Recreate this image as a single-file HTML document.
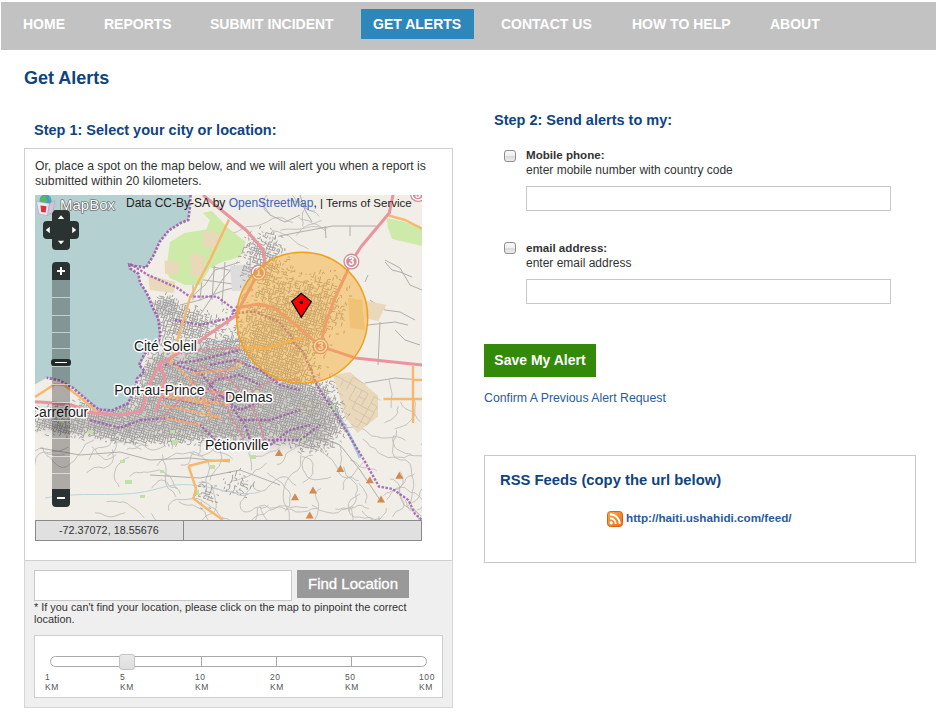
<!DOCTYPE html>
<html><head><meta charset="utf-8">
<style>
*{margin:0;padding:0;box-sizing:border-box}
html,body{width:936px;height:727px;overflow:hidden;background:#fff;font-family:"Liberation Sans",sans-serif;color:#333}
.a{position:absolute;white-space:nowrap}
#nav{position:absolute;left:1px;top:2px;width:935px;height:48px;background:#c2c2c2}
.ni{position:absolute;top:16px;font-size:14px;font-weight:bold;color:#fff;line-height:17px}
#act{position:absolute;left:361px;top:9px;width:113px;height:30px;background:#2d87ba}
h1{position:absolute;left:24px;top:67px;font-size:18px;font-weight:bold;color:#0f447f;line-height:22px;white-space:nowrap}
.h3{position:absolute;font-size:14.5px;font-weight:bold;color:#0f447f;line-height:17px;white-space:nowrap}
#box1{position:absolute;left:24px;top:148px;width:429px;height:413px;border:1px solid #cfcfcf;background:#fff}
#p1{position:absolute;left:35px;top:159px;font-size:12.2px;line-height:15px;color:#333}
#map{position:absolute;left:35px;top:195px;width:387px;height:325px;background:#f1eee8;overflow:hidden}
#coord{position:absolute;left:35px;top:520px;width:387px;height:21px;border:1px solid #8a8a8a;background:#e0e0e0}
#gray{position:absolute;left:24px;top:560px;width:429px;height:148px;background:#efefef;border:1px solid #d6d6d6;border-top:1px solid #cfcfcf}
.inp{position:absolute;background:#fff;border:1px solid #c8c8c8}
#find{position:absolute;left:297px;top:570px;width:112px;height:28px;background:#999;color:#fff;font-size:15px;line-height:28px;text-align:center;-webkit-text-stroke:0.3px #fff}
#note{position:absolute;left:34px;top:601px;font-size:10.9px;line-height:12px;color:#333}
#sbox{position:absolute;left:34px;top:635px;width:409px;height:63px;background:#fff;border:1px solid #cfcfcf}
#track{position:absolute;left:50px;top:656px;width:377px;height:11px;border:1px solid #a8a8a8;border-radius:6px;background:#fff}
.tick{position:absolute;top:657px;width:1px;height:9px;background:#a8a8a8}
#handle{position:absolute;left:119px;top:654px;width:16px;height:16px;border:1px solid #c4c4c4;border-radius:3px;background:linear-gradient(#e8e8e8,#dedede)}
.lab{position:absolute;top:672px;font-size:8.5px;line-height:10px;color:#555;letter-spacing:0.6px}
.cb{position:absolute;width:12px;height:12px;border:1px solid #8e8e8e;border-radius:3px;background:linear-gradient(#fbfbfb 0%,#efefef 45%,#dadada 50%,#ececec 100%)}
.lb{position:absolute;left:526px;font-size:12px;line-height:15px;color:#333;white-space:nowrap}
#save{position:absolute;left:484px;top:344px;width:112px;height:33px;background:#338908;color:#fff;font-size:14px;font-weight:bold;line-height:33px;text-align:center}
#conf{position:absolute;left:484px;top:391px;font-size:12.3px;line-height:15px;color:#2b5aa0;white-space:nowrap}
#rss{position:absolute;left:484px;top:455px;width:432px;height:108px;border:1px solid #c8c8c8}
</style></head><body>
<div id="nav"></div>
<div id="act"></div>
<div class="ni" style="left:23px">HOME</div>
<div class="ni" style="left:104px">REPORTS</div>
<div class="ni" style="left:210px">SUBMIT INCIDENT</div>
<div class="ni" style="left:373px">GET ALERTS</div>
<div class="ni" style="left:501px">CONTACT US</div>
<div class="ni" style="left:632px">HOW TO HELP</div>
<div class="ni" style="left:770px">ABOUT</div>

<h1>Get Alerts</h1>
<div class="h3" style="left:34px;top:122px">Step 1: Select your city or location:</div>
<div class="h3" style="left:494px;top:112px">Step 2: Send alerts to my:</div>

<div id="box1"></div>
<div id="p1">Or, place a spot on the map below, and we will alert you when a report is<br>submitted within 20 kilometers.</div>
<div id="map"><svg width="387" height="325" viewBox="35 195 387 325" style="position:absolute;left:0;top:0">
<rect x="35" y="195" width="387" height="325" fill="#f1eee8"/>
<path d="M210.1,480.4 L211.0,476.1 L213.7,472.7 L216.2,469.1 L219.3,466.0 L220.7,461.9 L221.8,457.7 L220.8,453.5 L220.0,449.2 L221.6,445.1 L223.8,441.4 L226.6,438.0 L228.8,434.3 L230.8,430.4M321.0,488.5 L318.2,489.8 L316.2,492.1 L315.2,495.0 L316.2,497.9 L317.3,500.7 L318.6,503.5 L318.6,506.5 L318.4,509.6 L317.7,512.5 L316.9,515.5 L315.5,518.2 L314.3,520.9 L314.0,524.0 L311.8,526.1 L308.7,526.3M360.2,493.7 L355.7,496.6 L351.1,499.1 L348.4,503.6 L348.5,508.9 L350.1,513.9 L354.3,517.1 L359.6,517.0 L364.7,518.2 L369.9,517.4 L374.7,519.6 L379.8,518.6M180.3,493.8 L179.1,490.8 L177.1,488.3 L174.0,487.4 L170.8,487.1 L168.4,485.0 L166.9,482.2 L164.1,480.5 L161.0,479.9 L158.0,481.1 L156.2,483.7 L153.5,485.5 L151.8,488.2M251.4,470.3 L251.5,464.3 L250.6,458.4 L248.8,452.7 L251.1,447.2 L249.2,441.6 L250.4,435.7 L254.9,431.8 L259.9,428.6 L265.8,429.3M42.6,446.9 L43.8,451.6 L46.8,455.5 L51.0,458.2 L53.8,462.2 L57.5,465.5 L62.0,467.5 L66.9,466.7 L70.5,463.4 L74.5,460.5 L77.2,456.4 L80.5,452.8 L83.1,448.6 L85.4,444.2 L89.8,442.1 L94.2,439.9M257.4,508.0 L257.4,512.9 L256.6,517.7 L254.4,522.0 L254.4,526.9 L253.6,531.7 L252.3,536.5 L250.0,540.7 L248.3,545.3M221.7,437.1 L223.8,439.6 L226.7,441.3 L229.0,443.7 L231.9,445.2 L233.9,447.8 L235.5,450.7M148.6,445.8 L145.2,445.5 L141.9,444.7 L138.7,445.8 L136.3,448.1 L132.9,448.7 L129.6,448.1 L126.5,449.5M194.2,452.4 L191.6,454.8 L190.4,458.1 L189.9,461.6 L187.7,464.3 L184.3,465.1 L180.7,465.0M302.5,482.6 L306.7,480.2 L310.3,477.1 L312.9,473.2 L312.6,468.4 L313.0,463.6 L310.6,459.5 L306.3,457.4 L301.6,456.6M87.9,436.5 L90.0,432.4 L93.4,429.2 L97.5,427.1 L102.1,426.8 L106.2,429.1 L110.6,430.5 L114.5,433.0 L116.5,437.2 L116.1,441.8 L116.3,446.4 L114.6,450.8 L111.0,453.7 L107.2,456.3M276.9,464.4 L279.9,464.0 L282.3,462.2 L283.9,459.6 L285.3,456.9 L285.9,454.0 L288.2,451.9 L290.9,450.5 L293.5,449.0 L296.0,447.3 L298.6,445.8 L301.3,444.3 L304.0,442.9 L306.2,440.9 L307.0,437.9 L305.7,435.1M405.5,440.2 L401.1,437.9 L396.3,436.5 L391.4,437.6 L386.5,437.9 L381.5,438.0 L376.7,436.5 L371.8,436.0 L368.0,432.7 L364.2,429.5 L359.5,427.9 L354.6,426.8 L349.7,427.5 L344.7,427.3 L340.3,425.1 L336.9,421.4M112.5,449.3 L112.9,454.0 L113.4,458.7 L111.7,463.2 L108.1,466.2 L103.7,468.1 L99.1,467.1 L94.3,467.6 L90.3,470.1 L86.5,472.8M141.5,449.3 L137.6,447.8 L134.4,445.2 L132.7,441.4 L131.6,437.4 L129.7,433.8 L129.5,429.6 L128.1,425.7 L127.2,421.7 L127.5,417.5 L126.4,413.5 L124.6,409.8 L123.5,405.8M253.3,487.7 L256.8,490.2 L261.1,491.3 L265.3,490.2 L268.1,486.8 L271.4,484.0 L274.5,480.9 L278.1,478.4 L282.1,476.8 L286.5,477.0 L289.8,479.8 L292.4,483.3 L296.2,485.5M218.9,446.1 L214.1,448.3 L210.5,452.1 L205.7,454.3 L200.8,456.2 L195.7,454.8 L190.6,453.5M420.8,444.3 L424.0,444.0 L426.6,442.0 L429.1,440.0 L432.0,438.3 L435.2,438.5 L438.5,438.1 L441.7,438.1 L444.6,439.6 L446.5,442.2M400.4,471.7 L402.9,477.1 L403.1,483.1 L399.8,488.1 L399.5,494.0 L401.4,499.7 L404.0,505.0 L409.2,508.0 L414.9,509.5 L418.5,514.3 L418.7,520.2 L420.9,525.7 L421.2,531.7 L425.3,536.1 L429.3,540.5 L435.1,541.6 L441.0,541.4M198.1,454.8 L200.3,451.8 L200.2,448.2 L200.4,444.5 L201.4,441.0 L204.2,438.7 L206.9,436.3M421.9,511.1 L423.3,505.7 L424.5,500.3 L428.7,496.7 L430.3,491.4 L429.7,485.9 L429.3,480.4 L427.3,475.3 L427.1,469.8 L427.9,464.3 L428.9,458.9 L432.3,454.5 L436.0,450.5 L438.6,445.6 L440.3,440.3M362.1,511.0 L364.4,514.2 L367.6,516.5 L370.7,518.8 L374.1,520.7 L378.1,520.6 L381.0,518.0 L383.4,514.9 L386.0,512.0 L386.3,508.1M390.0,479.0 L393.4,479.4 L395.9,481.6 L398.5,483.7 L399.6,486.9 L399.2,490.2 L399.3,493.6 L400.6,496.7 L401.9,499.8 L403.9,502.5 L404.0,505.9 L402.3,508.8 L399.2,510.2 L396.1,511.5 L394.2,514.2 L392.5,517.1M46.4,453.4 L49.4,454.3 L52.5,454.3 L55.4,455.2 L58.5,455.1 L61.6,454.9 L64.7,454.7M260.3,506.7 L261.4,510.3 L262.8,513.8 L264.7,517.0 L267.0,519.9 L269.2,522.9 L272.6,524.6 L276.3,524.8 L280.0,525.7 L283.4,527.3 L286.7,529.0 L288.9,532.0 L290.5,535.4 L290.3,539.2 L291.6,542.7 L291.5,546.5M348.7,511.2 L350.8,506.9 L354.4,503.7 L356.3,499.3 L355.6,494.6 L357.5,490.1 L356.9,485.4 L353.9,481.7 L350.3,478.5 L346.4,475.7 L344.9,471.1 L343.6,466.5M307.8,448.1 L312.6,446.5 L317.6,446.3 L322.0,448.8 L323.9,453.5 L328.0,456.5 L332.0,459.6 L334.7,463.8 L337.4,468.1 L338.9,473.0 L342.2,476.7 L347.1,477.9 L352.0,476.4 L354.8,472.2 L358.0,468.3 L361.3,464.4 L364.9,460.9M91.7,446.6 L94.4,448.8 L96.5,451.7 L98.3,454.7 L101.3,456.5 L103.8,459.0 L107.3,459.6 L110.6,458.4 L113.6,456.6 L116.4,454.5M172.2,448.9 L172.7,445.9 L171.9,443.0 L170.9,440.1 L170.9,437.1 L170.5,434.1 L168.9,431.5 L166.3,429.9 L163.7,428.3 L160.7,428.7 L157.9,427.4 L155.9,425.1M307.7,507.5 L301.9,507.4 L296.1,506.7 L290.3,507.3 L284.7,505.8 L278.9,506.0 L274.0,509.2 L268.4,510.5 L264.0,514.3 L258.2,515.0 L253.4,518.3 L249.6,522.7 L245.6,526.9 L242.4,531.8 L239.6,536.9 L239.4,542.7 L241.5,548.2M106.5,501.8 L110.9,501.2 L115.3,501.4 L119.6,502.4 L123.9,501.8 L127.8,503.8 L131.2,506.7 L135.1,508.8 L138.4,511.6 L141.5,514.8 L144.4,518.1M185.8,520.0 L188.8,522.1 L191.5,524.4 L195.1,525.1 L198.5,523.7 L201.2,521.2 L203.6,518.6 L206.1,515.9 L209.4,514.3 L212.9,513.4 L215.1,510.5 L216.2,507.0 L216.1,503.4 L215.3,499.9 L214.7,496.3 L213.6,492.8 L212.6,489.3M362.6,439.0 L367.0,442.1 L370.0,446.6 L375.1,448.4 L378.3,452.8 L383.2,455.3 L388.1,457.5 L393.5,457.3 L399.0,457.1 L404.3,457.7 L409.1,455.1 L414.5,455.7 L419.9,455.8 L425.3,456.0M266.4,462.9 L263.4,466.2 L259.8,468.8 L255.5,470.0 L252.8,473.6 L249.0,475.9 L245.0,477.7 L240.7,478.8 L236.5,480.4 L232.1,480.9 L228.8,483.9M157.0,465.8 L160.5,461.0 L166.0,458.8 L171.3,456.0 L176.5,453.1 L182.4,454.0 L188.2,452.8 L194.1,451.8 L199.5,454.3 L203.9,458.4 L208.4,462.3 L209.6,468.1 L208.1,473.9 L205.8,479.4 L206.6,485.3 L206.4,491.3M211.4,448.3 L214.2,451.2 L218.2,452.3 L222.2,453.0 L226.1,454.2 L229.6,456.1 L232.6,458.9M175.9,496.9 L173.2,491.7 L168.3,488.6 L165.7,483.3 L165.4,477.5 L166.1,471.6 L165.6,465.8 L163.3,460.4 L162.5,454.6M253.6,483.3 L251.6,486.5 L249.5,489.7 L246.8,492.4 L245.4,496.0 L243.2,499.2 L240.5,501.9 L240.1,505.7 L241.0,509.4 L243.9,511.8 L247.8,511.9 L251.4,510.6 L254.4,508.2 L258.0,507.1 L261.7,508.1 L265.5,507.3 L268.7,505.2M414.8,473.6 L411.9,475.7 L408.3,476.3 L405.7,478.8 L404.7,482.3 L402.3,485.1 L399.5,487.4 L396.1,488.5 L393.3,490.9 L390.9,493.5 L389.4,496.8 L386.7,499.3M177.8,488.8 L174.6,486.4 L173.3,482.7 L171.7,479.1 L169.4,475.8 L165.7,474.3 L163.3,471.1 L159.5,469.9 L155.6,470.9 L151.7,471.5 L147.8,472.3 L143.9,472.0 L140.0,472.9 L136.1,472.2 L132.4,473.8 L129.7,476.7M291.2,437.4 L290.6,432.9 L292.2,428.8 L292.2,424.3 L293.1,419.9 L293.0,415.4 L295.2,411.6 L296.5,407.3 L297.4,402.9 L298.9,398.6 L302.4,395.8M300.9,455.1 L300.4,460.5 L300.7,465.9 L297.8,470.5 L293.0,472.9 L289.3,476.9 L286.4,481.4 L284.4,486.5 L283.4,491.8 L283.2,497.2 L283.9,502.6 L286.7,507.2 L289.1,512.0 L289.3,517.4 L289.2,522.8M358.7,480.7 L355.5,480.0 L352.9,478.0 L349.7,477.2 L346.7,478.3 L344.5,480.8 L343.1,483.7 L343.8,486.9 L343.0,490.1M198.6,482.4 L204.0,482.1 L209.1,483.5 L212.7,487.5 L217.9,488.8 L222.8,491.1 L228.1,490.8 L233.3,492.3 L238.0,494.8 L243.3,495.6 L248.5,494.2M331.2,476.9 L327.3,478.4 L323.1,478.9 L319.0,479.5 L314.8,479.8 L310.7,478.9 L307.1,476.8 L305.2,473.0 L302.9,469.6 L302.3,465.4 L302.7,461.3 L305.1,457.8 L308.6,455.6 L312.8,455.3M378.9,516.2 L378.9,519.3 L380.4,521.9 L380.2,525.0 L378.3,527.4 L377.5,530.4 L378.0,533.4 L378.0,536.5 L377.2,539.5 L377.1,542.5 L377.6,545.6 L377.9,548.6 L379.1,551.4 L378.7,554.5 L378.5,557.5 L377.3,560.4 L376.9,563.4M95.2,512.8 L100.4,513.2 L105.0,515.7 L110.1,517.0 L115.3,516.0 L120.2,514.1 L125.3,512.7M267.2,472.5 L269.6,475.2 L273.0,476.7 L275.7,479.2 L278.9,480.9 L282.0,482.9 L284.0,486.0 L286.0,489.0 L289.0,491.2 L290.4,494.6 L289.7,498.2 L289.8,501.9 L289.6,505.6 L287.3,508.4 L285.1,511.3M120.5,434.5 L116.3,437.9 L112.1,441.2 L109.1,445.7 L103.9,447.2 L98.5,447.6 L93.6,449.9 L91.3,454.8 L89.1,459.7M178.8,501.7 L183.0,504.1 L187.7,505.3 L192.5,504.9 L196.8,507.0 L201.1,509.1 L205.0,512.0 L206.1,516.7 L208.6,520.8 L210.9,525.0 L215.0,527.7 L217.8,531.6 L222.4,532.8M352.9,506.2 L351.5,509.1 L352.0,512.3 L352.5,515.5 L353.2,518.7 L351.8,521.7 L350.1,524.4 L347.3,526.0 L345.0,528.4M340.5,467.5 L340.7,464.3 L341.1,461.0 L341.7,457.8 L340.7,454.7 L341.2,451.4 L340.8,448.2 L339.6,445.1 L336.9,443.3 L333.8,442.2 L330.7,441.3 L327.9,439.5 L324.9,438.3 L322.3,436.3 L319.1,436.0 L315.8,436.1 L312.5,436.5M409.2,504.7 L412.9,502.4 L416.5,499.9 L419.2,496.6 L419.8,492.3 L422.0,488.6 L425.7,486.3 L430.0,486.0 L434.3,487.1 L437.3,490.2 L441.4,491.5 L445.2,493.6 L447.1,497.5 L447.6,501.8 L445.4,505.6 L442.1,508.3 L438.5,510.8M68.6,447.0 L64.0,449.2 L59.1,451.1 L53.9,451.3 L48.9,452.8 L43.8,451.9 L39.0,453.9 L35.8,457.9 L35.2,463.1 L33.5,468.0 L30.3,472.1 L29.3,477.2 L29.0,482.4M358.9,483.3 L361.0,485.9 L363.3,488.3 L364.6,491.3 L366.5,494.0 L367.0,497.2 L365.7,500.2 L365.9,503.5M114.5,443.3 L118.7,441.9 L123.2,441.9 L127.6,442.6 L132.0,442.1 L136.2,443.4 L140.7,443.2 L144.3,445.8 L147.8,448.6 L152.0,450.0 L156.4,449.6 L160.6,447.9 L164.5,446.0M250.6,448.4 L253.8,444.1 L254.6,438.8 L257.3,434.1 L262.0,431.7 L266.9,429.5 L271.3,426.4 L275.7,423.2 L278.0,418.4 L281.6,414.5 L286.9,413.7 L292.3,413.0M311.9,505.2 L316.2,507.0 L319.6,510.3 L324.1,511.5 L328.7,512.6 L333.3,513.2 L338.0,512.7 L341.6,509.7 L346.3,509.0 L350.4,506.8M376.7,470.7 L373.5,468.9 L369.8,469.3 L366.4,467.7 L362.7,467.6 L359.2,466.4 L357.0,463.4 L354.0,461.1 L350.4,460.4M396.5,430.3 L396.2,436.0 L393.4,441.0 L393.0,446.7 L392.3,452.3 L394.8,457.4 L399.9,459.9 L405.6,460.0 L410.0,463.6 L411.4,469.1 L411.7,474.8 L413.4,480.2 L413.8,485.9 L412.4,491.4 L411.8,497.1 L410.6,502.6 L407.1,507.1M41.3,448.0 L38.4,449.0 L35.7,450.5 L33.4,452.6 L32.3,455.5 L32.4,458.6 L30.7,461.2 L30.9,464.3 L29.8,467.2 L27.9,469.6 L25.2,471.1 L22.7,473.0 L20.2,474.8 L19.1,477.7M168.7,510.7 L168.6,505.4 L172.0,501.3 L176.8,499.2 L182.1,499.7 L187.3,499.4 L192.5,498.7 L197.8,498.5 L202.4,501.1 L206.9,503.9 L211.2,506.9 L215.9,509.4 L218.4,514.0 L222.0,517.8 L227.2,518.8 L231.8,521.4M383.4,495.9 L386.2,493.1 L390.0,492.1 L393.2,489.8 L397.2,489.2 L400.6,487.3 L404.6,487.5 L407.7,490.0 L410.8,492.4 L414.8,492.8 L417.9,495.3 L420.8,497.9 L423.1,501.2 L423.0,505.2 L421.0,508.6 L417.3,509.9M317.8,508.4 L312.2,508.8 L307.2,511.3 L301.6,511.9 L296.0,512.0 L291.3,509.1 L285.7,509.2 L280.5,507.0 L274.9,507.7 L269.4,508.2 L264.6,505.2 L259.1,506.1M129.4,456.9 L126.2,458.4 L123.0,459.8 L120.8,462.6 L118.0,464.6 L116.1,467.6 L115.1,471.0 L114.3,474.4 L114.4,477.9 L115.4,481.3 L117.9,483.8 L119.2,487.1M335.5,509.1 L339.4,509.4 L343.0,508.0 L346.9,508.4 L350.8,508.1 L354.6,507.6 L357.9,505.5 L361.7,505.3 L364.9,507.6 L368.7,508.4M279.7,447.2 L276.2,450.7 L271.3,451.3 L266.8,453.5 L262.6,456.1 L257.7,456.2 L252.9,457.4M405.3,500.1 L406.7,503.0 L407.2,506.2 L408.9,509.0 L411.7,510.7 L414.8,511.3 L417.8,512.6 L420.0,515.0 L422.6,516.9 L424.7,519.4 L425.2,522.6 L425.3,525.8 L426.6,528.8M151.5,513.4 L153.2,516.6 L155.2,519.8 L158.5,521.3 L160.5,524.4 L163.9,525.8 L165.9,528.9 L169.4,529.9 L172.8,531.4 L176.1,533.1 L179.6,534.3 L182.9,535.9 L186.5,535.9 L189.4,538.1 L193.0,539.0 L196.6,538.2 L200.3,538.6M272.0,230.6 L277.9,231.6 L283.3,234.0 L289.0,235.9 L293.4,239.9 L297.8,243.9 L303.3,246.3 L308.6,249.0M315.1,211.2 L309.8,210.6 L305.0,208.2 L300.7,205.0 L296.5,201.8 L294.2,197.0 L290.4,193.2 L287.8,188.5 L283.8,184.9 L280.2,180.9 L275.7,178.0 L271.1,175.4 L267.3,171.6M325.1,230.6 L322.0,228.4 L319.2,225.8 L315.9,224.1 L312.2,223.3 L309.2,221.0 L305.5,220.1 L301.8,219.5 L298.6,217.5M292.8,222.4 L287.5,221.1 L283.0,218.0 L277.7,217.3 L272.4,218.6 L267.9,221.5 L262.9,223.8 L257.9,225.7 L252.5,226.4 L247.1,226.5 L242.2,228.8 L237.5,231.6 L232.4,233.3M327.4,228.2 L322.1,227.5 L316.9,226.7 L311.6,226.5 L306.4,227.7 L301.3,228.9 L296.0,229.3 L290.7,229.1 L285.4,229.2 L280.2,230.2M302.7,226.4 L303.1,223.1 L302.4,219.8 L302.4,216.4 L302.5,213.0 L304.2,210.1M270.2,213.4 L267.1,212.4 L264.8,210.1 L263.7,207.1 L263.1,203.8 L263.3,200.6 L265.0,197.7 L267.0,195.1M290.7,200.3 L294.8,201.5 L299.0,201.8 L302.7,203.9 L305.2,207.4 L308.6,210.0 L312.6,211.4 L316.5,213.1 L319.1,216.4M321.6,220.5 L317.5,222.0 L313.5,223.9 L309.2,224.6 L305.2,226.5 L301.6,229.0 L299.0,232.5 L296.1,235.8M391.1,408.1 L391.2,403.4 L391.3,398.6 L392.1,393.9 L391.0,389.2 L390.0,384.5 L389.1,379.8M400.5,401.9 L402.2,405.6 L405.1,408.4 L408.8,410.3 L412.6,411.7 L415.3,414.8 L417.1,418.5 L419.8,421.6M398.4,406.1 L397.2,409.3 L397.6,412.7 L395.9,415.7 L393.3,417.9 L390.7,420.2 L387.5,421.2 L384.4,422.7M394.5,435.1 L392.7,437.8 L392.6,440.9 L393.8,443.9 L394.6,446.9 L396.9,449.1 L399.7,450.6 L402.6,452.0 L405.4,453.4 L408.5,453.6 L411.6,454.5M394.6,429.0 L398.5,427.6 L402.4,426.3 L406.3,424.8 L409.2,421.9 L412.1,418.9 L414.4,415.6 L415.0,411.5 L414.9,407.3 L415.4,403.2 L414.1,399.3" stroke="#b9b7b4" stroke-width="0.8" fill="none"/>
<path d="M278.0,236.3 L300.0,232.0 L332.5,226.0 L376.4,226.0M260.0,200.0 L270.0,215.0 L285.0,222.0 L300.0,215.0M300.0,195.0 L305.0,210.0 L312.0,222.0M325.0,226.0 L326.0,238.0M350.0,226.0 L350.0,236.0M190.0,298.0 L205.0,285.0 L215.0,270.0 L240.0,262.0M180.0,305.0 L200.0,300.0 L225.0,290.0 L245.0,285.0M200.0,315.0 L210.0,300.0 L222.0,280.0 L235.0,265.0M385.0,260.0 L400.0,268.0 L410.0,285.0 L422.0,290.0M370.0,300.0 L385.0,310.0 L400.0,312.0 L415.0,320.0M395.0,330.0 L405.0,340.0 L420.0,345.0M193.0,240.0 L193.0,300.0M205.0,248.0 L200.0,300.0M215.0,255.0 L212.0,300.0M225.0,262.0 L222.0,305.0M185.0,262.0 L240.0,272.0M190.0,278.0 L240.0,285.0M185.0,250.0 L215.0,246.0M40.0,448.0 L80.0,455.0 L120.0,452.0 L150.0,460.0 L190.0,458.0 L230.0,462.0M150.0,475.0 L200.0,478.0 L240.0,470.0 L280.0,485.0M300.0,430.0 L340.0,445.0 L360.0,470.0 L380.0,500.0M368.0,325.0 L395.0,322.0 L408.0,325.0M380.0,322.0 L378.0,365.0M385.0,262.0 L392.0,270.0 L400.0,272.0 L412.0,277.0M368.0,275.0 L365.0,282.0M365.0,383.0 L395.0,378.0 L422.0,380.0" stroke="#b0aeab" stroke-width="1" fill="none"/>
<path d="M45,498 C90,490 120,500 160,488 S230,500 260,492" stroke="#b4d0d8" stroke-width="0.9" fill="none"/>
<path d="M205,342 L240,341" stroke="#b4b4d8" stroke-width="1.6" fill="none"/>
<path d="M328,398 C336,412 345,425 352,440 S358,452 360,458" stroke="#a9cad6" stroke-width="3" fill="none"/>
<polygon points="166.0,271.0 170.0,242.0 184.5,233.0 206.0,229.5 210.0,220.0 202.7,213.0 212.0,211.0 228.0,228.0 246.0,242.0 240.0,257.0 222.0,262.0 210.0,268.0 200.0,285.0 185.0,285.0 170.0,278.0" fill="#cdeaa8"/>
<polygon points="386.7,218.0 405.0,222.0 422.0,228.6 422.0,246.0 392.0,239.0 388.0,228.0" fill="#cdeaa8"/>
<path d="M155,301 L175,299 L177,314 L157,316Z M230,266 L250,264 L252,290 L232,291Z" fill="#dcdcdc"/>
<polygon points="164.5,260.5 179.0,262.0 178.0,275.0 165.0,274.0" fill="#ead8ba"/>
<polygon points="190.0,253.0 204.5,256.0 203.0,276.8 191.0,275.0" fill="#ead8ba"/>
<polygon points="202.7,231.4 219.0,233.0 218.0,249.5 204.0,248.0" fill="#ead8ba"/>
<polygon points="148.0,275.0 175.4,282.0 174.0,293.0 150.0,290.0" fill="#ead8ba"/>
<polygon points="332.6,375.0 350.0,372.0 378.0,395.7 378.0,416.4 357.4,433.0 345.0,416.4 338.0,391.0" fill="#ead8ba"/>
<polygon points="300.0,402.0 318.0,400.0 318.0,415.0 302.0,416.0" fill="#ead8ba"/>
<polygon points="365.7,300.7 386.4,304.8 378.0,321.3 366.0,318.0" fill="#ead8ba"/>
<polygon points="348.0,298.0 362.0,300.0 365.0,330.0 350.0,328.0" fill="#ead8ba"/>
<path d="M331.1,373.2L337.6,376.9M337.7,376.6L343.7,379.9M343.8,380.3L349.8,383.2M343.3,380.3L340.4,386.2M337.2,392.4L343.3,395.6M353.2,377.5L359.4,380.9M352.7,377.4L349.9,383.3M349.6,383.1L355.9,387.0M349.6,383.5L346.3,389.5M339.8,402.2L345.7,405.2M359.4,380.9L365.4,384.4M355.5,386.8L362.2,390.4M355.9,386.6L352.7,393.1M352.3,393.1L349.1,398.9M349.2,399.3L355.4,402.7M346.0,405.6L342.6,411.7M342.4,411.1L348.6,415.0M361.9,390.1L368.0,393.5M362.1,390.0L358.8,396.5M358.8,396.2L365.1,399.8M358.6,396.6L355.1,402.2M355.3,402.6L361.4,405.7M355.5,402.4L352.0,408.8M351.9,408.6L357.9,411.8M348.6,414.8L345.4,420.9M368.2,393.5L364.7,399.8M364.6,399.6L361.4,405.5M361.5,406.2L367.8,409.2M358.2,411.9L364.1,415.3M354.7,417.9L360.9,421.7M351.1,424.2L357.5,427.4M374.2,396.6L380.4,400.4M374.1,396.7L370.9,403.0M371.2,403.0L377.0,406.5M371.2,403.0L367.5,409.2M367.5,408.8L373.7,412.6M367.6,409.3L364.1,415.6M364.3,415.5L370.3,418.8M364.2,415.6L360.8,421.5M360.8,421.4L367.4,424.8M360.9,421.8L357.4,427.4M377.1,406.6L373.7,412.5M373.8,412.8L370.6,418.8M370.3,418.5L367.1,424.8" stroke="#c9c0b0" stroke-width="0.8" fill="none"/>
<filter id="bl" x="-20%" y="-20%" width="140%" height="140%"><feGaussianBlur stdDeviation="5"/></filter>
<polygon points="40.0,405.0 90.0,410.0 140.0,405.0 150.0,360.0 175.0,345.0 235.0,345.0 262.0,375.0 320.0,392.0 335.0,425.0 320.0,445.0 260.0,448.0 200.0,435.0 140.0,436.0 40.0,430.0" fill="#cac8c4" opacity="0.75" filter="url(#bl)"/>
<path d="M30.6,409.9L33.0,410.7M33.0,410.7L35.8,410.7M32.3,412.7L32.0,415.3M31.6,417.3L33.6,418.4M31.6,417.3L30.0,419.2M37.1,405.9L39.6,407.1M35.8,410.7L34.3,413.2M34.3,413.2L37.1,414.4M34.3,413.2L33.6,415.7M33.6,415.7L36.7,416.6M33.6,415.7L33.6,418.4M33.6,418.4L35.7,419.0M33.3,420.9L34.8,421.4M33.3,420.9L32.3,423.1M32.3,423.1L32.1,425.2M32.1,425.2L31.0,427.4M31.0,427.4L32.7,428.0M36.7,416.6L39.0,416.8M36.7,416.6L35.7,419.0M35.7,419.0L34.8,421.4M34.8,421.4L37.2,421.8M35.3,423.4L33.8,426.6M32.8,430.4L35.1,431.1M40.6,410.2L42.8,410.6M41.2,411.9L39.8,415.1M39.8,415.1L42.9,415.1M39.0,416.8L40.8,417.5M39.0,416.8L38.6,419.5M38.6,419.5L41.3,419.8M38.6,419.5L37.2,421.8M37.2,421.8L40.4,422.8M37.2,421.8L37.2,424.9M37.2,424.9L39.8,424.7M37.2,424.9L36.0,426.7M36.0,426.7L39.3,427.4M36.1,429.5L35.1,431.1M43.4,408.7L42.8,410.6M42.8,410.6L45.7,410.8M42.8,410.6L42.4,412.7M42.4,412.7L44.8,413.7M42.4,412.7L42.9,415.1M42.9,415.1L44.3,416.6M42.9,415.1L40.8,417.5M40.8,417.5L43.6,419.2M41.3,419.8L42.8,420.8M40.4,422.8L42.1,423.4M40.4,422.8L39.8,424.7M39.8,424.7L42.5,425.3M39.8,424.7L39.3,427.4M39.3,427.4L41.6,428.7M39.3,427.4L37.5,429.7M37.5,429.7L41.1,430.5M37.5,429.7L37.0,432.2M48.6,403.6L47.7,407.2M46.2,409.3L49.0,409.3M46.2,409.3L45.7,410.8M45.7,410.8L48.0,412.4M45.7,410.8L44.8,413.7M44.8,413.7L47.7,413.8M44.3,416.6L46.9,416.3M44.3,416.6L43.6,419.2M43.6,419.2L46.7,418.9M43.6,419.2L42.8,420.8M42.8,420.8L45.0,421.2M42.8,420.8L42.1,423.4M42.1,423.4L44.6,423.3M42.5,425.3L44.8,426.6M42.5,425.3L41.6,428.7M49.6,407.5L52.0,407.5M49.0,409.3L51.2,410.6M49.0,409.3L48.0,412.4M48.0,412.4L50.9,412.0M48.0,412.4L47.7,413.8M47.7,413.8L50.6,415.3M47.7,413.8L46.9,416.3M46.9,416.3L49.2,417.5M46.9,416.3L46.7,418.9M46.7,418.9L49.0,420.0M46.7,418.9L45.0,421.2M45.0,421.2L48.5,422.4M45.0,421.2L44.6,423.3M44.6,423.3L46.9,424.2M44.6,423.3L44.8,426.6M44.8,426.6L46.0,427.1M44.8,426.6L43.1,429.4M43.1,429.4L45.5,429.8M52.0,407.5L54.6,409.3M52.0,407.5L51.2,410.6M51.2,410.6L50.9,412.0M50.9,412.0L53.5,414.2M50.6,415.3L52.5,416.5M50.6,415.3L49.2,417.5M49.2,417.5L51.9,417.9M49.2,417.5L49.0,420.0M49.0,420.0L51.6,420.1M49.0,420.0L48.5,422.4M48.5,422.4L50.2,423.4M46.9,424.2L49.5,425.3M46.9,424.2L46.0,427.1M46.0,427.1L49.5,427.7M44.8,434.3L47.1,435.6M55.5,406.1L57.4,406.7M55.5,406.1L54.6,409.3M54.6,409.3L53.7,411.6M53.7,411.6L53.5,414.2M53.5,414.2L55.5,413.5M53.5,414.2L52.5,416.5M52.5,416.5L54.5,416.7M52.5,416.5L51.9,417.9M51.9,417.9L54.9,418.7M51.9,417.9L51.6,420.1M51.6,420.1L53.1,421.4M51.6,420.1L50.2,423.4M50.2,423.4L53.3,424.0M50.2,423.4L49.5,425.3M49.5,425.3L51.9,426.1M49.5,425.3L49.5,427.7M49.5,427.7L51.8,427.9M49.5,427.7L48.9,429.7M47.1,435.6L48.9,435.5M57.8,404.3L57.4,406.7M57.2,409.2L58.6,410.3M57.2,409.2L56.2,411.0M56.2,411.0L58.8,412.0M56.2,411.0L55.5,413.5M55.5,413.5L58.1,414.7M55.5,413.5L54.5,416.7M54.5,416.7L54.9,418.7M54.9,418.7L56.9,419.9M54.9,418.7L53.1,421.4M53.1,421.4L56.5,421.6M53.3,424.0L51.9,426.1M51.9,426.1L54.8,427.2M51.8,427.9L53.4,429.7M51.8,427.9L50.9,430.3M60.1,407.8L63.1,408.1M60.1,407.8L58.6,410.3M58.6,410.3L62.1,411.1M58.8,412.0L61.5,413.9M58.8,412.0L58.1,414.7M58.1,414.7L60.7,415.7M58.1,414.7L56.7,417.0M56.7,417.0L60.1,417.5M56.7,417.0L56.9,419.9M56.9,419.9L58.7,420.8M56.9,419.9L56.5,421.6M56.5,421.6L58.2,423.3M55.5,424.2L57.2,425.4M55.5,424.2L54.8,427.2M54.8,427.2L57.4,428.1M54.8,427.2L53.4,429.7M53.4,429.7L53.8,431.5M53.8,431.5L55.3,431.8M53.0,433.5L54.5,435.3M63.1,408.1L62.1,411.1M62.1,411.1L64.3,411.4M62.1,411.1L61.5,413.9M61.5,413.9L63.9,414.0M61.5,413.9L60.7,415.7M60.7,415.7L63.0,416.5M60.7,415.7L60.1,417.5M60.1,417.5L61.9,418.6M60.1,417.5L58.7,420.8M58.7,420.8L61.1,420.8M58.7,420.8L58.2,423.3M58.2,423.3L60.9,424.0M58.2,423.3L57.2,425.4M57.2,425.4L59.6,425.5M57.2,425.4L57.4,428.1M57.4,428.1L56.1,430.3M56.1,430.3L55.3,431.8M65.3,405.8L65.0,408.7M65.0,408.7L67.3,409.2M65.0,408.7L64.3,411.4M64.3,411.4L66.4,411.4M64.3,411.4L63.9,414.0M63.9,414.0L65.9,414.4M63.9,414.0L63.0,416.5M63.0,416.5L65.9,416.6M61.9,418.6L64.5,419.8M61.9,418.6L61.1,420.8M61.1,420.8L63.6,422.3M61.1,420.8L60.9,424.0M60.9,424.0L59.6,425.5M59.6,425.5L62.1,426.6M59.6,425.5L59.3,428.5M59.3,428.5L61.2,428.0M59.3,428.5L58.2,430.2M58.2,430.2L60.7,431.0M58.2,430.2L58.2,433.0M68.8,402.7L68.1,405.0M68.1,405.0L68.0,406.5M68.0,406.5L70.4,407.3M67.3,409.2L66.4,411.4M66.4,411.4L68.7,412.2M66.4,411.4L65.9,414.4M65.9,414.4L67.7,414.7M65.9,414.4L65.9,416.6M65.9,416.6L67.7,417.2M65.9,416.6L64.5,419.8M64.5,419.8L63.6,422.3M63.6,422.3L66.0,421.9M63.6,422.3L63.1,423.6M63.1,423.6L62.1,426.6M62.1,426.6L65.2,427.8M62.1,426.6L61.2,428.0M61.2,428.0L63.9,430.1M61.2,428.0L60.7,431.0M60.7,431.0L62.7,432.4M60.7,431.0L60.6,434.1M60.6,434.1L59.1,436.1M72.2,400.1L75.4,401.6M71.5,403.2L70.5,404.6M70.5,404.6L70.4,407.3M70.4,407.3L72.4,409.1M70.4,407.3L69.8,410.6M69.8,410.6L72.3,411.2M69.8,410.6L68.7,412.2M68.7,412.2L71.5,413.7M68.7,412.2L67.7,414.7M67.7,414.7L70.2,415.0M67.7,414.7L67.7,417.2M67.7,417.2L70.2,417.9M67.7,417.2L66.6,419.6M66.6,419.6L69.7,420.1M66.6,419.6L66.0,421.9M66.0,421.9L65.5,424.8M65.5,424.8L68.0,425.7M65.5,424.8L65.2,427.8M65.2,427.8L66.7,427.5M65.2,427.8L63.9,430.1M63.9,430.1L67.0,430.8M63.9,430.1L62.7,432.4M62.7,432.4L66.0,432.2M72.9,406.7L72.4,409.1M72.4,409.1L74.4,409.5M72.4,409.1L72.3,411.2M72.3,411.2L74.8,411.4M72.3,411.2L71.5,413.7M71.5,413.7L73.2,414.6M71.5,413.7L70.2,415.0M70.2,417.9L71.8,418.8M70.2,417.9L69.7,420.1M69.7,420.1L68.4,422.7M68.4,422.7L70.9,424.1M68.0,425.7L66.7,427.5M66.7,427.5L69.2,428.0M66.7,427.5L67.0,430.8M67.0,430.8L68.8,431.3M67.0,430.8L66.0,432.2M66.0,432.2L68.6,433.9M66.0,432.2L64.8,434.6M78.3,399.5L80.6,400.3M75.4,407.2L77.9,407.8M75.4,407.2L74.4,409.5M74.4,409.5L78.0,410.7M74.4,409.5L74.8,411.4M74.8,411.4L77.2,412.7M74.8,411.4L73.2,414.6M73.2,414.6L75.7,415.2M72.6,416.0L71.8,418.8M71.8,418.8L74.8,420.3M71.8,418.8L71.9,421.9M71.9,421.9L73.4,422.4M71.9,421.9L70.9,424.1M70.9,424.1L73.4,425.0M70.9,424.1L69.7,425.7M69.7,425.7L73.0,427.6M69.7,425.7L69.2,428.0M69.2,428.0L72.0,428.7M68.8,431.3L71.6,431.5M68.8,431.3L68.6,433.9M68.6,433.9L70.0,433.9M66.9,435.7L67.0,438.6M79.5,402.2L82.6,403.1M78.8,405.3L81.5,405.4M77.9,407.8L80.7,407.6M77.9,407.8L78.0,410.7M78.0,410.7L79.4,410.9M78.0,410.7L77.2,412.7M77.2,412.7L78.5,413.0M77.2,412.7L75.7,415.2M75.7,415.2L79.1,415.1M75.7,415.2L75.6,417.6M75.6,417.6L78.3,418.5M75.6,417.6L74.8,420.3M74.8,420.3L77.6,420.5M74.8,420.3L73.4,422.4M73.4,422.4L73.4,425.0M73.4,425.0L76.2,424.6M73.4,425.0L73.0,427.6M73.0,427.6L74.7,427.2M73.0,427.6L72.0,428.7M72.0,428.7L75.0,429.7M72.0,428.7L71.6,431.5M71.6,431.5L73.9,431.8M71.6,431.5L70.0,433.9M70.6,436.3L72.5,437.4M83.8,398.8L82.4,400.6M82.6,403.1L84.6,403.9M82.6,403.1L81.5,405.4M81.5,405.4L83.4,407.2M81.5,405.4L80.7,407.6M80.7,407.6L79.4,410.9M79.4,410.9L78.5,413.0M78.5,413.0L81.2,414.0M78.5,413.0L79.1,415.1M79.1,415.1L80.9,416.5M79.1,415.1L78.3,418.5M78.3,418.5L80.4,418.4M78.3,418.5L77.6,420.5M77.6,420.5L78.8,420.9M77.6,420.5L76.6,422.2M76.6,422.2L78.4,422.9M76.2,424.6L77.5,425.7M76.2,424.6L74.7,427.2M74.7,427.2L77.5,428.7M74.7,427.2L75.0,429.7M75.0,429.7L76.6,430.4M75.0,429.7L73.9,431.8M73.9,431.8L75.5,432.9M73.9,431.8L72.5,434.6M85.7,401.8L84.6,403.9M84.6,403.9L83.4,407.2M83.4,407.2L86.1,407.9M83.5,408.5L85.8,409.6M83.5,408.5L81.7,411.4M81.7,411.4L84.7,411.5M81.7,411.4L81.2,414.0M81.2,414.0L84.3,414.3M81.2,414.0L80.9,416.5M80.9,416.5L83.2,416.7M80.9,416.5L80.4,418.4M80.4,418.4L82.4,419.8M80.4,418.4L78.8,420.9M78.8,420.9L82.4,422.0M78.8,420.9L78.4,422.9M78.4,422.9L81.4,424.5M78.4,422.9L77.5,425.7M77.5,425.7L80.7,427.2M77.5,425.7L77.5,428.7M77.5,428.7L79.6,429.1M77.5,428.7L76.6,430.4M76.6,430.4L75.5,432.9M75.5,432.9L78.1,433.3M75.2,435.4L74.7,438.2M88.1,399.8L87.1,402.8M86.4,404.7L89.2,405.9M86.4,404.7L86.1,407.9M86.1,407.9L88.1,407.2M86.1,407.9L85.8,409.6M85.8,409.6L88.4,410.4M85.8,409.6L84.7,411.5M84.7,411.5L87.4,413.4M84.3,414.3L83.2,416.7M83.2,416.7L86.3,417.8M83.2,416.7L82.4,419.8M82.4,419.8L85.0,420.2M82.4,419.8L82.4,422.0M82.4,422.0L84.5,422.5M82.4,422.0L81.4,424.5M81.4,424.5L84.3,424.4M81.4,424.5L80.7,427.2M80.7,427.2L82.7,427.7M80.7,427.2L79.6,429.1M79.6,429.1L81.7,429.9M79.6,429.1L78.6,431.8M78.6,431.8L82.4,431.5M78.1,433.3L80.6,434.0M78.1,433.3L78.4,435.8M90.1,403.0L89.2,405.9M89.2,405.9L92.2,405.7M89.2,405.9L88.1,407.2M88.1,407.2L90.7,408.2M88.1,407.2L88.4,410.4M88.4,410.4L90.2,410.5M88.4,410.4L87.4,413.4M87.4,413.4L89.4,413.6M87.4,413.4L86.5,415.3M86.5,415.3L89.1,416.0M86.5,415.3L86.3,417.8M86.3,417.8L87.9,418.4M86.3,417.8L85.0,420.2M85.0,420.2L84.5,422.5M84.5,422.5L87.1,423.3M84.5,422.5L84.3,424.4M84.3,424.4L82.7,427.7M82.7,427.7L85.6,427.3M82.7,427.7L81.7,429.9M81.7,429.9L84.6,430.0M81.7,429.9L82.4,431.5M82.4,431.5L80.6,434.0M80.6,434.0L83.5,435.7M80.7,436.6L83.2,437.6M80.7,436.6L79.1,438.7M92.2,404.0L92.2,405.7M92.2,405.7L94.5,406.7M92.2,405.7L90.7,408.2M90.7,408.2L90.2,410.5M90.2,410.5L93.1,412.1M90.2,410.5L89.4,413.6M89.4,413.6L91.6,413.9M89.4,413.6L89.1,416.0M89.1,416.0L91.8,416.3M89.1,416.0L87.9,418.4M87.9,418.4L90.4,418.4M87.9,418.4L87.1,420.9M87.1,420.9L89.2,421.2M87.1,423.3L88.6,423.3M86.6,425.0L88.8,425.8M86.6,425.0L85.6,427.3M85.6,427.3L87.9,427.9M84.6,430.0L84.6,432.7M84.6,432.7L85.9,433.0M84.6,432.7L83.5,435.7M83.5,435.7L83.2,437.6M81.6,439.3L84.5,440.4M94.5,406.7L95.9,406.9M92.9,409.4L96.0,410.4M92.9,409.4L93.1,412.1M93.1,412.1L94.6,412.3M93.1,412.1L91.6,413.9M91.6,413.9L91.8,416.3M91.8,416.3L93.9,416.7M91.8,416.3L90.4,418.4M90.4,418.4L93.3,420.2M90.4,418.4L89.2,421.2M89.2,421.2L92.6,421.5M89.2,421.2L88.6,423.3M88.6,423.3L91.4,424.8M88.6,423.3L88.8,425.8M88.8,425.8L90.2,427.3M88.8,425.8L87.9,427.9M87.9,427.9L90.3,429.8M87.9,427.9L87.3,430.5M87.3,430.5L89.0,430.9M87.3,430.5L85.9,433.0M96.0,410.4L98.6,410.9M96.0,410.4L94.6,412.3M94.6,412.3L94.1,415.2M94.1,415.2L93.9,416.7M93.9,416.7L95.6,417.4M93.9,416.7L93.3,420.2M93.3,420.2L95.8,420.9M93.3,420.2L92.6,421.5M92.6,421.5L94.2,422.9M92.6,421.5L91.4,424.8M91.4,424.8L94.5,425.4M91.4,424.8L90.2,427.3M90.2,427.3L94.1,427.1M90.2,427.3L90.3,429.8M90.3,429.8L92.5,430.5M90.3,429.8L89.0,430.9M89.0,430.9L91.9,432.8M89.0,430.9L89.3,434.5M89.3,434.5L91.5,435.5M89.3,434.5L88.6,435.9M88.6,435.9L90.6,436.6M98.6,410.9L100.1,412.0M98.6,410.9L97.1,412.8M97.1,412.8L99.2,414.1M97.1,412.8L96.4,416.0M96.4,416.0L98.6,416.1M96.4,416.0L95.6,417.4M95.6,417.4L98.6,418.3M95.6,417.4L95.8,420.9M95.8,420.9L97.8,421.3M95.8,420.9L94.2,422.9M94.2,422.9L97.5,423.4M94.2,422.9L94.5,425.4M94.5,425.4L95.9,426.0M94.5,425.4L94.1,427.1M94.1,427.1L95.3,428.0M94.1,427.1L92.5,430.5M92.5,430.5L94.6,429.9M92.5,430.5L91.9,432.8M91.9,432.8L94.3,432.9M91.5,435.5L94.2,435.0M101.7,409.5L103.9,410.1M101.7,409.5L100.1,412.0M100.1,412.0L102.4,412.4M99.2,414.1L102.0,413.9M99.2,414.1L98.6,416.1M98.6,416.1L102.0,416.9M98.6,416.1L98.6,418.3M98.6,418.3L100.4,419.6M98.6,418.3L97.8,421.3M97.8,421.3L100.3,421.7M97.8,421.3L97.5,423.4M97.5,423.4L99.6,424.0M97.5,423.4L95.9,426.0M95.9,426.0L99.2,426.8M95.9,426.0L95.3,428.0M95.3,428.0L98.2,428.4M95.3,428.0L94.6,429.9M94.6,429.9L97.4,431.7M94.6,429.9L94.3,432.9M94.3,432.9L96.9,433.8M94.3,432.9L94.2,435.0M94.2,435.0L95.7,436.0M103.9,410.1L102.4,412.4M102.4,412.4L105.6,413.4M102.4,412.4L102.0,413.9M102.0,413.9L104.2,414.9M102.0,413.9L102.0,416.9M102.0,416.9L104.3,418.1M102.0,416.9L100.4,419.6M100.4,419.6L102.7,420.5M100.4,419.6L100.3,421.7M100.3,421.7L102.0,421.9M100.3,421.7L99.6,424.0M99.6,424.0L102.3,425.2M99.6,424.0L99.2,426.8M99.2,426.8L100.8,427.6M99.2,426.8L98.2,428.4M98.2,428.4L100.2,429.9M98.2,428.4L97.4,431.7M97.4,431.7L100.0,431.8M97.4,431.7L96.9,433.8M95.7,436.0L98.2,436.5M95.7,436.0L94.9,438.5M106.4,411.0L107.8,410.6M106.4,411.0L105.6,413.4M105.6,413.4L107.7,413.6M105.6,413.4L104.2,414.9M104.2,414.9L107.2,415.6M104.2,414.9L104.3,418.1M104.3,418.1L105.7,418.5M104.3,418.1L102.7,420.5M102.7,420.5L105.0,420.7M102.7,420.5L102.0,421.9M102.0,421.9L104.9,422.9M102.0,421.9L102.3,425.2M102.3,425.2L103.8,424.8M102.3,425.2L100.8,427.6M100.8,427.6L104.4,427.6M100.8,427.6L100.2,429.9M100.2,429.9L102.4,430.2M100.2,429.9L100.0,431.8M100.0,431.8L101.9,432.4M100.0,431.8L99.6,435.1M99.6,435.1L100.7,435.4M99.6,435.1L98.2,436.5M98.2,436.5L100.5,437.6M98.2,436.5L97.4,438.9M107.8,410.6L111.3,411.3M107.8,410.6L107.7,413.6M107.7,413.6L110.7,413.6M107.7,413.6L107.2,415.6M107.2,415.6L109.9,416.5M107.2,415.6L105.7,418.5M105.7,418.5L109.1,419.3M105.7,418.5L105.0,420.7M105.0,420.7L108.6,421.6M105.0,420.7L104.9,422.9M104.9,422.9L107.3,424.2M104.9,422.9L103.8,424.8M103.8,424.8L106.2,425.9M103.8,424.8L104.4,427.6M104.4,427.6L105.8,428.7M104.4,427.6L102.4,430.2M102.4,430.2L104.8,430.1M101.9,432.4L104.7,433.4M101.9,432.4L100.7,435.4M100.7,435.4L103.9,435.8M100.5,437.6L103.0,438.1M100.5,437.6L100.7,440.3M111.3,411.3L113.5,412.2M111.3,411.3L110.7,413.6M110.7,413.6L109.9,416.5M109.9,416.5L111.8,417.0M109.9,416.5L109.1,419.3M109.1,419.3L111.4,420.0M109.1,419.3L108.6,421.6M108.6,421.6L110.2,421.8M108.6,421.6L107.3,424.2M107.3,424.2L109.3,424.9M107.3,424.2L106.2,425.9M106.2,425.9L109.4,427.1M106.2,425.9L105.8,428.7M105.8,428.7L109.0,428.9M105.8,428.7L104.8,430.1M104.8,430.1L107.7,431.6M104.8,430.1L104.7,433.4M104.7,433.4L107.6,433.8M104.7,433.4L103.9,435.8M103.9,435.8L106.0,436.5M103.9,435.8L103.0,438.1M114.5,410.2L115.8,410.3M114.5,410.2L113.5,412.2M113.5,412.2L115.3,413.6M113.5,412.2L112.4,415.2M112.4,415.2L114.5,414.7M112.4,415.2L111.8,417.0M111.8,417.0L113.8,418.3M111.8,417.0L111.4,420.0M111.4,420.0L113.2,419.6M110.2,421.8L112.6,422.4M110.2,421.8L109.3,424.9M109.3,424.9L111.6,425.0M109.3,424.9L109.4,427.1M109.4,427.1L111.6,427.4M109.4,427.1L109.0,428.9M109.0,428.9L111.2,430.2M109.0,428.9L107.7,431.6M107.7,431.6L110.2,432.0M107.7,431.6L107.6,433.8M107.6,433.8L108.8,434.5M107.6,433.8L106.0,436.5M106.0,436.5L108.1,437.4M106.0,436.5L105.7,438.4M105.1,441.5L107.0,441.8M116.8,407.9L119.7,408.5M116.8,407.9L115.8,410.3M115.8,410.3L118.1,411.6M115.8,410.3L115.3,413.6M115.3,413.6L117.7,413.6M115.3,413.6L114.5,414.7M114.5,414.7L117.5,416.2M114.5,414.7L113.8,418.3M113.8,418.3L116.7,418.2M113.8,418.3L113.2,419.6M113.2,419.6L112.6,422.4M112.6,422.4L114.8,423.0M112.6,422.4L111.6,425.0M111.6,425.0L114.7,425.7M111.6,425.0L111.6,427.4M111.6,427.4L113.2,428.5M111.6,427.4L111.2,430.2M111.2,430.2L113.6,430.9M111.2,430.2L110.2,432.0M110.2,432.0L112.8,433.8M110.2,432.0L108.8,434.5M108.8,434.5L111.6,435.1M108.8,434.5L108.1,437.4M108.1,437.4L111.5,438.3M119.9,406.0L119.7,408.5M119.7,408.5L122.6,409.6M119.7,408.5L118.1,411.6M118.1,411.6L121.7,412.6M118.1,411.6L117.7,413.6M117.7,413.6L120.2,414.4M117.7,413.6L117.5,416.2M117.5,416.2L119.6,417.5M117.5,416.2L116.7,418.2M116.7,418.2L119.4,419.2M116.7,418.2L115.7,421.6M115.7,421.6L118.5,421.6M115.7,421.6L114.8,423.0M114.8,423.0L117.1,424.1M114.8,423.0L114.7,425.7M114.7,425.7L116.8,426.8M114.7,425.7L113.2,428.5M113.2,428.5L116.4,428.4M113.2,428.5L113.6,430.9M113.6,430.9L115.3,431.2M113.6,430.9L112.8,433.8M112.8,433.8L114.9,433.4M112.8,433.8L111.6,435.1M111.6,435.1L114.8,435.8M111.6,435.1L111.5,438.3M111.5,438.3L113.9,438.4M111.5,438.3L110.7,440.8M110.7,440.8L112.5,440.2M153.1,301.7L152.1,303.8M152.1,303.8L155.3,304.2M123.5,404.6L126.2,405.1M123.5,404.6L122.7,406.8M122.7,406.8L125.2,407.8M122.7,406.8L122.6,409.6M122.6,409.6L123.8,409.7M122.6,409.6L121.7,412.6M121.7,412.6L120.2,414.4M120.2,414.4L122.9,414.8M120.2,414.4L119.6,417.5M119.6,417.5L122.0,416.9M119.6,417.5L119.4,419.2M118.5,421.6L121.0,421.8M118.5,421.6L117.1,424.1M117.1,424.1L119.7,424.2M116.8,426.8L119.3,426.5M116.8,426.8L116.4,428.4M116.4,428.4L118.4,430.1M116.4,428.4L115.3,431.2M115.3,431.2L117.3,432.2M115.3,431.2L114.9,433.4M114.9,433.4L116.7,433.9M114.9,433.4L114.8,435.8M114.8,435.8L113.9,438.4M113.9,438.4L115.3,439.0M113.9,438.4L112.5,440.2M112.5,440.2L115.8,441.2M156.7,296.9L159.5,298.8M155.5,300.1L155.3,302.9M155.3,302.9L155.3,304.2M155.3,304.2L157.3,304.7M155.3,304.2L153.8,307.0M153.8,307.0L153.8,309.0M153.8,309.0L156.0,310.4M126.4,403.5L126.2,405.1M126.2,405.1L127.5,406.1M126.2,405.1L125.2,407.8M125.2,407.8L127.8,408.5M125.2,407.8L123.8,409.7M123.8,409.7L126.6,410.4M123.8,409.7L123.9,413.4M123.9,413.4L126.0,413.2M123.9,413.4L122.9,414.8M122.9,414.8L126.0,415.8M122.9,414.8L122.0,416.9M122.0,416.9L123.9,418.3M122.0,416.9L121.8,419.4M121.8,419.4L123.5,421.3M121.8,419.4L121.0,421.8M121.0,421.8L123.8,423.4M121.0,421.8L119.7,424.2M119.7,424.2L123.0,425.6M119.7,424.2L119.3,426.5M119.3,426.5L121.5,427.2M119.3,426.5L118.4,430.1M118.4,430.1L121.0,430.8M118.4,430.1L117.3,432.2M117.3,432.2L120.6,432.8M117.3,432.2L116.7,433.9M116.7,437.5L118.4,437.3M116.7,437.5L115.3,439.0M115.3,439.0L118.4,439.9M115.8,441.2L114.4,443.6M159.3,296.1L161.5,296.5M159.5,298.8L162.3,298.4M158.0,300.6L160.9,300.8M158.0,300.6L157.5,303.0M157.5,303.0L160.5,303.8M157.3,304.7L159.5,305.6M157.3,304.7L156.7,308.5M156.7,308.5L158.1,308.2M156.7,308.5L156.0,310.4M156.0,310.4L157.9,310.7M156.0,310.4L155.1,312.5M155.1,312.5L157.9,313.5M142.0,358.0L144.3,358.6M141.1,360.3L141.0,363.0M139.4,365.6L142.1,366.5M131.1,397.3L132.6,397.8M131.1,397.3L130.3,398.8M130.3,398.8L132.0,400.3M130.3,398.8L129.2,401.4M129.2,401.4L128.4,404.1M128.4,404.1L131.5,404.0M128.4,404.1L127.5,406.1M127.5,406.1L127.8,408.5M127.8,408.5L129.5,409.1M127.8,408.5L126.6,410.4M126.6,410.4L128.6,412.0M126.6,410.4L126.0,413.2M126.0,413.2L128.2,414.0M126.0,413.2L126.0,415.8M126.0,415.8L128.0,416.5M123.9,418.3L127.5,419.4M123.9,418.3L123.5,421.3M123.5,421.3L126.5,421.4M123.5,421.3L123.8,423.4M123.8,423.4L125.6,424.5M123.8,423.4L123.0,425.6M123.0,425.6L124.7,426.9M123.0,425.6L121.5,427.2M121.5,427.2L124.3,428.3M121.5,427.2L121.0,430.8M121.0,430.8L120.6,432.8M120.6,432.8L122.8,433.7M120.6,432.8L119.2,434.5M119.2,434.5L122.4,436.0M118.4,437.3L118.4,439.9M118.4,439.9L120.3,441.0M161.5,296.5L164.2,297.0M161.5,296.5L162.3,298.4M160.9,300.8L160.5,303.8M160.5,303.8L159.5,305.6M159.5,305.6L162.1,306.9M159.5,305.6L158.1,308.2M158.1,308.2L160.8,308.4M158.1,308.2L157.9,310.7M157.9,310.7L157.9,313.5M157.9,313.5L156.0,316.1M156.0,316.1L158.4,316.5M145.0,354.1L145.1,356.2M139.3,375.1L141.4,375.8M139.3,375.1L139.3,377.8M138.0,380.8L141.0,380.7M137.3,382.3L137.2,385.6M137.2,385.6L138.9,385.5M136.7,387.4L138.1,388.0M135.3,390.6L137.5,391.4M135.3,390.6L135.2,392.1M135.2,392.1L137.3,392.7M135.2,392.1L134.3,394.6M134.3,394.6L135.6,395.9M132.6,397.8L136.0,398.6M132.6,397.8L132.0,400.3M132.0,400.3L134.5,401.0M132.0,400.3L131.2,402.5M131.2,402.5L134.0,402.6M131.5,404.0L133.5,404.7M131.5,404.0L131.1,406.5M131.1,406.5L132.6,407.6M131.1,406.5L129.5,409.1M129.5,409.1L131.7,410.3M129.5,409.1L128.6,412.0M128.6,412.0L132.0,412.9M128.6,412.0L128.2,414.0M128.2,414.0L130.8,415.1M128.2,414.0L128.0,416.5M128.0,416.5L129.4,417.2M128.0,416.5L127.5,419.4M126.5,421.4L128.9,421.9M125.6,424.5L127.2,424.5M125.6,424.5L124.7,426.9M124.7,426.9L128.0,426.4M124.7,426.9L124.3,428.3M124.3,428.3L126.3,429.8M124.3,428.3L123.9,430.8M123.9,430.8L126.2,432.0M123.9,430.8L122.8,433.7M122.8,433.7L125.2,434.3M122.8,433.7L122.4,436.0M122.4,436.0L124.4,436.5M122.4,436.0L120.9,438.6M120.9,438.6L123.7,438.4M120.9,438.6L120.3,441.0M120.3,441.0L123.4,440.8M166.5,292.1L165.3,295.0M164.2,297.0L163.4,299.4M163.4,299.4L165.6,300.2M163.4,299.4L163.1,302.5M163.1,302.5L166.3,302.6M163.1,302.5L163.1,304.3M163.1,304.3L165.0,305.3M163.1,304.3L162.1,306.9M162.1,306.9L164.9,307.2M162.1,306.9L160.8,308.4M160.8,308.4L164.0,309.5M160.8,308.4L160.0,311.5M160.0,311.5L162.4,312.6M159.4,313.3L162.8,314.5M159.4,313.3L158.4,316.5M158.4,316.5L157.8,319.0M149.2,350.0L151.5,350.8M148.3,351.9L148.2,355.1M147.5,357.7L150.0,358.4M147.0,359.7L145.5,361.7M145.4,364.3L147.6,365.0M144.6,366.3L146.8,367.5M144.6,366.3L143.3,368.9M143.1,372.0L142.3,374.6M142.3,374.6L145.2,374.7M142.3,374.6L141.4,375.8M141.4,375.8L144.8,376.6M141.4,375.8L141.4,379.2M141.4,379.2L141.0,380.7M141.0,380.7L140.2,383.2M140.2,383.2L142.2,384.7M140.2,383.2L138.9,385.5M138.9,385.5L142.0,386.7M138.9,385.5L138.1,388.0M138.1,388.0L141.2,389.9M138.1,388.0L137.5,391.4M137.5,391.4L140.4,391.3M137.5,391.4L137.3,392.7M137.3,392.7L139.0,394.4M135.6,395.9L138.1,396.0M135.6,395.9L136.0,398.6M136.0,398.6L137.8,398.5M136.0,398.6L134.5,401.0M134.5,401.0L137.1,401.2M134.5,401.0L134.0,402.6M134.0,402.6L133.5,404.7M133.5,404.7L135.7,406.5M131.7,410.3L132.0,412.9M132.0,412.9L133.9,413.4M132.0,412.9L130.8,415.1M130.8,415.1L132.6,415.9M130.8,415.1L129.4,417.2M129.4,417.2L132.8,418.5M129.4,417.2L129.2,420.3M129.2,420.3L132.1,420.3M129.2,420.3L128.9,421.9M128.9,421.9L130.4,422.9M128.9,421.9L127.2,424.5M127.2,424.5L130.3,425.8M127.2,424.5L128.0,426.4M128.0,426.4L129.6,427.8M128.0,426.4L126.3,429.8M126.3,429.8L128.8,430.3M126.3,429.8L126.2,432.0M126.2,432.0L128.4,432.4M126.2,432.0L125.2,434.3M125.2,434.3L127.3,435.1M125.2,434.3L124.4,436.5M124.4,436.5L126.7,437.3M124.4,436.5L123.7,438.4M123.7,438.4L125.5,440.0M123.7,438.4L123.4,440.8M167.9,295.9L167.1,297.9M167.1,297.9L169.7,298.7M167.1,297.9L165.6,300.2M165.6,300.2L169.1,301.0M165.6,300.2L166.3,302.6M166.3,302.6L167.4,303.3M166.3,302.6L165.0,305.3M165.0,305.3L167.3,306.2M165.0,305.3L164.9,307.2M164.9,307.2L165.9,308.2M164.9,307.2L164.0,309.5M164.0,309.5L166.4,311.0M164.0,309.5L162.4,312.6M162.4,312.6L162.8,314.5M162.8,314.5L165.2,315.4M162.8,314.5L160.7,317.5M160.7,317.5L164.2,317.2M159.6,321.8L162.8,322.9M159.6,321.8L160.1,324.3M160.1,324.3L161.5,324.7M159.1,327.1L160.6,326.7M151.9,348.0L155.4,348.8M151.5,350.8L154.6,351.2M151.5,350.8L150.7,352.8M150.7,352.8L153.6,354.4M150.0,358.4L152.1,358.6M148.7,359.9L147.8,362.7M147.8,362.7L150.6,363.6M147.8,362.7L147.6,365.0M147.6,365.0L150.0,365.3M147.6,365.0L146.8,367.5M146.8,367.5L148.9,367.5M146.4,369.3L148.6,370.7M146.4,369.3L145.3,372.5M145.3,372.5L148.2,373.6M145.3,372.5L145.2,374.7M145.2,374.7L147.0,375.1M145.2,374.7L144.8,376.6M144.8,376.6L146.1,377.0M143.3,379.2L145.6,380.3M143.3,379.2L142.2,381.8M142.2,381.8L142.2,384.7M142.2,384.7L144.8,385.7M142.2,384.7L142.0,386.7M142.0,386.7L144.3,386.8M142.0,386.7L141.2,389.9M141.2,389.9L143.0,390.4M140.4,391.3L143.2,391.9M140.4,391.3L139.0,394.4M139.0,394.4L138.1,396.0M138.1,396.0L140.5,396.9M138.1,396.0L137.8,398.5M137.8,398.5L140.9,399.8M137.8,398.5L137.1,401.2M137.1,401.2L139.6,402.3M137.1,401.2L137.0,403.5M137.0,403.5L139.1,404.4M135.7,406.5L138.6,407.2M135.7,406.5L135.6,407.8M135.6,407.8L137.4,408.7M135.6,407.8L133.9,410.7M133.9,410.7L136.7,410.9M133.9,410.7L133.9,413.4M133.9,413.4L136.1,413.5M133.9,413.4L132.6,415.9M132.6,415.9L135.5,416.5M132.8,418.5L132.1,420.3M132.1,420.3L134.4,421.5M132.1,420.3L130.4,422.9M130.4,422.9L133.8,423.7M130.4,422.9L130.3,425.8M130.3,425.8L132.5,425.1M130.3,425.8L129.6,427.8M129.6,427.8L132.1,427.9M129.6,427.8L128.8,430.3M128.8,430.3L130.8,430.3M128.8,430.3L128.4,432.4M128.4,432.4L130.3,432.6M128.4,432.4L127.3,435.1M127.3,435.1L129.8,435.5M127.3,435.1L126.7,437.3M126.7,437.3L129.0,437.2M126.7,437.3L125.5,440.0M125.5,440.0L125.6,442.0M125.6,442.0L128.3,442.5M125.6,442.0L124.3,444.6M170.2,295.5L169.7,298.7M169.7,298.7L171.7,299.9M169.1,301.0L170.8,301.3M169.1,301.0L167.4,303.3M167.4,303.3L170.0,303.8M167.4,303.3L167.3,306.2M167.3,306.2L170.3,305.9M167.3,306.2L165.9,308.2M165.9,308.2L166.4,311.0M166.4,311.0L168.8,311.0M166.4,311.0L164.6,313.3M164.6,313.3L167.7,314.3M165.2,315.4L167.2,315.7M165.2,315.4L164.2,317.2M164.2,317.2L166.8,318.4M164.2,317.2L163.1,320.8M163.1,320.8L162.8,322.9M162.8,322.9L164.3,323.0M161.5,324.7L163.6,325.8M161.5,324.7L160.6,326.7M159.4,331.8L161.6,332.8M155.3,345.9L158.2,347.3M155.3,345.9L155.4,348.8M154.6,351.2L156.6,352.5M153.6,354.4L155.3,354.6M153.6,354.4L152.5,355.8M152.5,355.8L152.1,358.6M152.1,358.6L154.2,359.9M150.6,363.6L150.0,365.3M150.0,365.3L152.3,367.1M150.0,365.3L148.9,367.5M148.9,367.5L151.7,369.3M148.9,367.5L148.6,370.7M148.6,370.7L150.4,371.2M148.6,370.7L148.2,373.6M148.2,373.6L150.3,374.0M148.2,373.6L147.0,375.1M147.0,375.1L149.7,376.2M147.0,375.1L146.1,377.0M146.1,377.0L149.6,378.9M146.1,377.0L145.6,380.3M145.6,380.3L148.4,380.2M145.0,383.1L147.4,382.9M145.0,383.1L144.8,385.7M144.8,385.7L146.8,385.5M144.8,385.7L144.3,386.8M144.3,386.8L145.8,387.9M144.3,386.8L143.0,390.4M143.0,390.4L143.2,391.9M143.2,391.9L145.0,393.4M143.2,391.9L141.8,394.8M141.8,394.8L140.5,396.9M140.5,396.9L143.9,398.4M140.5,396.9L140.9,399.8M140.9,399.8L143.1,400.0M140.9,399.8L139.6,402.3M139.6,402.3L142.1,402.2M139.6,402.3L139.1,404.4M139.1,404.4L141.6,404.9M139.1,404.4L138.6,407.2M138.6,407.2L141.4,407.1M138.6,407.2L137.4,408.7M137.4,408.7L139.9,409.6M137.4,408.7L136.7,410.9M136.7,410.9L139.8,412.7M136.7,410.9L136.1,413.5M136.1,413.5L138.6,415.1M136.1,413.5L135.5,416.5M135.5,416.5L137.7,416.9M135.5,416.5L134.2,418.6M134.2,418.6L137.6,419.2M134.2,418.6L134.4,421.5M134.4,421.5L136.6,422.2M134.4,421.5L133.8,423.7M133.8,423.7L136.2,424.4M132.5,425.1L135.1,426.6M132.1,427.9L134.4,429.3M132.1,427.9L130.8,430.3M130.8,430.3L133.5,431.8M130.8,430.3L130.3,432.6M130.3,432.6L133.2,433.7M130.3,432.6L129.8,435.5M129.8,435.5L132.2,436.2M129.8,435.5L129.0,437.2M129.0,437.2L131.7,439.1M128.5,439.5L131.1,441.0M128.3,442.5L130.4,443.2M172.9,294.9L172.0,297.2M171.7,299.9L173.7,299.5M171.7,299.9L170.8,301.3M170.8,301.3L173.5,302.9M170.8,301.3L170.0,303.8M170.0,303.8L172.5,304.8M170.0,303.8L170.3,305.9M170.3,305.9L171.8,306.7M168.8,308.1L171.6,310.3M168.8,308.1L168.8,311.0M168.8,311.0L170.4,312.0M168.8,311.0L167.7,314.3M167.7,314.3L169.9,313.9M167.7,314.3L167.2,315.7M167.2,315.7L166.8,318.4M166.8,318.4L164.9,320.7M164.9,320.7L167.9,320.9M164.9,320.7L164.3,323.0M164.3,323.0L163.6,325.8M163.6,325.8L166.1,326.5M163.6,325.8L163.0,328.0M163.0,328.0L165.7,328.6M163.0,328.0L162.4,330.6M162.4,330.6L165.4,330.9M162.4,330.6L161.6,332.8M160.9,335.5L164.1,336.4M160.1,337.8L159.6,340.3M159.6,340.3L159.6,343.1M158.5,344.7L160.9,345.1M158.2,347.3L157.8,349.8M157.8,349.8L159.3,350.3M156.6,352.5L158.6,352.4M156.6,352.5L155.3,354.6M154.7,357.4L157.9,358.1M154.7,357.4L154.2,359.9M154.2,359.9L157.0,360.3M154.2,359.9L154.2,361.1M154.2,361.1L156.3,362.9M154.2,361.1L152.6,363.7M152.6,363.7L155.0,365.1M152.6,363.7L152.3,367.1M152.3,367.1L155.2,367.6M152.3,367.1L151.7,369.3M151.7,369.3L154.7,369.0M151.7,369.3L150.4,371.2M150.4,371.2L153.8,371.5M150.4,371.2L150.3,374.0M150.3,374.0L152.6,374.7M150.3,374.0L149.7,376.2M149.7,376.2L152.6,376.6M149.7,376.2L149.6,378.9M149.6,378.9L152.0,379.4M148.4,380.2L150.7,382.1M148.4,380.2L147.4,382.9M147.4,382.9L149.7,384.2M147.4,382.9L146.8,385.5M146.8,385.5L149.1,385.8M145.8,387.9L148.7,388.6M145.8,387.9L145.5,390.8M145.5,390.8L148.2,390.9M145.5,390.8L145.0,393.4M145.0,393.4L143.6,395.0M143.6,395.0L147.4,395.6M143.6,395.0L143.9,398.4M143.9,398.4L146.4,398.2M143.9,398.4L143.1,400.0M143.1,400.0L144.7,400.1M143.1,400.0L142.1,402.2M142.1,402.2L141.6,404.9M141.6,404.9L143.9,406.1M141.6,404.9L141.4,407.1M141.4,407.1L142.6,407.3M141.4,407.1L139.9,409.6M139.9,409.6L142.7,409.9M139.9,409.6L139.8,412.7M139.8,412.7L138.6,415.1M138.6,415.1L141.0,414.5M138.6,415.1L137.7,416.9M137.7,416.9L140.9,417.8M137.6,419.2L139.1,419.5M136.6,422.2L139.4,423.2M136.6,422.2L136.2,424.4M136.2,424.4L138.1,425.3M136.2,424.4L135.1,426.6M135.1,426.6L137.9,427.0M135.1,426.6L134.4,429.3M134.4,429.3L137.5,429.5M134.4,429.3L133.5,431.8M133.5,431.8L135.9,432.5M133.2,433.7L135.4,434.1M133.2,433.7L132.2,436.2M132.2,436.2L134.5,437.0M132.2,436.2L131.7,439.1M131.7,439.1L134.5,438.9M131.7,439.1L131.1,441.0M131.1,441.0L133.4,441.9M131.1,441.0L130.4,443.2M175.2,298.1L173.7,299.5M173.7,299.5L173.5,302.9M173.5,302.9L176.2,303.4M173.5,302.9L172.5,304.8M172.5,304.8L174.6,305.8M172.5,304.8L171.8,306.7M171.8,306.7L174.1,308.4M171.8,306.7L171.6,310.3M171.6,310.3L174.1,310.3M171.6,310.3L170.4,312.0M170.4,312.0L172.6,312.7M170.4,312.0L169.9,313.9M169.9,313.9L172.5,314.9M169.9,313.9L169.9,317.5M169.9,317.5L172.2,318.1M169.9,317.5L168.5,319.7M168.5,319.7L170.3,319.9M168.5,319.7L167.9,320.9M167.9,320.9L170.5,321.8M167.9,320.9L167.0,324.2M167.0,324.2L170.3,324.7M167.0,324.2L166.1,326.5M166.1,326.5L168.6,326.9M166.1,326.5L165.7,328.6M165.7,328.6L165.4,330.9M165.4,330.9L167.9,332.0M165.4,330.9L164.9,334.2M164.9,334.2L164.1,336.4M164.1,336.4L163.0,337.8M163.0,337.8L162.7,341.5M161.9,342.7L164.4,343.7M161.9,342.7L160.9,345.1M160.9,345.1L163.3,346.5M158.6,352.4L158.1,354.8M158.1,354.8L161.1,355.9M158.1,354.8L157.9,358.1M157.9,358.1L160.6,358.7M157.9,358.1L157.0,360.3M157.0,360.3L159.4,361.3M157.0,360.3L156.3,362.9M156.3,362.9L158.6,362.6M156.3,362.9L155.0,365.1M155.0,365.1L155.2,367.6M155.2,367.6L157.7,367.8M155.2,367.6L154.7,369.0M154.7,369.0L157.3,370.0M154.7,369.0L153.8,371.5M153.8,371.5L155.7,372.0M153.8,371.5L152.6,374.7M152.6,374.7L154.6,374.9M152.6,374.7L152.6,376.6M152.6,376.6L154.5,377.8M152.6,376.6L152.0,379.4M152.0,379.4L154.1,379.3M152.0,379.4L150.7,382.1M150.7,382.1L152.5,382.1M150.7,382.1L149.7,384.2M149.7,384.2L152.8,384.2M149.1,385.8L152.4,387.1M149.1,385.8L148.7,388.6M148.7,388.6L150.4,389.9M148.7,388.6L148.2,390.9M148.2,390.9L150.5,391.8M148.2,390.9L147.5,394.2M147.5,394.2L149.7,394.0M147.5,394.2L147.4,395.6M147.4,395.6L148.8,397.2M147.4,395.6L146.4,398.2M146.4,398.2L148.6,399.5M146.4,398.2L144.7,400.1M144.7,400.1L148.3,401.3M144.7,400.1L144.1,403.0M144.1,403.0L147.1,404.5M144.1,403.0L143.9,406.1M143.9,406.1L146.0,406.8M143.9,406.1L142.6,407.3M142.6,407.3L144.9,408.5M142.6,407.3L142.7,409.9M142.7,409.9L145.5,410.9M142.7,409.9L141.2,412.5M141.2,412.5L144.6,413.1M141.2,412.5L141.0,414.5M141.0,414.5L143.6,416.6M140.9,417.8L143.1,418.8M140.9,417.8L139.1,419.5M139.1,419.5L141.8,420.9M139.1,419.5L139.4,423.2M139.4,423.2L140.9,423.3M139.4,423.2L138.1,425.3M138.1,425.3L140.6,425.5M138.1,425.3L137.9,427.0M137.9,427.0L139.3,428.1M137.9,427.0L137.5,429.5M137.5,429.5L139.2,430.4M137.5,429.5L135.9,432.5M135.9,432.5L138.2,432.7M135.9,432.5L135.4,434.1M135.4,434.1L138.6,434.9M135.4,434.1L134.5,437.0M134.5,437.0L136.5,438.0M134.5,437.0L134.5,438.9M134.5,438.9L136.3,439.5M134.5,438.9L133.4,441.9M133.4,441.9L133.1,444.7M176.4,298.6L177.0,300.6M176.2,303.4L174.6,305.8M174.6,305.8L177.5,305.5M174.6,305.8L174.1,308.4M174.1,308.4L176.8,308.3M174.1,308.4L174.1,310.3M174.1,310.3L175.8,311.5M172.6,312.7L175.1,312.7M172.6,312.7L172.5,314.9M172.5,314.9L174.6,315.4M172.5,314.9L172.2,318.1M172.2,318.1L173.4,318.2M172.2,318.1L170.3,319.9M170.3,319.9L173.5,320.4M170.3,319.9L170.5,321.8M170.5,321.8L172.4,323.0M170.3,324.7L172.2,325.2M168.6,326.9L171.2,327.1M168.8,329.4L170.1,330.6M168.8,329.4L167.9,332.0M167.9,332.0L166.7,334.6M166.7,334.6L168.9,335.2M165.8,337.1L168.4,337.1M165.8,337.1L165.1,339.3M165.1,339.3L168.6,339.6M165.5,341.3L164.4,343.7M164.4,343.7L166.6,344.8M163.3,346.5L165.3,347.2M163.3,346.5L162.4,348.2M162.4,348.2L162.7,350.7M162.7,350.7L164.0,351.3M161.9,353.0L163.6,353.7M161.9,353.0L161.1,355.9M161.1,355.9L162.8,356.1M161.1,355.9L160.6,358.7M160.6,358.7L162.6,358.6M160.6,358.7L159.4,361.3M159.4,361.3L161.7,360.7M159.4,361.3L158.6,362.6M158.6,362.6L161.5,364.5M158.6,362.6L157.4,364.9M157.4,364.9L160.5,365.6M157.7,367.8L159.7,368.2M157.7,367.8L157.3,370.0M157.3,370.0L159.0,371.1M157.3,370.0L155.7,372.0M155.7,372.0L158.2,373.5M155.7,372.0L154.6,374.9M154.6,374.9L158.0,375.9M154.6,374.9L154.5,377.8M154.5,377.8L156.2,378.6M154.5,377.8L154.1,379.3M154.1,379.3L155.9,380.5M152.5,382.1L155.3,383.2M152.5,382.1L152.8,384.2M152.8,384.2L154.7,384.6M152.8,384.2L152.4,387.1M152.4,387.1L154.1,387.5M152.4,387.1L150.4,389.9M150.4,389.9L153.2,390.0M150.4,389.9L150.5,391.8M150.5,391.8L152.8,392.0M150.5,391.8L149.7,394.0M149.7,394.0L152.2,395.5M149.7,394.0L148.8,397.2M148.8,397.2L150.8,397.7M148.8,397.2L148.6,399.5M148.6,399.5L149.9,400.3M148.6,399.5L148.3,401.3M148.3,401.3L150.1,401.9M148.3,401.3L147.1,404.5M147.1,404.5L149.2,404.5M147.1,404.5L146.0,406.8M146.0,406.8L148.3,406.5M146.0,406.8L144.9,408.5M144.9,408.5L148.0,409.8M144.9,408.5L145.5,410.9M143.6,416.6L145.2,416.8M143.1,418.8L145.4,419.8M143.1,418.8L141.8,420.9M141.8,420.9L144.6,421.7M141.8,420.9L140.9,423.3M140.9,423.3L143.7,423.9M140.9,423.3L140.6,425.5M140.6,425.5L139.3,428.1M139.3,428.1L143.0,428.6M139.3,428.1L139.2,430.4M139.2,430.4L141.4,430.6M138.2,432.7L141.5,432.9M138.6,434.9L139.5,436.0M138.6,434.9L136.5,438.0M136.5,438.0L139.7,437.6M136.3,439.5L139.0,440.7M136.0,441.8L137.6,443.1M136.0,441.8L135.3,444.8M178.7,300.6L177.8,303.3M177.8,303.3L177.5,305.5M177.5,305.5L179.7,306.4M177.5,305.5L176.8,308.3M176.8,308.3L175.8,311.5M175.8,311.5L178.1,311.2M175.8,311.5L175.1,312.7M175.1,312.7L178.5,314.0M175.1,312.7L174.6,315.4M174.6,315.4L173.4,318.2M173.4,318.2L176.6,319.2M173.4,318.2L173.5,320.4M173.5,320.4L175.4,321.0M173.5,320.4L172.4,323.0M172.4,323.0L175.4,324.1M172.4,323.0L172.2,325.2M172.2,325.2L175.0,325.5M172.2,325.2L171.2,327.1M171.2,327.1L170.1,330.6M170.1,330.6L173.8,330.3M170.1,330.6L169.6,332.6M169.6,332.6L173.0,333.6M169.6,332.6L168.9,335.2M168.4,337.1L171.6,337.7M168.6,339.6L167.2,342.3M164.7,349.9L167.9,350.8M164.0,351.3L163.6,353.7M163.6,353.7L162.8,356.1M162.8,356.1L165.8,357.7M162.8,356.1L162.6,358.6M162.6,358.6L164.7,359.8M162.6,358.6L161.7,360.7M161.7,360.7L163.8,361.7M161.7,360.7L161.5,364.5M161.5,364.5L160.5,365.6M160.5,365.6L162.8,367.3M160.5,365.6L159.7,368.2M159.7,368.2L159.0,371.1M159.0,371.1L161.3,371.9M158.2,373.5L160.7,373.8M158.2,373.5L158.0,375.9M158.0,375.9L159.7,376.8M156.2,378.6L159.9,379.0M156.2,378.6L155.9,380.5M155.9,380.5L159.2,381.6M155.9,380.5L155.3,383.2M155.3,383.2L158.6,383.3M155.3,383.2L154.7,384.6M154.7,384.6L156.6,386.0M154.7,384.6L154.1,387.5M154.1,387.5L157.1,388.7M153.2,390.0L155.8,390.3M153.2,390.0L152.8,392.0M152.8,392.0L155.2,393.0M152.8,392.0L152.2,395.5M152.2,395.5L154.6,395.4M152.2,395.5L150.8,397.7M150.8,397.7L153.6,397.5M150.8,397.7L149.9,400.3M149.9,400.3L153.4,400.5M149.9,400.3L150.1,401.9M150.1,401.9L152.5,402.2M150.1,401.9L149.2,404.5M149.2,404.5L151.4,405.0M148.3,406.5L148.0,409.8M148.0,409.8L150.6,409.9M148.0,409.8L146.8,412.2M146.8,412.2L149.7,412.4M146.8,412.2L146.6,413.7M146.6,413.7L148.7,415.2M146.6,413.7L145.2,416.8M145.2,416.8L147.9,416.8M145.2,416.8L145.4,419.8M145.4,419.8L147.9,419.1M145.4,419.8L144.6,421.7M144.6,421.7L147.4,422.6M144.6,421.7L143.7,423.9M143.7,423.9L146.2,424.9M143.7,423.9L143.6,426.0M143.6,426.0L146.0,427.1M143.6,426.0L143.0,428.6M143.0,428.6L144.9,428.7M143.0,428.6L141.4,430.6M141.4,430.6L143.7,430.9M141.4,430.6L141.5,432.9M141.5,432.9L143.6,434.0M141.5,432.9L139.5,436.0M139.5,436.0L142.8,436.7M139.5,436.0L139.7,437.6M139.7,437.6L142.3,438.9M139.0,440.7L140.8,440.7M179.7,306.4L179.0,308.8M179.0,308.8L182.2,310.0M178.1,311.2L180.6,312.2M178.1,311.2L178.5,314.0M178.5,314.0L180.1,314.4M178.5,314.0L177.1,315.8M177.1,315.8L179.2,316.9M177.1,315.8L176.6,319.2M176.6,319.2L179.1,319.4M176.6,319.2L175.4,321.0M175.4,321.0L177.8,322.3M175.4,321.0L175.4,324.1M175.4,324.1L177.3,323.9M175.4,324.1L175.0,325.5M175.0,325.5L176.7,326.2M175.0,325.5L173.7,328.5M173.7,328.5L175.6,328.9M173.7,328.5L173.8,330.3M173.8,330.3L175.0,331.9M173.8,330.3L173.0,333.6M173.0,333.6L174.4,333.3M173.0,333.6L171.8,335.8M171.8,335.8L173.8,336.7M171.6,337.7L170.6,341.0M170.6,341.0L170.1,342.4M170.1,342.4L172.7,343.7M167.9,350.8L167.4,352.7M167.4,352.7L169.7,353.3M167.4,352.7L166.9,354.6M166.9,354.6L168.2,354.7M165.8,357.7L167.6,358.2M165.8,357.7L164.7,359.8M164.7,359.8L167.7,360.3M164.7,359.8L163.8,361.7M163.8,361.7L166.6,362.8M163.8,361.7L163.5,364.3M163.5,364.3L165.4,365.1M163.5,364.3L162.8,367.3M162.8,367.3L165.1,367.4M162.8,367.3L162.1,369.8M162.1,369.8L164.7,370.0M162.1,369.8L161.3,371.9M161.3,371.9L163.9,373.0M161.3,371.9L160.7,373.8M160.7,373.8L159.7,376.8M159.7,376.8L162.3,376.7M159.7,376.8L159.9,379.0M159.9,379.0L162.2,379.5M159.9,379.0L159.2,381.6M159.2,381.6L158.6,383.3M158.6,383.3L160.5,384.3M158.6,383.3L156.6,386.0M156.6,386.0L159.7,387.0M157.1,388.7L158.7,389.4M157.1,388.7L155.8,390.3M155.8,390.3L158.6,391.3M155.8,390.3L155.2,393.0M155.2,393.0L157.3,394.1M155.2,393.0L154.6,395.4M154.6,395.4L157.0,396.6M154.6,395.4L153.6,397.5M153.6,397.5L155.9,398.6M153.6,397.5L153.4,400.5M153.4,400.5L155.3,400.5M153.4,400.5L152.5,402.2M152.5,402.2L154.1,403.7M152.5,402.2L151.4,405.0M151.4,405.0L151.4,408.2M151.4,408.2L153.3,408.5M151.4,408.2L150.6,409.9M150.6,409.9L152.4,411.2M150.6,409.9L149.7,412.4M149.7,412.4L152.6,413.7M149.7,412.4L148.7,415.2M148.7,415.2L151.8,416.1M148.7,415.2L147.9,416.8M147.9,416.8L151.2,417.7M147.9,416.8L147.9,419.1M147.9,419.1L147.4,422.6M147.4,422.6L148.7,422.7M147.4,422.6L146.2,424.9M146.2,424.9L146.0,427.1M146.0,427.1L147.3,427.0M144.9,428.7L147.1,430.1M144.9,428.7L143.7,430.9M143.7,430.9L146.7,432.6M143.7,430.9L143.6,434.0M143.6,434.0L145.7,434.8M143.6,434.0L142.8,436.7M142.8,436.7L145.2,437.2M142.8,436.7L142.3,438.9M142.3,438.9L144.2,439.8M142.3,438.9L140.8,440.7M140.8,440.7L143.6,442.4M183.0,304.6L182.2,307.1M182.2,307.1L182.2,310.0M182.2,310.0L184.1,310.8M182.2,310.0L180.6,312.2M180.6,312.2L182.7,313.3M180.6,312.2L180.1,314.4M180.1,314.4L182.2,315.7M180.1,314.4L179.2,316.9M179.2,316.9L182.1,317.5M179.2,316.9L179.1,319.4M179.1,319.4L182.0,320.1M179.1,319.4L177.8,322.3M177.8,322.3L180.5,321.8M177.8,322.3L177.3,323.9M177.3,323.9L180.6,324.8M177.3,323.9L176.7,326.2M176.7,326.2L179.2,327.8M176.7,326.2L175.6,328.9M175.6,328.9L178.9,329.6M175.6,328.9L175.0,331.9M175.0,331.9L177.7,332.1M175.0,331.9L174.4,333.3M174.4,333.3L176.5,334.6M173.8,336.7L173.5,339.0M173.5,339.0L175.1,339.9M173.5,339.0L172.7,341.6M172.7,341.6L172.7,343.7M172.7,343.7L171.1,346.2M171.1,346.2L174.3,346.4M171.1,346.2L170.3,347.5M170.3,347.5L172.7,348.6M170.3,347.5L169.4,351.2M169.4,351.2L172.0,350.9M169.7,353.3L168.2,354.7M167.6,358.2L170.3,359.0M167.6,358.2L167.7,360.3M167.7,360.3L169.3,361.3M167.7,360.3L166.6,362.8M166.6,362.8L168.7,363.9M166.6,362.8L165.4,365.1M165.4,365.1L165.1,367.4M165.1,367.4L168.0,367.9M165.1,367.4L164.7,370.0M164.7,370.0L167.5,370.6M163.9,373.0L166.6,373.1M163.9,373.0L162.4,375.0M162.4,375.0L165.2,375.2M162.3,376.7L162.2,379.5M162.2,379.5L163.8,380.2M162.2,379.5L160.9,381.2M160.9,381.2L163.7,382.8M160.9,381.2L160.5,384.3M160.5,384.3L162.8,385.8M160.5,384.3L159.7,387.0M159.7,387.0L161.6,387.5M159.7,387.0L158.7,389.4M158.7,389.4L161.6,390.3M158.7,389.4L158.6,391.3M158.6,391.3L160.2,391.4M158.6,391.3L157.3,394.1M157.3,394.1L160.0,395.0M157.3,394.1L157.0,396.6M157.0,396.6L159.8,396.5M157.0,396.6L155.9,398.6M155.9,398.6L158.9,400.1M155.9,398.6L155.3,400.5M155.3,400.5L158.4,401.6M155.3,400.5L154.1,403.7M154.1,403.7L157.0,404.7M154.1,403.7L153.4,406.2M153.4,406.2L156.1,406.0M153.4,406.2L153.3,408.5M153.3,408.5L156.1,408.8M153.3,408.5L152.4,411.2M152.4,411.2L155.5,411.3M152.4,411.2L152.6,413.7M152.6,413.7L154.8,414.1M152.6,413.7L151.8,416.1M151.8,416.1L154.3,416.7M151.8,416.1L151.2,417.7M151.2,417.7L153.5,419.3M151.2,417.7L149.8,420.4M149.8,420.4L151.9,421.5M149.8,420.4L148.7,422.7M148.7,422.7L152.1,423.5M148.7,422.7L148.6,424.6M148.6,424.6L151.0,426.1M148.6,424.6L147.3,427.0M147.3,427.0L150.7,428.8M147.1,430.1L149.1,430.2M146.7,432.6L148.8,433.2M146.7,432.6L145.7,434.8M145.7,434.8L148.2,435.5M145.7,434.8L145.2,437.2M145.2,437.2L146.9,438.0M145.2,437.2L144.2,439.8M144.2,439.8L143.6,442.4M143.6,442.4L146.0,442.4M185.1,305.3L187.3,306.5M185.1,305.3L184.8,307.7M184.8,307.7L186.8,308.6M184.8,307.7L184.1,310.8M184.1,310.8L182.7,313.3M182.7,313.3L185.5,313.8M182.7,313.3L182.2,315.7M182.2,315.7L182.1,317.5M182.1,317.5L184.7,319.2M182.0,320.1L183.9,320.5M182.0,320.1L180.5,321.8M180.5,321.8L183.0,323.9M180.5,321.8L180.6,324.8M180.6,324.8L181.9,325.4M180.6,324.8L179.2,327.8M179.2,327.8L181.6,327.4M179.2,327.8L178.9,329.6M178.9,329.6L180.2,330.7M178.9,329.6L177.7,332.1M177.7,332.1L180.9,333.3M177.7,332.1L176.5,334.6M176.5,334.6L179.5,334.6M176.8,337.5L178.8,337.7M175.1,339.9L178.8,340.5M175.0,342.1L177.1,342.5M170.5,355.7L172.6,357.2M170.3,359.0L169.3,361.3M169.3,361.3L168.7,363.9M168.7,363.9L170.6,364.5M168.7,363.9L168.0,366.2M168.0,366.2L170.3,366.8M168.0,366.2L168.0,367.9M168.0,367.9L170.0,368.7M168.0,367.9L167.5,370.6M167.5,370.6L166.6,373.1M166.6,373.1L169.0,373.4M166.6,373.1L165.2,375.2M165.2,375.2L168.3,376.1M165.2,375.2L165.2,377.6M165.2,377.6L166.6,378.5M163.8,380.2L166.1,380.6M163.8,380.2L163.7,382.8M163.7,382.8L162.8,385.8M162.8,385.8L165.0,386.2M162.8,385.8L161.6,387.5M161.6,387.5L165.1,388.0M161.6,387.5L161.6,390.3M161.6,390.3L163.3,389.8M161.6,390.3L160.2,391.4M160.2,391.4L162.7,392.2M160.2,391.4L160.0,395.0M160.0,395.0L162.9,395.9M160.0,395.0L159.8,396.5M159.8,396.5L161.5,397.2M159.8,396.5L158.9,400.1M158.9,400.1L160.2,400.2M158.9,400.1L158.4,401.6M158.4,401.6L160.0,402.2M158.4,401.6L157.0,404.7M157.0,404.7L158.9,405.3M157.0,404.7L156.1,406.0M156.1,406.0L159.5,407.7M156.1,406.0L156.1,408.8M156.1,408.8L158.1,410.4M156.1,408.8L155.5,411.3M155.5,411.3L157.4,411.7M155.5,411.3L154.8,414.1M154.8,414.1L154.3,416.7M154.3,416.7L156.8,417.0M154.3,416.7L153.5,419.3M153.5,419.3L154.9,419.3M153.5,419.3L151.9,421.5M151.9,421.5L155.2,421.8M151.9,421.5L152.1,423.5M152.1,423.5L151.0,426.1M151.0,426.1L152.9,426.5M150.7,428.8L152.3,428.2M150.7,428.8L149.1,430.2M149.1,430.2L152.6,431.1M149.1,430.2L148.8,433.2M148.8,433.2L148.2,435.5M148.2,435.5L150.1,436.2M148.2,435.5L146.9,438.0M146.9,438.0L150.5,438.2M146.9,438.0L147.4,439.9M147.4,439.9L149.0,441.2M147.4,439.9L146.0,442.4M146.0,442.4L145.6,445.7M187.3,306.5L186.8,308.6M186.8,308.6L189.7,309.4M187.2,311.2L189.3,312.5M187.2,311.2L185.5,313.8M185.5,313.8L188.0,314.8M185.5,313.8L185.6,316.0M185.6,316.0L187.9,316.8M185.6,316.0L184.7,319.2M184.7,319.2L186.3,319.6M184.7,319.2L183.9,320.5M183.9,320.5L186.4,321.1M183.9,320.5L183.0,323.9M183.0,323.9L185.3,324.4M183.0,323.9L181.9,325.4M181.9,325.4L184.6,325.7M181.9,325.4L181.6,327.4M181.6,327.4L184.1,328.1M181.6,327.4L180.2,330.7M180.2,330.7L183.6,331.1M180.2,330.7L180.9,333.3M180.9,333.3L182.7,333.3M180.9,333.3L179.5,334.6M179.5,334.6L182.3,336.5M178.8,337.7L181.2,337.9M178.8,340.5L181.0,340.6M178.8,340.5L177.1,342.5M177.1,342.5L179.2,343.3M177.1,342.5L176.9,345.3M176.9,345.3L179.4,345.4M176.5,347.8L179.0,348.6M176.5,347.8L175.0,349.1M174.1,352.3L177.5,352.3M172.6,357.2L173.1,359.4M173.1,359.4L174.7,359.8M172.5,361.5L174.7,362.5M172.5,361.5L170.6,364.5M170.6,364.5L173.6,364.9M170.6,364.5L170.3,366.8M170.3,366.8L172.3,367.4M170.3,366.8L170.0,368.7M170.0,368.7L172.8,369.7M170.0,368.7L169.6,371.8M169.6,371.8L169.0,373.4M169.0,373.4L168.3,376.1M168.3,376.1L170.2,376.5M168.3,376.1L166.6,378.5M166.6,378.5L170.2,379.0M166.6,378.5L166.1,380.6M166.1,380.6L166.1,382.8M166.1,382.8L167.9,383.4M166.1,382.8L165.0,386.2M165.0,386.2L167.4,385.8M165.0,386.2L165.1,388.0M165.1,388.0L166.9,389.2M165.1,388.0L163.3,389.8M163.3,389.8L162.7,392.2M162.7,392.2L165.2,393.7M162.9,395.9L164.6,395.9M162.9,395.9L161.5,397.2M161.5,397.2L163.7,398.9M161.5,397.2L160.2,400.2M160.2,400.2L164.1,400.5M160.2,400.2L160.0,402.2M160.0,402.2L162.5,403.7M160.0,402.2L158.9,405.3M158.9,405.3L162.0,405.7M158.9,405.3L159.5,407.7M159.5,407.7L161.3,408.2M159.5,407.7L158.1,410.4M158.1,410.4L161.0,410.9M158.1,410.4L157.4,411.7M157.4,411.7L160.5,412.4M157.4,411.7L157.2,415.3M157.2,415.3L159.6,415.6M157.2,415.3L156.8,417.0M156.8,417.0L158.8,417.7M156.8,417.0L154.9,419.3M154.9,419.3L157.2,420.6M154.9,419.3L155.2,421.8M155.2,421.8L153.8,424.6M153.8,424.6L155.8,425.0M153.8,424.6L152.9,426.5M152.9,426.5L156.2,427.5M152.9,426.5L152.3,428.2M152.3,428.2L154.7,430.2M152.6,431.1L154.4,431.7M152.6,431.1L150.7,433.9M150.7,433.9L154.0,435.2M150.7,433.9L150.1,436.2M150.1,436.2L153.8,436.6M150.1,436.2L150.5,438.2M150.5,438.2L152.7,438.7M150.5,438.2L149.0,441.2M149.0,441.2L151.6,442.1M189.7,309.4L189.3,312.5M189.3,312.5L191.9,312.4M189.3,312.5L188.0,314.8M188.0,314.8L187.9,316.8M187.9,316.8L190.2,317.6M187.9,316.8L186.3,319.6M186.4,321.1L188.2,322.4M186.4,321.1L185.3,324.4M185.3,324.4L184.6,325.7M184.6,325.7L187.7,327.6M184.6,325.7L184.1,328.1M184.1,328.1L186.0,329.7M184.1,328.1L183.6,331.1M183.6,331.1L185.2,332.2M183.6,331.1L182.7,333.3M182.7,333.3L185.2,333.9M182.3,336.5L181.2,337.9M181.2,337.9L181.0,340.6M181.0,340.6L182.8,341.3M181.0,340.6L179.2,343.3M179.0,348.6L180.8,348.3M175.8,357.7L178.8,357.8M174.7,359.8L177.2,361.1M174.7,359.8L174.7,362.5M173.6,364.9L176.8,365.1M173.6,364.9L172.3,367.4M172.3,367.4L175.7,368.1M172.3,367.4L172.8,369.7M172.8,369.7L175.1,370.6M172.8,369.7L172.1,371.8M172.1,371.8L174.3,372.7M172.1,371.8L170.7,374.4M170.7,374.4L173.2,374.8M170.7,374.4L170.2,376.5M170.2,376.5L172.2,377.3M170.2,376.5L170.2,379.0M170.2,379.0L168.6,381.7M167.9,383.4L170.0,384.7M167.9,383.4L167.4,385.8M167.4,385.8L169.4,386.4M167.4,385.8L166.9,389.2M166.9,389.2L169.4,389.7M166.9,389.2L165.9,390.8M165.9,390.8L168.8,391.8M165.9,390.8L165.2,393.7M165.2,393.7L167.7,393.7M165.2,393.7L164.6,395.9M164.6,395.9L167.2,396.8M164.6,395.9L163.7,398.9M163.7,398.9L165.8,399.1M163.7,398.9L164.1,400.5M164.1,400.5L165.9,401.7M164.1,400.5L162.5,403.7M162.5,403.7L162.0,405.7M162.0,405.7L164.8,406.9M162.0,405.7L161.3,408.2M161.3,408.2L161.0,410.9M161.0,410.9L163.2,411.1M161.0,410.9L160.5,412.4M160.5,412.4L162.5,413.8M160.5,412.4L159.6,415.6M159.6,415.6L161.7,415.4M159.6,415.6L158.8,417.7M158.8,417.7L161.4,418.7M158.8,417.7L157.2,420.6M157.2,420.6L157.5,421.9M157.5,421.9L159.3,422.5M157.5,421.9L155.8,425.0M155.8,425.0L159.4,425.5M155.8,425.0L156.2,427.5M156.2,427.5L158.5,428.3M156.2,427.5L154.7,430.2M154.7,430.2L158.3,429.9M154.7,430.2L154.4,431.7M154.4,431.7L154.0,435.2M154.0,435.2L156.4,435.6M154.0,435.2L153.8,436.6M153.8,436.6L155.0,437.1M153.8,436.6L152.7,438.7M152.7,438.7L154.6,439.3M152.7,438.7L151.6,442.1M151.6,442.1L151.2,443.7M191.9,312.4L193.7,312.8M190.3,314.8L193.3,315.7M190.3,314.8L190.2,317.6M190.2,317.6L192.8,318.6M190.2,317.6L189.1,319.7M189.1,319.7L191.9,321.2M188.2,322.4L190.9,322.3M188.2,322.4L187.7,324.7M187.7,324.7L189.9,325.2M187.7,324.7L187.7,327.6M187.7,327.6L186.0,329.7M186.0,329.7L189.2,329.6M186.0,329.7L185.2,332.2M185.2,332.2L187.8,333.1M185.2,332.2L185.2,333.9M185.2,333.9L187.1,335.1M185.2,333.9L184.2,336.9M184.2,336.9L186.8,337.8M183.5,339.5L182.8,341.3M182.2,343.4L185.5,344.2M177.2,361.1L180.0,361.4M176.8,365.1L178.0,365.5M175.7,368.1L177.7,367.9M175.7,368.1L175.1,370.6M175.1,370.6L177.6,371.5M175.1,370.6L174.3,372.7M174.3,372.7L177.0,373.2M173.2,374.8L175.4,375.5M173.2,374.8L172.2,377.3M172.2,377.3L175.4,377.7M172.2,377.3L172.1,379.7M172.1,379.7L174.6,381.4M170.7,382.5L173.7,382.6M170.7,382.5L170.0,384.7M170.0,384.7L173.8,385.0M170.0,384.7L169.4,386.4M169.4,386.4L169.4,389.7M169.4,389.7L171.1,390.1M169.4,389.7L168.8,391.8M168.8,391.8L171.2,393.1M168.8,391.8L167.7,393.7M167.7,393.7L170.3,395.3M167.7,393.7L167.2,396.8M167.2,396.8L169.9,397.4M167.2,396.8L165.8,399.1M165.8,399.1L168.5,399.8M165.8,399.1L165.9,401.7M165.9,401.7L168.4,403.0M165.9,401.7L165.2,404.3M165.2,404.3L167.6,405.0M164.8,406.9L167.2,407.2M164.8,406.9L164.1,409.5M164.1,409.5L165.8,409.0M164.1,409.5L163.2,411.1M163.2,411.1L165.6,411.9M163.2,411.1L162.5,413.8M162.5,413.8L164.5,414.3M162.5,413.8L161.7,415.4M161.7,415.4L164.4,416.6M161.7,415.4L161.4,418.7M161.4,418.7L163.8,418.7M161.4,418.7L159.8,420.9M159.8,420.9L163.0,421.9M159.8,420.9L159.3,422.5M159.4,425.5L161.7,425.7M159.4,425.5L158.5,428.3M158.5,428.3L160.5,428.2M158.3,429.9L159.1,431.3M158.3,429.9L157.3,433.2M157.3,433.2L159.4,433.8M157.3,433.2L156.4,435.6M156.4,435.6L159.1,436.0M156.4,435.6L155.0,437.1M155.0,437.1L157.3,437.7M155.0,437.1L154.6,439.3M154.6,439.3L157.4,441.1M154.6,439.3L153.8,442.9M153.8,442.9L156.0,442.8M195.3,305.5L198.0,306.8M195.3,305.5L195.5,308.8M195.5,308.8L194.1,311.3M194.1,311.3L193.7,312.8M193.7,312.8L196.5,313.7M193.7,312.8L193.3,315.7M193.3,315.7L195.8,316.6M193.3,315.7L192.8,318.6M192.8,318.6L194.3,319.3M192.8,318.6L191.9,321.2M191.9,321.2L194.5,320.7M191.9,321.2L190.9,322.3M190.9,322.3L192.9,322.8M190.9,322.3L189.9,325.2M189.9,325.2L192.2,326.5M189.9,325.2L189.6,328.5M189.6,328.5L192.2,328.6M189.6,328.5L189.2,329.6M189.2,329.6L191.5,331.4M189.2,329.6L187.8,333.1M187.8,333.1L187.1,335.1M187.1,335.1L190.3,335.1M186.8,337.8L188.8,337.5M186.8,337.8L185.4,340.3M185.4,340.3L188.1,340.4M185.4,340.3L185.2,342.8M185.2,342.8L187.7,343.4M184.3,347.5L186.7,347.2M182.1,351.2L184.9,352.7M182.1,351.2L181.5,354.4M180.5,358.7L180.0,361.4M180.0,361.4L182.2,361.7M180.0,361.4L179.3,363.6M178.0,365.5L180.6,366.7M178.0,365.5L177.7,367.9M177.7,367.9L180.0,369.4M177.7,367.9L177.6,371.5M177.6,371.5L179.6,371.8M177.6,371.5L177.0,373.2M177.0,373.2L179.0,374.0M177.0,373.2L175.4,375.5M175.4,375.5L177.5,376.2M175.4,375.5L175.4,377.7M175.4,377.7L177.4,378.8M175.4,377.7L174.6,381.4M174.6,381.4L177.2,380.8M174.6,381.4L173.7,382.6M173.7,382.6L175.5,383.3M173.7,382.6L173.8,385.0M173.8,385.0L175.4,385.8M173.8,385.0L171.8,387.9M171.8,387.9L175.0,388.8M171.1,390.1L174.8,390.6M171.1,390.1L171.2,393.1M171.2,393.1L173.2,393.5M171.2,393.1L170.3,395.3M170.3,395.3L172.9,396.0M170.3,395.3L169.9,397.4M169.9,397.4L172.1,398.7M169.9,397.4L168.5,399.8M168.5,399.8L172.0,400.5M168.5,399.8L168.4,403.0M168.4,403.0L167.6,405.0M167.6,405.0L169.3,405.8M167.6,405.0L167.2,407.2M167.2,407.2L169.6,407.7M165.8,409.0L168.7,410.2M165.8,409.0L165.6,411.9M165.6,411.9L168.4,412.6M165.6,411.9L164.5,414.3M164.5,414.3L167.7,414.6M164.5,414.3L164.4,416.6M164.4,416.6L166.2,417.6M164.4,416.6L163.8,418.7M163.8,418.7L166.1,419.9M163.8,418.7L163.0,421.9M163.0,421.9L165.1,421.5M163.0,421.9L161.5,424.3M161.5,424.3L164.0,423.9M161.5,424.3L161.7,425.7M161.7,425.7L163.5,427.0M161.7,425.7L160.5,428.2M160.5,428.2L162.8,429.7M160.5,428.2L159.1,431.3M159.4,433.8L161.7,434.6M159.4,433.8L159.1,436.0M159.1,436.0L161.1,436.1M159.1,436.0L157.3,437.7M157.3,437.7L159.7,438.5M157.3,437.7L157.4,441.1M157.4,441.1L159.0,440.8M197.5,309.6L196.6,311.7M196.6,311.7L199.3,311.6M196.5,313.7L198.3,314.4M196.5,313.7L195.8,316.6M195.8,316.6L194.3,319.3M194.3,319.3L197.6,320.0M194.3,319.3L194.5,320.7M194.5,320.7L196.1,322.2M194.5,320.7L192.9,322.8M192.9,322.8L192.2,326.5M192.2,326.5L194.7,326.3M192.2,326.5L192.2,328.6M192.2,328.6L194.0,329.6M192.2,328.6L191.5,331.4M191.5,331.4L193.4,331.4M191.5,331.4L190.5,333.5M190.5,333.5L193.2,333.7M190.5,333.5L190.3,335.1M190.3,335.1L192.4,336.2M190.3,335.1L188.8,337.5M188.8,337.5L191.9,338.9M188.1,340.4L191.7,340.8M188.1,340.4L187.7,343.4M187.4,345.3L189.2,345.3M187.4,345.3L186.7,347.2M186.7,347.2L185.7,350.4M184.9,352.7L187.3,353.8M184.4,354.7L186.4,355.0M183.8,357.5L183.2,360.0M183.2,360.0L182.2,361.7M182.2,361.7L184.4,363.2M182.2,361.7L181.7,364.1M181.7,364.1L180.6,366.7M180.6,366.7L183.9,367.1M180.6,366.7L180.0,369.4M180.0,369.4L182.8,369.5M179.6,371.8L181.5,372.0M179.0,374.0L181.5,375.5M179.0,374.0L177.5,376.2M177.5,376.2L180.4,377.6M177.5,376.2L177.4,378.8M177.4,378.8L179.1,379.7M177.4,378.8L177.2,380.8M177.2,380.8L179.7,382.1M177.2,380.8L175.5,383.3M175.5,383.3L178.4,384.1M175.5,383.3L175.4,385.8M175.4,385.8L177.4,386.9M175.4,385.8L175.0,388.8M175.0,388.8L177.9,388.9M175.0,388.8L174.8,390.6M174.8,390.6L176.5,391.4M174.8,390.6L173.2,393.5M173.2,393.5L175.4,394.3M173.2,393.5L172.9,396.0M172.9,396.0L174.7,396.7M172.9,396.0L172.1,398.7M172.1,398.7L174.7,399.3M172.1,398.7L172.0,400.5M172.0,400.5L174.1,400.8M172.0,400.5L170.1,402.4M170.1,402.4L173.6,403.1M170.1,402.4L169.3,405.8M169.3,405.8L171.9,405.5M169.3,405.8L169.6,407.7M169.6,407.7L171.7,408.8M169.6,407.7L168.7,410.2M168.7,410.2L168.4,412.6M168.4,412.6L169.8,413.0M168.4,412.6L167.7,414.6M167.7,414.6L169.8,415.7M167.7,414.6L166.2,417.6M166.2,417.6L168.2,418.5M166.1,419.9L165.1,421.5M165.1,421.5L168.1,423.1M165.1,421.5L164.0,423.9M164.0,423.9L167.4,425.3M164.0,423.9L163.5,427.0M163.5,427.0L165.6,427.0M163.5,427.0L162.8,429.7M162.8,429.7L162.8,432.3M162.8,432.3L164.4,432.4M162.8,432.3L161.7,434.6M161.7,434.6L163.9,435.3M161.7,434.6L161.1,436.1M161.1,436.1L163.4,437.3M161.1,436.1L159.7,438.5M159.7,438.5L163.0,440.1M159.7,438.5L159.0,440.8M159.0,440.8L162.1,441.8M159.2,443.4L161.1,443.8M200.2,309.6L202.2,310.8M199.3,311.6L198.3,314.4M198.3,314.4L200.9,315.9M198.3,314.4L197.4,317.4M197.4,317.4L197.6,320.0M197.6,320.0L196.1,322.2M196.1,322.2L198.3,323.0M196.1,322.2L195.3,323.8M195.3,323.8L194.7,326.3M194.7,326.3L198.0,327.1M194.0,329.6L197.1,329.4M194.0,329.6L193.4,331.4M193.4,331.4L195.7,331.8M193.4,331.4L193.2,333.7M193.2,333.7L195.5,334.4M193.2,333.7L192.4,336.2M192.4,336.2L194.7,337.7M192.4,336.2L191.9,338.9M191.7,340.8L193.4,342.1M189.2,345.3L192.0,346.2M188.7,348.6L190.5,349.3M188.3,350.8L187.3,353.8M187.3,353.8L190.4,353.5M187.3,353.8L186.4,355.0M186.4,355.0L185.5,358.0M185.5,358.0L188.8,358.9M185.8,360.6L187.6,361.0M185.8,360.6L184.4,363.2M184.4,363.2L187.5,363.2M184.5,365.0L186.4,365.4M184.5,365.0L183.9,367.1M183.9,367.1L185.4,368.5M183.9,367.1L182.8,369.5M182.8,369.5L185.5,371.1M181.5,372.0L184.1,372.6M181.5,372.0L181.5,375.5M181.5,375.5L183.2,375.3M181.5,375.5L180.4,377.6M180.4,377.6L183.2,378.3M180.4,377.6L179.1,379.7M179.1,379.7L182.9,379.9M179.1,379.7L179.7,382.1M179.7,382.1L181.6,383.1M178.4,384.1L181.2,385.2M178.4,384.1L177.4,386.9M177.4,386.9L180.2,388.1M177.4,386.9L177.9,388.9M177.9,388.9L179.6,390.4M177.9,388.9L176.5,391.4M176.5,391.4L178.7,392.8M176.5,391.4L175.4,394.3M175.4,394.3L178.0,394.6M175.4,394.3L174.7,396.7M174.7,396.7L177.9,397.8M174.7,396.7L174.7,399.3M174.7,399.3L177.2,399.3M174.7,399.3L174.1,400.8M174.1,400.8L176.5,402.4M173.6,403.1L175.5,404.9M173.6,403.1L171.9,405.5M171.9,405.5L174.9,407.1M171.9,405.5L171.7,408.8M171.7,408.8L173.3,409.3M171.7,408.8L171.3,411.4M171.3,411.4L173.2,411.0M171.3,411.4L169.8,413.0M169.8,413.0L173.0,414.2M169.8,413.0L169.8,415.7M169.8,415.7L171.8,416.1M169.8,415.7L168.2,418.5M168.2,418.5L170.6,418.4M168.2,418.5L167.6,420.6M167.6,420.6L170.9,421.6M168.1,423.1L170.3,423.6M168.1,423.1L167.4,425.3M167.4,425.3L169.4,425.8M167.4,425.3L165.6,427.0M165.6,427.0L168.8,428.4M165.6,427.0L164.7,430.2M164.7,430.2L167.8,431.4M164.7,430.2L164.4,432.4M164.4,432.4L167.2,433.4M164.4,432.4L163.9,435.3M163.9,435.3L166.5,435.5M163.9,435.3L163.4,437.3M163.4,437.3L165.6,437.9M163.4,437.3L163.0,440.1M163.0,440.1L162.1,441.8M162.1,441.8L164.4,442.6M162.1,441.8L161.1,443.8M200.9,315.9L202.9,315.5M200.1,318.3L202.4,318.6M200.1,318.3L200.0,320.7M200.0,320.7L201.7,320.3M200.0,320.7L198.3,323.0M198.3,323.0L201.8,323.9M198.3,323.0L198.7,325.3M198.7,325.3L200.9,325.4M198.7,325.3L198.0,327.1M198.0,327.1L200.6,327.6M198.0,327.1L197.1,329.4M197.1,329.4L199.5,331.0M197.1,329.4L195.7,331.8M195.7,331.8L197.8,333.3M195.5,334.4L198.5,335.4M195.5,334.4L194.7,337.7M194.7,337.7L197.3,338.0M193.9,339.6L196.0,339.3M193.9,339.6L193.4,342.1M193.4,342.1L196.1,342.0M193.4,342.1L192.5,343.9M192.5,343.9L195.0,344.5M192.0,346.2L190.5,349.3M190.5,349.3L194.2,349.6M190.5,349.3L190.4,351.8M190.4,351.8L190.4,353.5M190.4,353.5L191.9,354.1M188.8,355.6L192.0,357.3M188.8,355.6L188.8,358.9M188.8,358.9L190.8,358.8M188.8,358.9L187.6,361.0M187.5,363.2L189.3,363.9M187.5,363.2L186.4,365.4M186.4,365.4L189.6,366.1M185.4,368.5L187.9,368.6M185.5,371.1L186.8,371.9M185.5,371.1L184.1,372.6M184.1,372.6L187.0,373.2M184.1,372.6L183.2,375.3M183.2,375.3L185.5,376.2M183.2,375.3L183.2,378.3M183.2,378.3L185.9,378.8M183.2,378.3L182.9,379.9M182.9,379.9L184.8,380.9M182.9,379.9L181.6,383.1M181.6,383.1L183.4,383.4M181.6,383.1L181.2,385.2M181.2,385.2L183.3,386.2M181.2,385.2L180.2,388.1M180.2,388.1L182.6,388.4M180.2,388.1L179.6,390.4M179.6,390.4L182.3,390.5M179.6,390.4L178.7,392.8M178.7,392.8L178.0,394.6M178.0,394.6L180.1,395.9M178.0,394.6L177.9,397.8M177.9,397.8L180.2,397.9M177.9,397.8L177.2,399.3M177.2,399.3L179.4,399.9M177.2,399.3L176.5,402.4M176.5,402.4L178.7,402.7M176.5,402.4L175.5,404.9M175.5,404.9L178.3,405.7M175.5,404.9L174.9,407.1M174.9,407.1L177.6,406.8M174.9,407.1L173.3,409.3M173.3,409.3L176.0,409.1M173.3,409.3L173.2,411.0M173.2,411.0L176.4,412.2M173.2,411.0L173.0,414.2M173.0,414.2L171.8,416.1M171.8,416.1L174.3,417.1M171.8,416.1L170.6,418.4M170.6,418.4L170.9,421.6M170.9,421.6L173.2,421.4M170.3,423.6L172.3,423.9M169.4,425.8L168.8,428.4M168.8,428.4L171.3,429.7M168.8,428.4L167.8,431.4M167.8,431.4L169.6,430.8M167.2,433.4L169.3,434.4M167.2,433.4L166.5,435.5M166.5,435.5L168.5,436.4M166.5,435.5L165.6,437.9M165.6,437.9L168.0,438.1M165.6,437.9L165.2,439.9M165.2,439.9L164.4,442.6M164.4,442.6L164.0,444.8M164.0,444.8L165.7,446.4M204.1,314.3L207.0,314.6M202.9,315.5L202.4,318.6M201.7,320.3L204.7,322.3M201.7,320.3L201.8,323.9M201.8,323.9L203.8,323.4M201.8,323.9L200.9,325.4M200.9,325.4L203.0,326.7M200.9,325.4L200.6,327.6M200.6,327.6L201.9,328.1M200.6,327.6L199.5,331.0M199.5,331.0L201.4,331.3M199.5,331.0L197.8,333.3M197.8,333.3L200.9,332.9M197.8,333.3L198.5,335.4M198.5,335.4L200.0,336.2M198.5,335.4L197.3,338.0M196.0,339.3L198.9,340.2M196.0,339.3L196.1,342.0M196.1,342.0L195.0,344.5M195.0,344.5L196.9,345.9M195.0,344.5L194.7,347.3M193.2,352.1L196.0,353.1M193.2,352.1L191.9,354.1M192.0,357.3L193.6,357.1M192.0,357.3L190.8,358.8M190.1,361.1L193.1,362.0M190.1,361.1L189.3,363.9M189.3,363.9L191.5,365.1M189.6,366.1L191.8,367.3M189.6,366.1L187.9,368.6M187.9,368.6L190.6,369.3M187.9,368.6L186.8,371.9M186.8,371.9L190.3,372.5M187.0,373.2L189.1,373.9M185.5,376.2L188.8,376.9M185.5,376.2L185.9,378.8M185.9,378.8L187.4,379.8M185.9,378.8L184.8,380.9M184.8,380.9L187.4,381.6M184.8,380.9L183.4,383.4M183.4,383.4L186.2,384.0M183.4,383.4L183.3,386.2M183.3,386.2L185.7,386.0M183.3,386.2L182.6,388.4M182.6,388.4L185.3,388.9M182.6,388.4L182.3,390.5M182.3,390.5L184.8,391.6M182.3,390.5L180.5,393.4M180.5,393.4L183.7,394.1M180.5,393.4L180.1,395.9M180.1,395.9L182.4,395.8M180.1,395.9L180.2,397.9M180.2,397.9L182.9,398.7M180.2,397.9L179.4,399.9M179.4,399.9L181.9,400.8M179.4,399.9L178.7,402.7M178.7,402.7L180.6,403.7M178.3,405.7L179.4,406.0M178.3,405.7L177.6,406.8M177.6,406.8L179.7,408.5M177.6,406.8L176.0,409.1M176.0,409.1L178.2,410.5M176.0,409.1L176.4,412.2M176.4,412.2L178.7,412.7M176.4,412.2L174.4,414.5M174.4,414.5L177.5,415.1M174.4,414.5L174.3,417.1M174.3,417.1L177.2,417.8M174.3,417.1L174.0,419.8M174.0,419.8L175.5,419.7M174.0,419.8L173.2,421.4M173.2,421.4L174.9,421.7M173.2,421.4L172.3,423.9M172.3,423.9L175.0,424.3M172.3,423.9L171.5,426.2M171.5,426.2L174.4,427.4M171.5,426.2L171.3,429.7M171.3,429.7L172.8,429.2M171.3,429.7L169.6,430.8M169.6,430.8L173.0,432.5M169.6,430.8L169.3,434.4M169.3,434.4L171.8,434.4M169.3,434.4L168.5,436.4M168.5,436.4L171.3,437.7M168.5,436.4L168.0,438.1M168.0,438.1L167.7,441.6M167.7,441.6L170.4,441.2M167.7,441.6L166.8,444.0M207.4,310.0L207.6,312.2M207.0,314.6L205.2,317.0M205.2,317.0L208.7,317.5M205.5,318.6L207.5,320.4M205.5,318.6L204.7,322.3M204.7,322.3L206.6,322.0M204.7,322.3L203.8,323.4M203.8,323.4L206.5,325.0M203.8,323.4L203.0,326.7M203.0,326.7L205.7,326.8M201.9,328.1L204.1,329.9M201.9,328.1L201.4,331.3M201.4,331.3L204.2,331.4M201.4,331.3L200.9,332.9M200.9,332.9L200.0,336.2M200.0,336.2L202.1,336.8M200.0,336.2L199.4,338.1M198.9,340.2L198.0,342.9M198.0,342.9L200.0,343.7M196.9,345.9L197.1,347.9M197.1,347.9L196.4,350.4M196.4,350.4L199.1,350.8M196.4,350.4L196.0,353.1M196.0,353.1L197.4,353.9M196.0,353.1L194.2,355.3M193.6,357.1L197.0,358.1M193.6,357.1L192.9,360.4M193.1,362.0L194.2,363.5M193.1,362.0L191.5,365.1M191.5,365.1L193.6,365.9M191.5,365.1L191.8,367.3M191.8,367.3L194.1,368.2M191.8,367.3L190.6,369.3M190.6,369.3L192.6,369.8M190.6,369.3L190.3,372.5M190.3,372.5L192.4,372.5M189.1,373.9L190.9,375.1M189.1,373.9L188.8,376.9M188.8,376.9L190.4,378.0M188.8,376.9L187.4,379.8M187.4,379.8L190.4,380.4M187.4,381.6L186.2,384.0M186.2,384.0L188.2,384.8M186.2,384.0L185.7,386.0M185.7,386.0L188.0,386.7M185.3,388.9L187.3,390.0M185.3,388.9L184.8,391.6M184.8,391.6L186.5,391.3M184.8,391.6L183.7,394.1M183.7,394.1L186.6,394.3M183.7,394.1L182.4,395.8M182.4,395.8L184.9,396.8M182.4,395.8L182.9,398.7M182.9,398.7L184.6,398.8M182.9,398.7L181.9,400.8M181.9,400.8L183.9,401.9M181.9,400.8L180.6,403.7M180.6,403.7L182.7,404.0M180.6,403.7L179.4,406.0M179.4,406.0L182.5,405.7M179.4,406.0L179.7,408.5M179.7,408.5L182.3,408.4M179.7,408.5L178.2,410.5M178.2,410.5L181.7,411.2M178.2,410.5L178.7,412.7M178.7,412.7L180.2,413.5M178.7,412.7L177.5,415.1M177.5,415.1L179.7,416.5M177.5,415.1L177.2,417.8M175.5,419.7L178.6,420.3M175.5,419.7L174.9,421.7M174.9,421.7L177.0,423.3M174.9,421.7L175.0,424.3M175.0,424.3L176.9,425.5M175.0,424.3L174.4,427.4M174.4,427.4L176.9,428.4M174.4,427.4L172.8,429.2M172.8,429.2L175.8,430.1M172.8,429.2L173.0,432.5M173.0,432.5L175.2,432.2M173.0,432.5L171.8,434.4M171.8,434.4L174.4,435.4M171.8,434.4L171.3,437.7M171.3,437.7L173.7,437.3M171.3,437.7L170.5,439.4M170.5,439.4L170.4,441.2M170.4,441.2L172.5,442.0M168.7,444.0L169.0,446.6M208.8,312.7L209.2,315.3M207.5,320.4L206.6,322.0M206.6,322.0L208.7,323.6M206.6,322.0L206.5,325.0M206.5,325.0L208.1,324.6M205.7,326.8L207.3,327.8M205.7,326.8L204.1,329.9M202.9,333.7L205.7,335.4M202.9,333.7L202.1,336.8M201.5,338.3L204.9,339.4M201.5,338.3L201.2,341.7M201.2,341.7L204.1,342.6M201.2,341.7L200.0,343.7M200.0,343.7L200.5,346.7M200.5,346.7L200.0,348.2M200.0,348.2L201.2,349.3M200.0,348.2L199.1,350.8M199.1,350.8L201.5,351.7M199.1,350.8L197.4,353.9M197.4,353.9L200.3,354.9M197.4,353.9L197.0,355.4M197.0,355.4L200.1,356.2M197.0,355.4L197.0,358.1M197.0,358.1L199.2,359.4M197.0,358.1L195.2,360.7M195.2,360.7L198.3,361.8M195.2,360.7L194.2,363.5M194.2,363.5L197.4,363.5M194.2,363.5L193.6,365.9M193.6,365.9L197.2,366.0M193.6,365.9L194.1,368.2M194.1,368.2L196.5,369.1M194.1,368.2L192.6,369.8M192.6,369.8L195.6,371.3M192.6,369.8L192.4,372.5M192.4,372.5L194.5,373.5M192.4,372.5L190.9,375.1M190.9,375.1L193.2,376.2M190.9,375.1L190.4,378.0M190.4,378.0L192.8,378.6M190.4,378.0L190.4,380.4M190.4,380.4L192.3,380.4M190.4,380.4L189.7,381.7M189.7,381.7L191.5,382.9M189.7,381.7L188.2,384.8M188.2,384.8L190.7,385.8M188.2,384.8L188.0,386.7M188.0,386.7L190.7,388.1M188.0,386.7L187.3,390.0M187.3,390.0L189.4,390.6M187.3,390.0L186.5,391.3M186.5,391.3L189.5,392.7M186.5,391.3L186.6,394.3M186.6,394.3L188.7,394.8M186.6,394.3L184.9,396.8M184.9,396.8L187.7,396.9M184.6,398.8L187.5,399.8M184.6,398.8L183.9,401.9M183.9,401.9L185.8,401.7M183.9,401.9L182.7,404.0M182.7,404.0L185.8,404.2M182.7,404.0L182.5,405.7M182.5,405.7L184.2,407.5M182.5,405.7L182.3,408.4M182.3,408.4L184.1,409.1M182.3,408.4L181.7,411.2M181.7,411.2L183.2,412.1M181.7,411.2L180.2,413.5M180.2,413.5L183.1,414.6M180.2,413.5L179.7,416.5M179.7,416.5L182.7,416.1M179.3,418.0L181.2,419.5M179.3,418.0L178.6,420.3M178.6,420.3L180.2,422.0M178.6,420.3L177.0,423.3M177.0,423.3L179.8,423.3M177.0,423.3L176.9,425.5M176.9,425.5L179.6,426.4M176.9,425.5L176.9,428.4M176.9,428.4L179.4,428.4M176.9,428.4L175.8,430.1M175.8,430.1L175.2,432.2M175.2,432.2L177.7,433.4M175.2,432.2L174.4,435.4M174.4,435.4L176.6,435.6M174.4,435.4L173.7,437.3M173.7,437.3L176.5,438.3M172.9,440.5L172.5,442.0M172.5,442.0L175.2,442.7M172.5,442.0L171.7,444.8M211.6,315.3L210.8,317.7M210.8,317.7L210.0,321.2M210.0,321.2L208.7,323.6M208.7,323.6L208.1,324.6M208.1,324.6L207.3,327.8M207.3,327.8L209.6,328.6M207.3,327.8L206.9,330.1M206.9,330.1L209.9,331.5M206.9,330.1L205.7,332.7M205.7,332.7L208.8,332.5M205.7,332.7L205.7,335.4M205.7,335.4L208.8,335.3M205.1,337.9L208.0,338.6M205.1,337.9L204.9,339.4M204.9,339.4L206.6,340.5M204.1,342.6L206.0,342.5M204.1,342.6L203.1,344.7M203.1,344.7L202.0,346.3M202.0,346.3L201.2,349.3M201.2,349.3L203.9,350.8M201.5,351.7L203.0,351.9M200.3,354.9L202.6,355.3M200.1,356.2L201.5,356.7M200.1,356.2L199.2,359.4M199.2,359.4L200.7,359.3M199.2,359.4L198.3,361.8M198.3,361.8L200.1,361.5M198.3,361.8L197.4,363.5M197.4,363.5L197.2,366.0M197.2,366.0L198.7,366.7M197.2,366.0L196.5,369.1M196.5,369.1L198.3,369.1M196.5,369.1L195.6,371.3M195.6,371.3L198.4,372.0M195.6,371.3L194.5,373.5M194.5,373.5L197.0,374.2M194.5,373.5L193.2,376.2M193.2,376.2L196.4,376.4M193.2,376.2L192.8,378.6M192.8,378.6L195.7,378.2M192.8,378.6L192.3,380.4M192.3,380.4L195.2,381.4M192.3,380.4L191.5,382.9M191.5,382.9L194.8,384.0M191.5,382.9L190.7,385.8M190.7,385.8L193.3,386.5M190.7,385.8L190.7,388.1M190.7,388.1L193.1,388.9M190.7,388.1L189.4,390.6M189.4,390.6L192.7,391.5M189.4,390.6L189.5,392.7M189.5,392.7L191.7,393.0M189.5,392.7L188.7,394.8M188.7,394.8L191.4,395.6M187.7,396.9L190.9,397.8M187.7,396.9L187.5,399.8M187.5,399.8L190.1,400.5M187.5,399.8L185.8,401.7M185.8,401.7L189.3,403.4M185.8,401.7L185.8,404.2M185.8,404.2L187.8,404.7M185.8,404.2L184.2,407.5M184.2,407.5L186.9,407.3M184.2,407.5L184.1,409.1M184.1,409.1L186.4,410.0M184.1,409.1L183.2,412.1M183.2,412.1L183.1,414.6M183.1,414.6L185.7,415.1M183.1,414.6L182.7,416.1M182.7,416.1L185.1,417.2M182.7,416.1L181.2,419.5M181.2,419.5L184.0,419.9M181.2,419.5L180.2,422.0M180.2,422.0L183.0,422.6M180.2,422.0L179.8,423.3M179.8,423.3L179.6,426.4M179.6,426.4L181.7,426.7M179.4,428.4L180.8,428.8M179.4,428.4L178.8,431.1M178.8,431.1L180.5,432.1M178.8,431.1L177.7,433.4M177.7,433.4L179.1,434.5M177.7,433.4L176.6,435.6M176.6,435.6L179.0,435.9M176.6,435.6L176.5,438.3M176.5,438.3L178.2,439.6M176.5,438.3L175.4,440.2M175.4,440.2L177.1,441.3M175.4,440.2L175.2,442.7M175.2,442.7L176.8,443.2M175.2,442.7L173.9,444.9M213.0,319.1L211.6,321.2M211.6,321.2L212.1,323.9M212.1,323.9L213.4,324.7M210.2,326.3L212.8,326.2M209.9,331.5L208.8,332.5M208.0,338.6L210.5,338.4M208.0,338.6L206.6,340.5M206.6,340.5L208.5,341.6M206.0,342.5L208.7,344.0M206.0,342.5L205.8,345.3M205.8,345.3L207.3,345.7M204.4,347.3L206.8,347.7M204.4,347.3L203.9,350.8M203.9,350.8L206.7,351.3M203.0,351.9L205.8,352.8M203.0,351.9L202.6,355.3M202.6,355.3L205.3,356.2M201.5,356.7L204.9,357.5M201.5,356.7L200.7,359.3M200.7,359.3L204.2,360.5M200.7,359.3L200.1,361.5M200.1,361.5L203.3,362.8M200.1,361.5L199.8,364.2M199.8,364.2L201.6,365.3M199.8,364.2L198.7,366.7M198.7,366.7L201.6,367.0M198.7,366.7L198.3,369.1M198.3,369.1L200.8,370.6M198.4,372.0L197.0,374.2M197.0,374.2L196.4,376.4M196.4,376.4L199.3,377.8M196.4,376.4L195.7,378.2M195.7,378.2L197.7,379.3M195.2,381.4L197.4,381.9M195.2,381.4L194.8,384.0M194.8,384.0L196.6,384.5M194.8,384.0L193.3,386.5M193.3,386.5L196.2,386.9M193.3,386.5L193.1,388.9M193.1,388.9L195.0,388.5M192.7,391.5L194.0,391.7M192.7,391.5L191.7,393.0M191.7,393.0L193.4,393.5M191.7,393.0L191.4,395.6M191.4,395.6L194.0,396.1M191.4,395.6L190.9,397.8M190.9,397.8L190.1,400.5M190.1,400.5L192.1,402.0M190.1,400.5L189.3,403.4M189.3,403.4L191.7,404.0M189.3,403.4L187.8,404.7M187.8,404.7L190.6,406.5M187.8,404.7L186.9,407.3M186.9,407.3L190.0,408.8M186.4,410.0L189.7,410.7M186.4,410.0L185.8,412.3M185.8,412.3L187.9,412.7M185.8,412.3L185.7,415.1M185.7,415.1L187.9,415.9M185.7,415.1L185.1,417.2M185.1,417.2L186.9,418.5M185.1,417.2L184.0,419.9M184.0,419.9L185.9,420.6M184.0,419.9L183.0,422.6M183.0,422.6L186.2,423.0M183.0,422.6L182.4,425.2M182.4,425.2L185.1,425.7M182.4,425.2L181.7,426.7M181.7,426.7L184.5,428.2M181.7,426.7L180.8,428.8M180.8,428.8L183.0,430.2M180.8,428.8L180.5,432.1M180.5,432.1L179.1,434.5M179.1,434.5L182.0,435.2M179.1,434.5L179.0,435.9M179.0,435.9L181.8,437.2M179.0,435.9L178.2,439.6M178.2,439.6L180.9,439.4M178.2,439.6L177.1,441.3M177.1,441.3L180.0,442.4M176.8,443.2L175.6,446.6M216.7,314.3L216.4,317.9M215.3,319.0L217.8,320.3M214.4,322.2L216.7,322.4M214.4,322.2L213.4,324.7M213.4,324.7L216.3,324.7M212.6,329.8L211.2,331.7M211.2,331.7L213.7,332.4M210.5,338.4L211.6,339.6M210.5,338.4L208.5,341.6M208.5,341.6L208.7,344.0M208.7,344.0L210.9,344.8M208.7,344.0L207.3,345.7M207.3,345.7L209.6,346.3M207.3,345.7L206.8,347.7M206.8,347.7L209.6,349.2M206.8,347.7L206.7,351.3M206.7,351.3L208.7,351.1M206.7,351.3L205.8,352.8M205.8,352.8L208.6,353.9M205.8,352.8L205.3,356.2M205.3,356.2L207.5,356.6M205.3,356.2L204.9,357.5M204.9,357.5L206.2,358.9M204.9,357.5L204.2,360.5M204.2,360.5L206.5,361.7M204.2,360.5L203.3,362.8M203.3,362.8L204.9,363.8M203.3,362.8L201.6,365.3M201.6,365.3L205.0,365.4M201.6,365.3L201.6,367.0M201.6,367.0L204.0,367.8M201.6,367.0L200.8,370.6M200.8,370.6L204.1,370.3M200.8,370.6L199.7,372.7M199.7,372.7L202.1,372.6M199.7,372.7L198.7,375.2M198.7,375.2L202.0,375.7M198.7,375.2L199.3,377.8M199.3,377.8L200.7,378.4M199.3,377.8L197.7,379.3M197.7,379.3L200.3,380.5M197.7,379.3L197.4,381.9M197.4,381.9L200.4,383.1M197.4,381.9L196.6,384.5M196.6,384.5L199.6,384.9M196.6,384.5L196.2,386.9M196.2,386.9L198.6,387.1M196.2,386.9L195.0,388.5M195.0,388.5L197.6,390.0M195.0,388.5L194.0,391.7M194.0,391.7L197.6,392.2M194.0,391.7L193.4,393.5M193.4,393.5L197.1,394.4M193.4,393.5L194.0,396.1M194.0,396.1L195.2,396.6M194.0,396.1L192.4,398.2M192.4,398.2L195.4,399.1M192.4,398.2L192.1,402.0M192.1,402.0L193.8,402.2M192.1,402.0L191.7,404.0M191.7,404.0L193.3,404.5M191.7,404.0L190.6,406.5M190.6,406.5L192.1,407.1M190.6,406.5L190.0,408.8M190.0,408.8L192.0,409.7M190.0,408.8L189.7,410.7M189.7,410.7L191.1,410.8M189.7,410.7L187.9,412.7M187.9,412.7L190.8,413.8M187.9,415.9L189.9,416.2M187.9,415.9L186.9,418.5M186.9,418.5L189.1,418.8M186.9,418.5L185.9,420.6M185.9,420.6L186.2,423.0M186.2,423.0L188.1,423.9M186.2,423.0L185.1,425.7M185.1,425.7L187.7,425.5M185.1,425.7L184.5,428.2M184.5,428.2L186.8,427.9M184.5,428.2L183.0,430.2M183.0,430.2L185.7,430.4M183.0,430.2L183.3,432.9M183.3,432.9L182.0,435.2M182.0,435.2L183.9,435.9M182.0,435.2L181.8,437.2M181.8,437.2L184.5,438.3M181.8,437.2L180.9,439.4M180.9,439.4L183.0,440.5M180.9,439.4L180.0,442.4M180.0,442.4L182.0,443.2M218.9,317.6L217.8,320.3M217.8,320.3L216.7,322.4M216.3,324.7L218.7,326.1M216.3,324.7L215.8,327.3M215.8,327.3L217.5,327.7M213.7,332.4L216.3,332.2M211.6,339.6L214.7,339.6M211.6,339.6L211.3,341.1M210.9,344.8L213.6,344.5M209.6,346.3L209.6,349.2M209.6,349.2L211.1,350.2M209.6,349.2L208.7,351.1M208.7,351.1L211.7,352.5M208.7,351.1L208.6,353.9M208.6,353.9L210.3,354.9M208.6,353.9L207.5,356.6M207.5,356.6L209.9,356.6M207.5,356.6L206.2,358.9M206.2,358.9L209.7,359.5M206.2,358.9L206.5,361.7M206.5,361.7L204.9,363.8M204.9,363.8L207.1,364.3M204.9,363.8L205.0,365.4M205.0,365.4L206.7,366.7M205.0,365.4L204.0,367.8M204.0,367.8L206.9,369.3M204.0,367.8L204.1,370.3M204.1,370.3L205.7,371.1M204.1,370.3L202.1,372.6M202.1,372.6L204.9,373.4M202.1,372.6L202.0,375.7M202.0,375.7L203.7,376.4M202.0,375.7L200.7,378.4M200.7,378.4L203.4,378.4M200.7,378.4L200.3,380.5M200.3,380.5L202.3,381.4M200.3,380.5L200.4,383.1M200.4,383.1L202.7,382.8M200.4,383.1L199.6,384.9M199.6,384.9L201.9,386.1M199.6,384.9L198.6,387.1M198.6,387.1L200.8,388.0M198.6,387.1L197.6,390.0M197.6,390.0L200.8,390.9M197.6,390.0L197.6,392.2M197.6,392.2L199.2,393.3M197.6,392.2L197.1,394.4M197.1,394.4L198.1,395.9M197.1,394.4L195.2,396.6M195.2,396.6L197.7,397.1M195.2,396.6L195.4,399.1M195.4,399.1L197.5,400.6M195.4,399.1L193.8,402.2M193.8,402.2L196.2,402.6M193.8,402.2L193.3,404.5M193.3,404.5L195.4,404.8M193.3,404.5L192.1,407.1M192.1,407.1L195.2,407.4M192.1,407.1L192.0,409.7M192.0,409.7L194.5,409.3M192.0,409.7L191.1,410.8M191.1,410.8L194.1,411.9M191.1,410.8L190.8,413.8M190.8,413.8L192.8,414.5M189.9,416.2L193.0,417.8M189.9,416.2L189.1,418.8M189.1,418.8L188.6,421.4M188.6,421.4L191.2,422.5M188.6,421.4L188.1,423.9M188.1,423.9L190.2,423.6M188.1,423.9L187.7,425.5M187.7,425.5L190.2,426.9M187.7,425.5L186.8,427.9M186.8,427.9L189.6,428.6M186.8,427.9L185.7,430.4M185.7,430.4L188.7,431.2M185.7,430.4L185.2,433.5M185.2,433.5L187.4,434.0M185.2,433.5L183.9,435.9M183.9,435.9L187.3,436.5M183.9,435.9L184.5,438.3M184.5,438.3L185.9,438.0M184.5,438.3L183.0,440.5M183.0,440.5L185.6,441.4M183.0,440.5L182.0,443.2M244.3,237.2L246.1,237.9M238.1,256.4L241.6,256.4M237.8,261.7L236.3,262.9M223.9,308.6L222.4,311.7M220.4,318.6L220.0,321.3M219.8,324.1L218.7,326.1M217.5,327.7L217.8,330.9M217.8,330.9L219.4,330.9M216.3,332.2L215.7,334.9M215.7,334.9L215.6,337.9M215.6,337.9L217.7,338.2M214.7,339.6L217.1,341.4M214.7,339.6L213.5,342.0M213.5,342.0L215.7,343.6M213.5,342.0L213.6,344.5M213.6,344.5L216.0,345.9M213.6,344.5L212.4,347.2M212.4,347.2L215.4,347.6M212.4,347.2L211.1,350.2M211.1,350.2L211.7,352.5M211.7,352.5L213.8,352.4M211.7,352.5L210.3,354.9M210.3,354.9L212.6,355.1M210.3,354.9L209.9,356.6M209.9,356.6L212.4,358.1M209.9,356.6L209.7,359.5M209.7,359.5L211.3,360.1M209.7,359.5L207.9,362.2M207.9,362.2L210.4,362.8M207.9,362.2L207.1,364.3M207.1,364.3L210.8,364.7M207.1,364.3L206.7,366.7M206.7,366.7L209.8,367.0M206.7,366.7L206.9,369.3M206.9,369.3L208.2,370.0M206.9,369.3L205.7,371.1M205.7,371.1L207.7,371.6M205.7,371.1L204.9,373.4M204.9,373.4L203.7,376.4M203.7,376.4L203.4,378.4M203.4,378.4L205.2,379.5M203.4,378.4L202.3,381.4M202.3,381.4L205.7,381.9M202.3,381.4L202.7,382.8M202.7,382.8L204.3,383.6M202.7,382.8L201.9,386.1M201.9,386.1L204.3,386.5M201.9,386.1L200.8,388.0M200.8,388.0L202.4,389.3M200.8,388.0L200.8,390.9M200.8,390.9L201.8,391.5M200.8,390.9L199.2,393.3M199.2,393.3L201.8,394.1M198.1,395.9L201.3,396.6M198.1,395.9L197.7,397.1M197.7,397.1L197.5,400.6M197.5,400.6L199.4,400.3M197.5,400.6L196.2,402.6M196.2,402.6L198.4,403.4M196.2,402.6L195.4,404.8M195.4,404.8L199.0,405.8M195.4,404.8L195.2,407.4M195.2,407.4L197.2,407.9M195.2,407.4L194.5,409.3M194.5,409.3L196.7,410.4M194.5,409.3L194.1,411.9M194.1,411.9L195.9,412.2M194.1,411.9L192.8,414.5M192.8,414.5L195.3,414.5M192.8,414.5L193.0,417.8M193.0,417.8L194.5,417.8M192.3,419.0L194.2,420.0M192.3,419.0L191.2,422.5M191.2,422.5L193.5,422.8M191.2,422.5L190.2,423.6M190.2,423.6L193.2,424.5M190.2,423.6L190.2,426.9M190.2,426.9L192.2,427.5M190.2,426.9L189.6,428.6M189.6,428.6L191.6,430.1M189.6,428.6L188.7,431.2M188.7,431.2L187.4,434.0M187.4,434.0L190.5,434.9M187.4,434.0L187.3,436.5M187.3,436.5L189.5,437.1M187.3,436.5L185.9,438.0M185.9,438.0L188.7,439.8M185.6,441.4L184.7,443.1M247.7,235.9L250.3,235.6M244.0,247.3L247.0,247.4M244.0,247.3L243.1,249.8M243.1,249.8L242.6,251.6M242.6,251.6L244.7,252.9M242.6,251.6L241.8,253.8M225.9,308.9L228.2,309.9M225.5,312.5L227.1,312.9M220.6,329.3L223.0,329.6M218.8,333.8L221.5,334.2M217.1,341.4L219.6,341.2M217.1,341.4L215.7,343.6M215.7,343.6L219.3,344.5M216.0,345.9L217.9,346.4M216.0,345.9L215.4,347.6M215.4,347.6L214.1,350.1M214.1,350.1L216.8,351.2M214.1,350.1L213.8,352.4M213.8,352.4L212.6,355.1M212.6,355.1L214.7,355.6M212.6,355.1L212.4,358.1M212.4,358.1L214.7,358.2M212.4,358.1L211.3,360.1M211.3,360.1L214.4,361.1M211.3,360.1L210.4,362.8M210.4,362.8L213.3,363.9M210.4,362.8L210.8,364.7M210.8,364.7L209.8,367.0M209.8,367.0L212.2,368.5M209.8,367.0L208.2,370.0M208.2,370.0L211.0,370.6M208.2,370.0L207.7,371.6M207.7,371.6L210.0,373.3M207.7,371.6L207.8,375.2M207.8,375.2L209.3,374.4M207.8,375.2L207.2,376.6M207.2,376.6L208.7,377.3M207.2,376.6L205.2,379.5M205.2,379.5L208.2,379.6M205.2,379.5L205.7,381.9M205.7,381.9L207.6,382.9M204.3,383.6L206.8,385.1M204.3,383.6L204.3,386.5M204.3,386.5L206.6,386.8M202.4,389.3L206.0,389.4M202.4,389.3L201.8,391.5M201.8,391.5L205.2,392.4M201.8,391.5L201.8,394.1M201.8,394.1L204.3,395.1M201.8,394.1L201.3,396.6M201.3,396.6L203.1,397.0M200.6,398.3L202.9,399.7M199.4,400.3L198.4,403.4M198.4,403.4L201.0,404.4M198.4,403.4L199.0,405.8M199.0,405.8L200.7,406.9M199.0,405.8L197.2,407.9M197.2,407.9L196.7,410.4M196.7,410.4L199.8,411.8M196.7,410.4L195.9,412.2M195.9,412.2L198.3,414.1M195.9,412.2L195.3,414.5M195.3,414.5L198.1,416.7M195.3,414.5L194.5,417.8M194.5,417.8L194.2,420.0M194.2,420.0L196.0,421.2M194.2,420.0L193.5,422.8M193.5,422.8L195.7,423.0M193.5,422.8L193.2,424.5M193.2,424.5L195.8,425.8M193.2,424.5L192.2,427.5M192.2,427.5L194.5,427.6M192.2,427.5L191.6,430.1M191.6,430.1L194.2,430.7M191.6,430.1L191.1,432.5M191.1,432.5L193.4,432.7M191.1,432.5L190.5,434.9M190.5,434.9L189.5,437.1M189.5,437.1L191.6,438.0M189.5,437.1L188.7,439.8M188.7,439.8L190.8,439.6M186.7,444.5L189.2,444.7M251.5,230.8L249.9,233.5M248.7,237.4L248.9,240.7M248.3,243.6L249.5,243.9M248.3,243.6L247.0,245.0M247.0,245.0L249.4,246.6M247.0,245.0L247.0,247.4M244.1,254.9L246.9,255.4M243.3,256.8L246.1,258.3M223.0,329.6L225.4,330.0M223.0,329.6L221.7,331.9M221.7,331.9L224.2,332.4M221.5,334.2L220.9,336.6M219.3,344.5L221.0,344.1M219.3,344.5L217.9,346.4M217.9,346.4L220.7,346.4M217.9,346.4L217.2,348.9M217.2,348.9L220.5,349.1M217.2,348.9L216.8,351.2M216.8,351.2L219.2,352.2M216.8,351.2L215.3,354.0M215.3,354.0L217.8,354.2M215.3,354.0L214.7,355.6M214.7,355.6L217.5,356.1M214.7,355.6L214.7,358.2M214.7,358.2L216.7,359.4M214.7,358.2L214.4,361.1M214.4,361.1L216.6,362.0M214.4,361.1L213.3,363.9M213.3,363.9L215.8,364.2M213.3,363.9L212.7,365.5M212.7,365.5L214.5,365.9M212.7,365.5L212.2,368.5M212.2,368.5L214.9,368.7M212.2,368.5L211.0,370.6M211.0,370.6L213.3,370.6M211.0,370.6L210.0,373.3M210.0,373.3L209.3,374.4M209.3,374.4L211.8,375.4M209.3,374.4L208.7,377.3M208.7,377.3L211.8,378.6M208.7,377.3L208.2,379.6M208.2,379.6L210.8,380.0M208.2,379.6L207.6,382.9M207.6,382.9L210.1,383.0M207.6,382.9L206.8,385.1M206.8,385.1L209.0,385.4M206.8,385.1L206.6,386.8M206.6,386.8L208.9,388.1M206.6,386.8L206.0,389.4M206.0,389.4L207.7,390.3M206.0,389.4L205.2,392.4M205.2,392.4L206.8,392.8M205.2,392.4L204.3,395.1M204.3,395.1L206.9,395.4M204.3,395.1L203.1,397.0M203.1,397.0L206.0,397.5M202.9,399.7L204.8,400.0M202.9,399.7L202.4,401.8M202.4,401.8L204.7,402.2M202.4,401.8L201.0,404.4M201.0,404.4L203.5,404.3M201.0,404.4L200.7,406.9M200.7,406.9L203.7,407.8M200.1,409.5L202.2,408.9M200.1,409.5L199.8,411.8M199.8,411.8L201.6,412.0M198.3,414.1L200.6,413.7M198.3,414.1L198.1,416.7M198.1,416.7L200.1,416.4M198.1,416.7L198.0,418.3M198.0,418.3L196.0,421.2M196.0,421.2L199.6,421.9M196.0,421.2L195.7,423.0M195.7,423.0L198.5,424.7M195.7,423.0L195.8,425.8M195.8,425.8L197.7,427.1M195.8,425.8L194.5,427.6M194.5,427.6L197.4,428.6M194.5,427.6L194.2,430.7M194.2,430.7L196.2,431.7M194.2,430.7L193.4,432.7M193.4,432.7L195.7,432.9M193.4,432.7L192.6,435.5M192.6,435.5L195.3,436.1M191.6,438.0L194.3,437.8M191.6,438.0L190.8,439.6M190.8,439.6L193.4,440.4M190.8,439.6L191.0,442.9M191.0,442.9L189.2,444.7M251.0,239.1L254.1,240.1M250.9,241.8L249.5,243.9M249.5,243.9L252.9,243.9M249.5,243.9L249.4,246.6M248.9,248.1L250.9,249.7M247.4,251.4L250.4,252.0M247.4,251.4L247.1,253.4M244.0,265.8L246.6,266.6M244.0,265.8L243.7,268.0M243.7,268.0L242.4,270.4M242.4,270.4L245.3,270.4M241.5,272.2L244.6,274.0M240.9,275.1L243.9,275.1M240.9,275.1L240.2,276.6M230.9,310.9L233.7,311.8M227.5,322.8L229.2,323.4M227.5,322.8L226.9,326.1M226.2,328.4L225.4,330.0M224.4,335.2L226.1,335.4M224.4,335.2L222.9,337.2M222.9,337.2L226.1,337.8M222.3,340.1L225.2,340.2M222.3,340.1L221.5,341.7M221.5,341.7L224.3,343.4M221.5,341.7L221.0,344.1M221.0,344.1L223.6,345.5M220.7,346.4L223.3,348.5M220.7,346.4L220.5,349.1M220.5,349.1L222.9,349.7M220.5,349.1L219.2,352.2M219.2,352.2L221.5,352.1M219.2,352.2L217.8,354.2M217.8,354.2L220.1,355.2M217.8,354.2L217.5,356.1M217.5,356.1L219.7,356.6M217.5,356.1L216.7,359.4M216.7,359.4L219.3,359.0M216.7,359.4L216.6,362.0M216.6,362.0L219.0,362.0M215.8,364.2L217.4,364.4M215.8,364.2L214.5,365.9M214.5,365.9L217.7,367.2M214.5,365.9L214.9,368.7M214.9,368.7L216.4,369.8M214.9,368.7L213.3,370.6M213.3,370.6L215.6,371.7M213.3,370.6L213.0,374.1M213.0,374.1L215.7,374.3M213.0,374.1L211.8,375.4M211.8,375.4L215.2,376.8M211.8,375.4L211.8,378.6M211.8,378.6L214.1,379.4M211.8,378.6L210.8,380.0M210.8,380.0L213.3,381.8M210.8,380.0L210.1,383.0M210.1,383.0L212.0,383.7M210.1,383.0L209.0,385.4M209.0,385.4L212.0,385.8M209.0,385.4L208.9,388.1M208.9,388.1L207.7,390.3M207.7,390.3L211.0,391.6M207.7,390.3L206.8,392.8M206.8,392.8L210.2,392.9M206.8,392.8L206.9,395.4M206.9,395.4L208.4,396.1M206.9,395.4L206.0,397.5M206.0,397.5L207.8,398.3M204.8,400.0L207.3,400.4M204.8,400.0L204.7,402.2M203.5,404.3L206.2,405.6M203.5,404.3L203.7,407.8M203.7,407.8L206.1,407.8M203.7,407.8L202.2,408.9M202.2,408.9L205.4,410.3M201.6,412.0L203.8,413.2M201.6,412.0L200.6,413.7M200.6,413.7L200.1,416.4M200.1,416.4L202.3,417.7M200.1,416.4L200.1,418.8M200.1,418.8L199.6,421.9M199.6,421.9L201.8,421.9M198.5,424.7L200.7,424.9M198.5,424.7L197.7,427.1M197.7,427.1L197.4,428.6M197.4,428.6L199.5,429.9M197.4,428.6L196.2,431.7M196.2,431.7L198.3,431.4M195.7,432.9L197.9,434.7M195.7,432.9L195.3,436.1M195.3,436.1L194.3,437.8M194.3,437.8L197.2,439.3M194.3,437.8L193.4,440.4M254.3,236.6L254.1,240.1M254.1,240.1L256.1,240.8M254.1,240.1L253.3,241.6M253.3,241.6L252.9,243.9M252.9,243.9L255.5,244.8M251.3,247.0L254.6,248.3M251.3,247.0L250.9,249.7M250.9,249.7L253.9,250.6M250.4,252.0L253.4,252.1M250.4,252.0L249.8,254.0M249.8,254.0L252.0,254.4M249.1,256.3L251.2,256.7M247.8,258.9L250.3,258.8M247.5,261.4L246.6,263.8M246.6,263.8L249.7,264.9M246.6,266.6L246.0,269.2M245.3,270.4L247.7,271.5M244.6,274.0L247.0,274.0M242.6,279.9L245.3,280.7M240.8,285.4L240.5,287.8M234.3,309.8L233.7,311.8M228.6,328.8L230.3,329.1M226.1,335.4L228.8,336.3M226.1,337.8L225.2,340.2M225.2,340.2L227.2,341.0M224.3,343.4L226.1,343.2M224.3,343.4L223.6,345.5M223.6,345.5L226.6,345.8M223.6,345.5L223.3,348.5M223.3,348.5L225.6,347.9M223.3,348.5L222.9,349.7M222.9,349.7L225.0,350.3M222.9,349.7L221.5,352.1M221.5,352.1L223.4,352.8M221.5,352.1L220.1,355.2M220.1,355.2L223.5,355.9M220.1,355.2L219.7,356.6M219.7,356.6L222.8,358.4M219.3,359.0L222.3,360.2M219.3,359.0L219.0,362.0M219.0,362.0L221.8,363.1M219.0,362.0L217.4,364.4M217.4,364.4L217.7,367.2M217.7,367.2L220.4,367.5M217.7,367.2L216.4,369.8M216.4,369.8L218.6,370.3M216.4,369.8L215.6,371.7M215.6,371.7L215.7,374.3M215.7,374.3L218.0,375.1M215.7,374.3L215.2,376.8M215.2,376.8L216.6,376.7M215.2,376.8L214.1,379.4M214.1,379.4L215.6,380.2M214.1,379.4L213.3,381.8M213.3,381.8L215.3,381.8M213.3,381.8L212.0,383.7M212.0,383.7L214.9,385.0M212.0,383.7L212.0,385.8M212.0,385.8L210.7,388.1M210.7,388.1L213.9,389.3M210.7,388.1L211.0,391.6M211.0,391.6L213.0,391.6M211.0,391.6L210.2,392.9M210.2,392.9L211.8,393.9M210.2,392.9L208.4,396.1M208.4,396.1L211.7,397.2M208.4,396.1L207.8,398.3M207.8,398.3L210.9,398.5M207.8,398.3L207.3,400.4M207.3,400.4L210.2,401.5M207.3,400.4L207.5,403.0M207.5,403.0L208.9,403.8M207.5,403.0L206.2,405.6M206.2,405.6L209.0,406.7M206.2,405.6L206.1,407.8M206.1,407.8L208.5,409.2M206.1,407.8L205.4,410.3M205.4,410.3L206.6,411.2M205.4,410.3L203.8,413.2M203.8,413.2L206.7,413.2M203.8,413.2L203.8,415.7M203.8,415.7L206.4,416.3M203.8,415.7L202.3,417.7M202.3,417.7L204.7,417.7M202.2,420.0L205.2,420.2M202.2,420.0L201.8,421.9M201.8,421.9L203.3,423.4M201.8,421.9L200.7,424.9M200.7,424.9L204.0,425.0M200.7,424.9L200.0,426.8M200.0,426.8L203.0,427.9M200.0,426.8L199.5,429.9M199.5,429.9L201.4,430.7M199.5,429.9L198.3,431.4M198.3,431.4L201.4,432.5M198.3,431.4L197.9,434.7M197.9,434.7L200.9,435.6M197.9,434.7L197.8,437.2M197.8,437.2L199.2,437.3M197.8,437.2L197.2,439.3M197.2,439.3L199.6,440.2M195.7,443.5L194.5,445.7M260.8,226.2L259.5,228.8M258.5,233.4L261.1,234.6M257.1,238.2L259.8,238.8M255.2,242.4L258.0,243.7M255.5,244.8L254.6,248.3M254.6,248.3L257.1,248.7M254.6,248.3L253.9,250.6M253.9,250.6L256.2,251.2M253.4,252.1L252.0,254.4M251.2,256.7L253.7,257.5M251.2,256.7L250.3,258.8M250.3,258.8L250.3,261.8M250.3,261.8L249.7,264.9M249.7,264.9L251.3,264.8M249.2,266.9L251.7,267.6M249.2,266.9L247.7,268.5M247.7,268.5L250.6,269.2M247.7,271.5L249.9,272.2M229.9,331.2L232.2,331.5M228.8,336.3L227.8,338.4M227.8,338.4L230.9,339.5M227.8,338.4L227.2,341.0M227.2,341.0L230.2,342.1M227.2,341.0L226.1,343.2M226.1,343.2L229.5,344.2M226.1,343.2L226.6,345.8M226.6,345.8L228.4,347.0M226.6,345.8L225.6,347.9M225.6,347.9L228.0,348.8M225.6,347.9L225.0,350.3M225.0,350.3L223.4,352.8M223.4,352.8L225.8,353.3M223.4,352.8L223.5,355.9M223.5,355.9L225.4,356.2M223.5,355.9L222.8,358.4M222.8,358.4L224.4,358.4M222.3,360.2L221.8,363.1M221.8,363.1L223.3,363.2M221.8,363.1L220.3,365.4M220.3,365.4L220.4,367.5M220.4,367.5L222.5,367.9M220.4,367.5L218.6,370.3M218.6,370.3L221.5,371.2M218.6,370.3L218.7,372.7M218.7,372.7L220.4,372.9M218.7,372.7L218.0,375.1M218.0,375.1L220.8,375.2M218.0,375.1L216.6,376.7M216.6,376.7L219.5,377.6M216.6,376.7L215.6,380.2M215.6,380.2L218.8,380.2M215.6,380.2L215.3,381.8M215.3,381.8L217.7,383.0M215.3,381.8L214.9,385.0M214.9,385.0L218.0,384.7M213.7,386.7L216.0,387.1M213.9,389.3L216.5,390.4M213.9,389.3L213.0,391.6M213.0,391.6L211.8,393.9M211.8,393.9L214.5,395.1M211.8,393.9L211.7,397.2M211.7,397.2L213.4,397.2M211.7,397.2L210.9,398.5M210.9,398.5L213.2,399.9M210.9,398.5L210.2,401.5M210.2,401.5L212.2,402.2M210.2,401.5L208.9,403.8M208.9,403.8L211.9,404.3M208.9,403.8L209.0,406.7M209.0,406.7L211.7,407.2M209.0,406.7L208.5,409.2M208.5,409.2L209.9,409.2M208.5,409.2L206.6,411.2M206.6,411.2L210.2,411.8M206.6,411.2L206.7,413.2M206.7,413.2L208.9,414.1M206.7,413.2L206.4,416.3M206.4,416.3L209.0,416.2M206.4,416.3L204.7,417.7M204.7,417.7L205.2,420.2M205.2,420.2L206.6,421.3M205.2,420.2L203.3,423.4M203.3,423.4L206.5,423.1M203.3,423.4L204.0,425.0M204.0,425.0L206.3,425.7M204.0,425.0L203.0,427.9M203.0,427.9L205.4,428.2M203.0,427.9L201.4,430.7M201.4,430.7L204.1,431.2M201.4,430.7L201.4,432.5M201.4,432.5L203.2,432.8M201.4,432.5L200.9,435.6M200.9,435.6L202.5,435.7M200.9,435.6L199.2,437.3M199.2,437.3L199.6,440.2M198.2,442.4L201.1,442.8M197.9,445.1L200.7,445.4M261.8,231.6L263.3,232.5M260.3,236.7L259.8,238.8M258.8,241.2L258.0,243.7M258.0,243.7L259.9,243.8M258.0,243.7L257.0,246.3M257.0,246.3L259.5,246.4M257.0,246.3L257.1,248.7M257.1,248.7L259.2,249.1M257.1,248.7L256.2,251.2M256.2,251.2L258.2,250.5M256.2,251.2L255.9,252.8M255.9,252.8L258.1,253.5M255.9,252.8L254.5,254.9M254.5,254.9L256.8,255.4M254.5,254.9L253.7,257.5M253.7,257.5L255.9,258.4M253.7,257.5L253.4,259.9M253.4,259.9L255.2,261.2M253.4,259.9L252.2,262.2M252.2,262.2L254.8,262.7M251.7,267.6L254.3,267.8M250.6,269.2L252.9,271.2M250.6,269.2L249.9,272.2M248.5,274.8L251.4,275.8M248.5,274.8L248.0,276.4M248.0,276.4L250.3,278.0M248.3,279.8L246.7,281.9M244.1,294.2L246.0,294.4M244.1,294.2L242.4,296.3M242.4,296.3L241.5,299.1M240.5,306.6L239.2,307.6M234.4,325.6L237.5,326.1M233.3,327.6L236.3,327.7M233.6,330.0L235.1,330.6M232.2,331.5L232.3,335.0M232.3,335.0L231.5,337.0M231.5,337.0L230.9,339.5M230.9,339.5L230.2,342.1M230.2,342.1L232.9,342.3M230.2,342.1L229.5,344.2M229.5,344.2L231.4,344.8M229.5,344.2L228.4,347.0M228.4,347.0L230.6,346.7M228.4,347.0L228.0,348.8M228.0,348.8L230.0,349.5M227.0,352.2L225.8,353.3M225.8,353.3L228.3,354.3M225.8,353.3L225.4,356.2M225.4,356.2L228.6,356.6M225.4,356.2L224.4,358.4M224.4,358.4L226.9,359.8M224.4,358.4L224.0,361.0M224.0,361.0L226.5,361.3M224.0,361.0L223.3,363.2M223.3,363.2L225.4,364.5M223.3,363.2L222.1,366.4M222.1,366.4L225.8,366.7M222.5,367.9L224.9,369.2M222.5,367.9L221.5,371.2M221.5,371.2L223.5,371.1M221.5,371.2L220.4,372.9M220.4,372.9L222.9,373.7M220.4,372.9L220.8,375.2M220.8,375.2L222.1,375.5M220.8,375.2L219.5,377.6M219.5,377.6L221.3,377.8M219.5,377.6L218.8,380.2M218.8,380.2L221.5,380.6M218.8,380.2L217.7,383.0M217.7,383.0L220.3,383.2M217.7,383.0L218.0,384.7M218.0,384.7L219.9,386.1M218.0,384.7L216.0,387.1M216.0,387.1L218.6,388.5M216.5,390.4L214.8,391.9M214.8,391.9L217.5,393.3M214.8,391.9L214.5,395.1M214.5,395.1L213.4,397.2M213.4,397.2L215.6,398.1M213.4,397.2L213.2,399.9M213.2,399.9L215.8,399.9M213.2,399.9L212.2,402.2M212.2,402.2L214.6,402.6M212.2,402.2L211.9,404.3M211.9,404.3L213.7,404.7M211.9,404.3L211.7,407.2M211.7,407.2L213.5,407.6M211.7,407.2L209.9,409.2M209.9,409.2L210.2,411.8M210.2,411.8L212.6,412.6M210.2,411.8L208.9,414.1M208.9,414.1L211.8,414.6M208.9,414.1L209.0,416.2M209.0,416.2L211.0,416.9M209.0,416.2L208.0,419.5M208.0,419.5L210.4,419.0M208.0,419.5L206.6,421.3M206.6,421.3L209.3,421.3M206.6,421.3L206.5,423.1M206.5,423.1L209.3,423.9M206.5,423.1L206.3,425.7M206.3,425.7L207.3,426.6M205.4,428.2L206.9,429.4M205.4,428.2L204.1,431.2M204.1,431.2L206.1,431.0M204.1,431.2L203.2,432.8M203.2,432.8L206.0,434.4M203.2,432.8L202.5,435.7M202.5,435.7L205.3,436.2M202.5,435.7L202.0,438.5M202.0,438.5L204.6,438.5M202.1,439.9L203.5,440.5M202.1,439.9L201.1,442.8M263.4,234.9L263.2,237.0M261.2,239.0L261.9,241.7M261.9,241.7L263.6,241.7M259.9,243.8L263.1,245.2M259.5,246.4L262.0,247.3M259.5,246.4L259.2,249.1M259.2,249.1L261.2,249.2M259.2,249.1L258.2,250.5M258.2,250.5L260.5,252.5M258.2,250.5L258.1,253.5M258.1,253.5L259.6,254.1M258.1,253.5L256.8,255.4M256.8,255.4L255.9,258.4M255.9,258.4L258.3,259.5M255.2,261.2L257.6,261.1M255.2,261.2L254.8,262.7M254.8,262.7L257.1,263.4M254.8,265.4L257.2,266.0M254.8,265.4L254.3,267.8M254.3,267.8L256.4,269.1M254.3,267.8L252.9,271.2M246.0,294.4L245.1,296.3M238.7,321.4L240.5,321.7M238.7,321.4L237.2,323.8M236.3,327.7L235.1,330.6M234.5,332.2L237.9,333.5M233.5,335.3L233.0,338.0M233.0,338.0L232.3,340.6M232.3,340.6L235.7,341.6M232.9,342.3L234.8,343.7M232.9,342.3L231.4,344.8M231.4,344.8L230.6,346.7M230.6,346.7L232.9,347.9M230.6,346.7L230.0,349.5M230.0,349.5L232.3,351.0M230.0,349.5L228.8,351.8M228.8,351.8L231.3,352.1M228.8,351.8L228.3,354.3M228.3,354.3L231.3,354.8M228.3,354.3L228.6,356.6M228.6,356.6L230.7,357.1M228.6,356.6L226.9,359.8M226.9,359.8L229.8,360.7M226.9,359.8L226.5,361.3M226.5,361.3L229.6,362.4M226.5,361.3L225.4,364.5M225.4,364.5L228.7,365.3M225.4,364.5L225.8,366.7M225.8,366.7L227.1,367.3M225.8,366.7L224.9,369.2M224.9,369.2L227.4,369.2M224.9,369.2L223.5,371.1M223.5,371.1L226.2,371.5M222.9,373.7L224.8,374.8M222.9,373.7L222.1,375.5M222.1,375.5L221.3,377.8M221.3,377.8L224.1,379.0M221.3,377.8L221.5,380.6M221.5,380.6L222.9,381.9M221.5,380.6L220.3,383.2M220.3,383.2L222.5,384.4M220.3,383.2L219.9,386.1M219.9,386.1L222.7,386.2M219.9,386.1L218.6,388.5M218.6,388.5L222.1,388.8M218.6,388.5L218.6,390.5M218.6,390.5L220.8,391.3M218.6,390.5L217.5,393.3M217.5,393.3L220.1,394.4M217.5,393.3L216.2,395.9M216.2,395.9L220.1,395.9M216.2,395.9L215.6,398.1M215.6,398.1L219.0,398.5M215.6,398.1L215.8,399.9M215.8,399.9L218.3,401.5M215.8,399.9L214.6,402.6M214.6,402.6L217.9,403.5M214.6,402.6L213.7,404.7M213.7,404.7L216.5,405.8M213.7,404.7L213.5,407.6M213.5,407.6L215.1,408.5M213.5,407.6L213.1,409.8M213.1,409.8L215.5,410.3M213.1,409.8L212.6,412.6M212.6,412.6L214.5,413.4M212.6,412.6L211.8,414.6M211.8,414.6L214.2,414.9M211.8,414.6L211.0,416.9M211.0,416.9L213.4,418.2M211.0,416.9L210.4,419.0M210.4,419.0L211.8,420.0M210.4,419.0L209.3,421.3M209.3,421.3L211.9,422.7M209.3,421.3L209.3,423.9M209.3,423.9L210.6,424.5M207.3,426.6L209.9,427.1M207.3,426.6L206.9,429.4M206.9,429.4L210.0,430.2M206.9,429.4L206.1,431.0M206.1,431.0L209.7,431.9M206.1,431.0L206.0,434.4M206.0,434.4L208.2,435.0M206.0,434.4L205.3,436.2M205.3,436.2L207.7,437.5M203.5,440.5L206.5,441.9M266.0,232.6L269.0,233.6M266.0,232.6L265.5,234.8M265.5,234.8L264.6,237.1M264.6,237.1L266.6,238.3M263.6,241.7L265.4,243.5M263.1,245.2L264.8,244.8M262.0,247.3L264.2,248.3M262.0,247.3L261.2,249.2M261.2,249.2L264.3,249.9M261.2,249.2L260.5,252.5M260.5,252.5L263.5,252.3M260.5,252.5L259.6,254.1M259.6,254.1L262.8,254.8M259.6,254.1L259.8,257.5M259.8,257.5L258.3,259.5M258.3,259.5L260.7,259.2M258.3,259.5L257.6,261.1M257.6,261.1L257.1,263.4M257.1,263.4L260.2,264.6M257.1,263.4L257.2,266.0M257.2,266.0L259.0,267.2M256.4,269.1L258.3,270.1M256.4,269.1L255.5,271.0M255.5,271.0L258.2,272.0M255.5,271.0L255.0,273.7M255.0,273.7L253.8,275.5M253.8,275.5L253.4,279.1M253.4,279.1L255.2,278.9M253.4,279.1L252.3,280.9M250.3,288.4L253.2,289.5M249.9,290.3L251.7,290.9M246.6,302.9L248.4,302.3M242.1,319.1L240.5,321.7M240.5,321.7L243.7,322.3M239.8,324.3L242.7,325.4M239.4,326.8L242.1,326.8M237.8,331.4L239.8,331.8M237.8,331.4L237.9,333.5M237.9,333.5L237.1,335.7M235.6,338.7L238.1,339.6M235.6,338.7L235.7,341.6M235.7,341.6L237.0,341.4M235.7,341.6L234.8,343.7M234.8,343.7L233.4,345.7M233.4,345.7L236.6,345.9M233.4,345.7L232.9,347.9M232.9,347.9L234.9,349.2M232.9,347.9L232.3,351.0M232.3,351.0L234.7,351.8M232.3,351.0L231.3,352.1M231.3,352.1L234.0,353.4M231.3,354.8L230.7,357.1M230.7,357.1L229.8,360.7M229.8,360.7L232.7,360.5M229.8,360.7L229.6,362.4M229.6,362.4L231.3,363.0M229.6,362.4L228.7,365.3M228.7,365.3L230.6,365.6M228.7,365.3L227.1,367.3M227.1,367.3L230.5,367.9M227.1,367.3L227.4,369.2M227.4,369.2L229.4,371.0M227.4,369.2L226.2,371.5M226.2,371.5L228.3,373.1M226.2,371.5L224.8,374.8M224.8,374.8L227.5,374.6M224.8,374.8L224.5,376.4M224.5,376.4L227.0,377.4M224.5,376.4L224.1,379.0M224.1,379.0L226.9,380.5M224.1,379.0L222.9,381.9M222.9,381.9L222.5,384.4M222.5,384.4L225.9,384.5M222.5,384.4L222.7,386.2M222.7,386.2L225.1,386.9M222.7,386.2L222.1,388.8M222.1,388.8L220.8,391.3M220.8,391.3L223.1,392.2M220.8,391.3L220.1,394.4M220.1,394.4L222.6,394.9M220.1,394.4L220.1,395.9M220.1,395.9L221.3,397.3M219.0,398.5L221.0,398.6M219.0,398.5L218.3,401.5M218.3,401.5L220.2,401.2M218.3,401.5L217.9,403.5M217.9,403.5L219.3,404.1M217.9,403.5L216.5,405.8M216.5,405.8L219.4,406.2M215.1,408.5L218.6,409.1M215.5,410.3L218.1,411.9M215.5,410.3L214.5,413.4M214.5,413.4L216.8,413.1M214.5,413.4L214.2,414.9M214.2,414.9L216.2,415.7M214.2,414.9L213.4,418.2M213.4,418.2L215.9,418.5M213.4,418.2L211.8,420.0M211.8,420.0L215.4,421.0M211.8,420.0L211.9,422.7M211.9,422.7L214.5,422.9M210.6,424.5L213.5,425.4M210.6,424.5L209.9,427.1M209.9,427.1L213.4,427.9M209.9,427.1L210.0,430.2M210.0,430.2L212.1,430.1M210.0,430.2L209.7,431.9M209.7,431.9L211.0,432.1M209.7,431.9L208.2,435.0M208.2,435.0L210.2,435.0M208.2,435.0L207.7,437.5M207.7,437.5L207.7,439.0M206.5,441.9L208.0,442.9M270.2,228.4L271.8,229.4M269.0,233.6L270.7,234.0M268.0,235.3L266.6,238.3M266.1,240.9L265.4,243.5M265.4,243.5L268.4,244.4M265.4,243.5L264.8,244.8M264.2,248.3L264.3,249.9M264.3,249.9L263.5,252.3M263.5,252.3L262.8,254.8M262.8,254.8L264.6,255.3M262.8,254.8L262.0,256.9M262.0,256.9L263.8,258.4M260.7,259.2L264.0,260.4M260.7,259.2L260.6,262.7M260.6,262.7L263.2,262.9M260.6,262.7L260.2,264.6M260.2,264.6L261.7,265.9M260.2,264.6L259.0,267.2M259.0,267.2L258.3,270.1M258.3,270.1L260.7,269.9M258.3,270.1L258.2,272.0M258.2,272.0L259.8,272.3M257.5,274.6L259.7,274.9M257.5,274.6L255.6,277.1M255.6,277.1L258.1,276.9M255.2,278.9L258.4,279.8M255.2,278.9L255.1,281.5M253.2,289.5L251.7,290.9M251.5,295.9L253.6,296.1M247.1,307.3L249.7,309.1M246.3,310.4L249.2,310.4M239.8,331.8L242.5,333.2M239.8,331.8L240.5,334.0M238.6,336.4L238.1,339.6M238.1,339.6L240.6,340.5M238.1,339.6L237.0,341.4M237.0,341.4L239.8,342.1M237.1,344.3L239.3,345.1M237.1,344.3L236.6,345.9M236.6,345.9L238.1,347.1M236.6,345.9L234.9,349.2M234.9,349.2L238.0,349.7M234.9,349.2L234.7,351.8M234.7,351.8L237.9,351.7M234.7,351.8L234.0,353.4M234.0,353.4L237.2,354.0M233.2,356.3L236.5,356.5M233.2,356.3L233.0,358.6M233.0,358.6L235.8,359.7M233.0,358.6L232.7,360.5M232.7,360.5L234.6,361.3M232.7,360.5L231.3,363.0M231.3,363.0L230.6,365.6M230.6,365.6L233.6,366.5M230.6,365.6L230.5,367.9M230.5,367.9L231.8,369.0M229.4,371.0L231.0,371.3M229.4,371.0L228.3,373.1M228.3,373.1L231.1,374.0M228.3,373.1L227.5,374.6M227.5,374.6L227.0,377.4M227.0,377.4L230.3,378.4M227.0,377.4L226.9,380.5M226.9,380.5L229.7,380.3M225.8,382.9L228.7,383.0M225.8,382.9L225.9,384.5M225.9,384.5L228.1,385.8M225.9,384.5L225.1,386.9M225.1,386.9L227.2,387.5M223.7,390.0L226.5,390.7M223.7,390.0L223.1,392.2M223.1,392.2L222.6,394.9M222.6,394.9L224.7,395.8M222.6,394.9L221.3,397.3M221.3,397.3L223.6,397.7M221.3,397.3L221.0,398.6M221.0,398.6L223.4,399.7M221.0,398.6L220.2,401.2M220.2,401.2L223.2,401.9M220.2,401.2L219.3,404.1M219.3,404.1L221.5,404.9M219.3,404.1L219.4,406.2M219.4,406.2L221.1,406.3M218.6,409.1L220.0,409.5M218.6,409.1L218.1,411.9M218.1,411.9L216.8,413.1M216.8,413.1L218.9,413.8M216.8,413.1L216.2,415.7M216.2,415.7L218.7,417.0M216.2,415.7L215.9,418.5M215.9,418.5L217.9,418.5M215.9,418.5L215.4,421.0M215.4,421.0L216.7,421.2M215.4,421.0L214.5,422.9M214.5,422.9L216.4,424.3M214.5,422.9L213.5,425.4M213.5,425.4L216.4,425.9M213.5,425.4L213.4,427.9M213.4,427.9L214.6,428.6M213.4,427.9L212.1,430.1M212.1,430.1L211.0,432.1M211.0,432.1L214.4,433.2M211.0,432.1L210.2,435.0M210.2,435.0L213.5,436.0M209.6,437.5L208.7,439.7M194.1,495.0L196.2,495.6M272.4,231.5L270.7,234.0M270.7,234.0L273.8,234.5M270.2,237.2L269.8,239.5M269.0,241.9L271.5,242.5M269.0,241.9L268.4,244.4M268.4,244.4L270.8,244.1M268.4,244.4L267.4,246.0M267.4,246.0L270.4,246.9M267.4,246.0L266.5,248.1M266.5,248.1L268.8,249.4M266.5,248.1L266.1,250.3M266.1,250.3L265.3,253.4M265.3,253.4L268.0,253.4M265.3,253.4L264.6,255.3M264.6,255.3L267.7,255.9M264.6,255.3L263.8,258.4M263.8,258.4L266.6,258.6M263.8,258.4L264.0,260.4M264.0,260.4L265.6,261.3M264.0,260.4L263.2,262.9M263.2,262.9L261.7,265.9M261.7,265.9L265.1,265.7M261.7,265.9L261.5,268.0M261.5,268.0L263.3,267.9M261.5,268.0L260.7,269.9M260.7,269.9L263.7,270.5M259.8,272.3L262.4,274.0M259.8,272.3L259.7,274.9M259.7,274.9L261.4,274.9M259.7,274.9L258.1,276.9M258.1,276.9L261.6,278.2M257.0,281.9L259.0,283.4M251.5,304.1L253.3,303.9M250.7,307.0L253.2,307.7M250.7,307.0L249.7,309.1M249.2,310.4L251.5,312.1M248.1,313.9L247.0,315.8M247.0,315.8L249.8,316.7M247.0,315.8L246.3,318.6M246.3,318.6L250.0,319.1M246.3,318.6L246.3,321.2M246.3,321.2L248.9,322.0M244.1,327.8L246.5,328.7M244.1,327.8L243.8,330.2M243.8,330.2L242.5,333.2M242.5,333.2L242.5,335.1M242.5,335.1L244.5,335.0M242.5,335.1L241.3,337.5M241.3,337.5L244.0,337.8M241.3,337.5L240.6,340.5M240.6,340.5L243.4,340.3M240.6,340.5L239.8,342.1M239.8,342.1L242.8,342.4M239.8,342.1L239.3,345.1M239.3,345.1L241.8,345.3M239.3,345.1L238.1,347.1M238.1,347.1L241.5,347.5M238.1,347.1L238.0,349.7M238.0,349.7L241.0,350.2M238.0,349.7L237.9,351.7M237.9,351.7L239.7,353.3M237.9,351.7L237.2,354.0M237.2,354.0L239.0,354.8M237.2,354.0L236.5,356.5M236.5,356.5L237.8,357.6M236.5,356.5L235.8,359.7M235.8,359.7L237.1,359.8M234.6,361.3L237.1,362.8M234.6,361.3L234.0,363.4M234.0,363.4L235.6,364.8M234.0,363.4L233.6,366.5M233.6,366.5L236.1,367.3M233.6,366.5L231.8,369.0M231.8,369.0L235.3,369.0M231.0,371.3L233.9,371.4M231.0,371.3L231.1,374.0M231.1,374.0L234.0,374.2M231.1,374.0L230.1,376.5M230.1,376.5L230.3,378.4M230.3,378.4L231.5,379.3M229.7,380.3L231.7,381.6M229.7,380.3L228.7,383.0M228.7,383.0L230.2,384.0M228.7,383.0L228.1,385.8M228.1,385.8L230.6,385.8M228.1,385.8L227.2,387.5M227.2,387.5L229.6,388.7M227.2,387.5L226.5,390.7M226.5,390.7L229.0,390.7M226.5,390.7L225.6,392.2M225.6,392.2L227.9,393.4M225.6,392.2L224.7,395.8M224.7,395.8L227.6,395.9M224.7,395.8L223.6,397.7M223.6,397.7L226.4,398.2M223.4,399.7L226.0,401.0M223.4,399.7L223.2,401.9M223.2,401.9L225.3,402.9M223.2,401.9L221.5,404.9M221.5,404.9L224.2,405.6M221.5,404.9L221.1,406.3M221.1,406.3L224.0,407.4M221.1,406.3L220.0,409.5M220.0,409.5L220.0,412.4M220.0,412.4L222.7,412.5M220.0,412.4L218.9,413.8M218.9,413.8L222.2,414.6M218.9,413.8L218.7,417.0M218.7,417.0L217.9,418.5M217.9,418.5L219.9,420.0M217.9,418.5L216.7,421.2M216.7,421.2L219.9,422.8M216.7,421.2L216.4,424.3M216.4,424.3L218.2,425.1M216.4,424.3L216.4,425.9M216.4,425.9L214.6,428.6M214.6,428.6L218.0,429.9M214.6,428.6L214.2,431.4M214.2,431.4L217.3,432.0M214.2,431.4L214.4,433.2M214.4,433.2L216.1,433.7M213.5,436.0L215.9,436.3M213.5,436.0L212.6,438.9M212.6,438.9L214.2,439.0M212.0,441.0L210.3,443.7M210.3,443.7L210.5,445.3M199.9,484.2L201.8,484.1M199.9,484.2L198.2,486.5M198.2,486.5L200.9,486.5M273.9,231.6L273.8,234.5M272.2,237.7L275.5,238.5M272.9,239.2L271.5,242.5M270.8,244.1L270.4,246.9M270.4,246.9L273.0,247.5M270.4,246.9L268.8,249.4M268.8,249.4L272.3,250.2M268.4,251.8L271.0,252.1M268.4,251.8L268.0,253.4M268.0,253.4L270.2,254.6M268.0,253.4L267.7,255.9M267.7,255.9L270.0,257.9M267.7,255.9L266.6,258.6M265.7,264.2L267.5,264.8M265.7,264.2L265.1,265.7M265.1,265.7L267.2,267.4M265.1,265.7L263.3,267.9M263.3,267.9L266.4,269.5M263.3,267.9L263.7,270.5M263.7,270.5L265.0,271.4M263.7,270.5L262.4,274.0M262.4,274.0L265.2,274.0M262.4,274.0L261.4,274.9M261.4,274.9L261.6,278.2M261.6,278.2L263.4,279.3M259.0,283.4L262.2,283.9M259.6,285.8L258.2,287.9M258.1,290.6L259.6,290.9M256.4,292.1L259.3,292.9M256.4,292.1L255.9,295.0M255.9,295.0L256.1,297.4M256.1,297.4L257.7,297.6M254.2,300.2L257.2,300.5M252.0,309.8L255.3,309.7M252.0,309.8L251.5,312.1M251.5,312.1L253.5,312.0M251.2,314.3L252.4,314.8M249.8,316.7L252.3,316.5M249.8,316.7L250.0,319.1M250.0,319.1L248.9,322.0M248.3,323.9L249.8,324.2M248.3,323.9L247.6,325.9M247.6,325.9L246.5,328.7M246.5,328.7L245.6,331.1M245.6,331.1L247.9,332.0M245.2,332.9L247.7,333.4M245.2,332.9L244.5,335.0M244.0,337.8L246.4,338.2M244.0,337.8L243.4,340.3M243.4,340.3L245.3,341.5M243.4,340.3L242.8,342.4M242.8,342.4L245.2,343.7M242.8,342.4L241.8,345.3M241.8,345.3L244.3,346.1M241.8,345.3L241.5,347.5M241.5,347.5L243.6,349.2M241.5,347.5L241.0,350.2M241.0,350.2L243.2,350.4M241.0,350.2L239.7,353.3M239.7,353.3L241.6,353.7M239.7,353.3L239.0,354.8M239.0,354.8L237.8,357.6M237.8,357.6L240.4,358.2M237.1,359.8L239.9,359.7M237.1,359.8L237.1,362.8M237.1,362.8L239.7,362.8M235.6,364.8L238.3,365.9M235.6,364.8L236.1,367.3M236.1,367.3L238.6,367.7M236.1,367.3L235.3,369.0M235.3,369.0L237.3,369.5M235.3,369.0L233.9,371.4M233.9,371.4L237.0,372.5M233.9,371.4L234.0,374.2M234.0,374.2L236.3,374.7M234.0,374.2L232.4,377.1M232.4,377.1L235.3,377.9M232.4,377.1L231.5,379.3M231.5,379.3L234.3,379.8M231.5,379.3L231.7,381.6M231.7,381.6L234.2,381.8M231.7,381.6L230.2,384.0M230.2,384.0L233.0,384.3M230.2,384.0L230.6,385.8M230.6,385.8L229.6,388.7M229.6,388.7L231.0,389.6M229.6,388.7L229.0,390.7M229.0,390.7L230.3,392.1M227.9,393.4L230.1,394.4M227.9,393.4L227.6,395.9M227.6,395.9L230.0,396.9M227.6,395.9L226.4,398.2M226.4,398.2L228.3,398.8M226.4,398.2L226.0,401.0M226.0,401.0L228.4,400.8M226.0,401.0L225.3,402.9M225.3,402.9L227.2,403.1M225.3,402.9L224.2,405.6M224.2,405.6L227.1,406.6M224.2,405.6L224.0,407.4M224.0,407.4L226.0,407.9M224.0,407.4L222.4,410.7M222.4,410.7L225.8,410.8M222.4,410.7L222.7,412.5M222.7,412.5L224.5,414.0M222.7,412.5L222.2,414.6M222.2,414.6L224.7,415.3M222.2,414.6L221.1,417.6M221.1,417.6L223.4,417.8M221.1,417.6L219.9,420.0M219.9,420.0L223.2,420.6M219.9,422.8L222.7,422.7M219.9,422.8L218.2,425.1M218.2,425.1L221.5,425.3M218.2,425.1L218.5,427.7M218.5,427.7L220.3,427.6M218.5,427.7L218.0,429.9M218.0,429.9L219.5,429.5M218.0,429.9L217.3,432.0M217.3,432.0L219.6,432.4M216.1,433.7L219.0,435.0M216.1,433.7L215.9,436.3M215.9,436.3L218.1,437.2M215.9,436.3L214.2,439.0M214.2,439.0L217.2,440.4M214.2,439.0L214.5,441.2M201.8,481.9L204.4,482.2M201.8,484.1L204.5,486.0M199.3,493.9L198.4,496.4M198.4,496.4L200.8,496.8M275.5,235.2L275.5,238.5M275.5,238.5L274.6,240.0M273.1,243.2L275.9,243.2M273.4,244.6L276.3,245.4M273.4,244.6L273.0,247.5M273.0,247.5L275.4,247.9M273.0,247.5L272.3,250.2M272.3,250.2L274.2,250.8M270.2,254.6L273.4,255.6M270.2,254.6L270.0,257.9M270.0,257.9L272.0,257.9M270.0,257.9L268.9,260.1M268.9,260.1L271.7,259.7M268.9,260.1L269.0,261.8M269.0,261.8L267.5,264.8M267.5,264.8L269.4,265.4M267.2,267.4L268.7,267.9M267.2,267.4L266.4,269.5M265.0,271.4L268.1,272.6M265.0,271.4L265.2,274.0M265.2,274.0L267.4,275.3M265.2,274.0L263.8,276.7M263.8,276.7L267.1,277.6M263.8,276.7L263.4,279.3M263.4,279.3L266.1,279.2M263.4,279.3L262.6,281.6M262.2,283.9L263.9,284.1M261.2,289.0L262.9,289.3M259.6,290.9L262.3,291.5M259.6,290.9L259.3,292.9M259.3,292.9L261.6,294.6M259.3,292.9L258.4,295.4M258.4,295.4L257.7,297.6M256.0,305.6L258.7,305.7M254.6,307.7L255.3,309.7M255.3,309.7L256.2,310.6M255.3,309.7L253.5,312.0M253.5,312.0L252.4,314.8M252.4,314.8L255.6,315.4M252.3,316.5L251.8,319.4M251.8,319.4L251.8,321.7M251.8,321.7L253.8,322.6M251.8,321.7L249.8,324.2M249.8,324.2L250.1,327.3M250.1,327.3L249.2,329.3M249.2,329.3L251.1,330.5M249.2,329.3L247.9,332.0M246.4,338.2L249.2,340.0M246.4,338.2L245.3,341.5M245.3,341.5L248.2,342.4M245.3,341.5L245.2,343.7M245.2,343.7L246.6,344.4M245.2,343.7L244.3,346.1M244.3,346.1L246.3,346.9M243.6,349.2L245.4,348.9M243.6,349.2L243.2,350.4M243.2,350.4L244.6,351.2M243.2,350.4L241.6,353.7M241.6,353.7L244.4,354.5M241.9,355.3L243.8,356.5M241.9,355.3L240.4,358.2M240.4,358.2L242.9,358.2M240.4,358.2L239.9,359.7M239.9,359.7L241.8,361.5M239.9,359.7L239.7,362.8M239.7,362.8L242.3,363.7M239.7,362.8L238.3,365.9M238.3,365.9L240.9,366.1M238.6,367.7L239.8,368.8M238.6,367.7L237.3,369.5M237.3,369.5L239.1,370.9M237.3,369.5L237.0,372.5M237.0,372.5L238.8,373.7M237.0,372.5L236.3,374.7M236.3,374.7L235.3,377.9M235.3,377.9L236.9,378.5M235.3,377.9L234.3,379.8M234.3,379.8L237.3,380.0M234.3,379.8L234.2,381.8M234.2,381.8L236.6,383.5M234.2,381.8L233.0,384.3M233.0,384.3L235.9,385.8M233.0,384.3L232.6,386.8M232.6,386.8L235.1,387.7M232.6,386.8L231.0,389.6M231.0,389.6L234.3,390.1M231.0,389.6L230.3,392.1M230.3,392.1L234.1,392.7M230.3,392.1L230.1,394.4M230.1,394.4L232.2,394.3M230.1,394.4L230.0,396.9M230.0,396.9L231.7,396.7M230.0,396.9L228.3,398.8M228.3,398.8L231.7,399.4M228.3,398.8L228.4,400.8M228.4,400.8L230.6,401.6M228.4,400.8L227.2,403.1M227.2,403.1L230.6,403.9M227.2,403.1L227.1,406.6M227.1,406.6L228.6,407.0M227.1,406.6L226.0,407.9M226.0,407.9L228.6,409.9M225.8,410.8L224.5,414.0M224.5,414.0L227.2,413.4M224.7,415.3L227.2,416.5M224.7,415.3L223.4,417.8M223.4,417.8L225.5,418.9M223.4,417.8L223.2,420.6M223.2,420.6L224.8,420.9M223.2,420.6L222.7,422.7M222.7,422.7L224.2,423.1M222.7,422.7L221.5,425.3M221.5,425.3L220.3,427.6M220.3,427.6L223.1,428.1M220.3,427.6L219.5,429.5M219.5,429.5L222.2,430.3M219.5,429.5L219.6,432.4M219.6,432.4L222.3,433.1M219.0,435.0L221.4,435.7M204.5,486.0L206.8,485.9M204.5,486.0L203.9,488.1M201.3,492.8L205.0,493.3M201.3,492.8L200.9,494.6M277.4,240.5L275.9,243.2M275.9,243.2L276.3,245.4M276.3,245.4L278.6,246.3M275.4,247.9L274.2,250.8M273.3,252.8L276.1,253.8M273.4,255.6L275.7,256.2M273.4,255.6L272.0,257.9M272.0,257.9L274.3,258.0M272.0,257.9L271.7,259.7M271.7,259.7L274.1,261.3M271.2,263.0L273.0,263.9M271.2,263.0L269.4,265.4M269.4,265.4L272.3,266.0M269.4,265.4L268.7,267.9M268.7,267.9L271.9,267.5M268.7,267.9L268.6,269.2M268.6,269.2L271.7,270.1M268.1,272.6L270.4,273.6M268.1,272.6L267.4,275.3M267.4,275.3L270.1,275.6M267.4,275.3L267.1,277.6M266.1,279.2L267.9,279.3M266.1,279.2L265.3,282.3M265.3,282.3L268.2,282.0M265.3,282.3L263.9,284.1M263.9,284.1L266.9,285.0M264.2,286.6L262.9,289.3M262.9,289.3L265.0,289.3M262.9,289.3L262.3,291.5M262.3,291.5L261.6,294.6M261.6,294.6L264.1,294.7M261.2,296.5L263.6,297.3M260.4,298.1L262.7,300.0M258.7,305.7L260.6,305.8M258.7,305.7L257.7,307.8M257.7,307.8L259.9,308.7M257.7,307.8L256.2,310.6M256.2,310.6L259.8,312.0M256.0,312.7L255.6,315.4M255.6,315.4L257.3,316.4M255.4,317.9L257.2,318.0M255.4,317.9L254.9,320.1M254.9,320.1L253.8,322.6M253.8,322.6L252.7,325.5M252.7,325.5L255.4,325.7M252.7,325.5L252.2,328.0M252.2,328.0L254.4,327.7M251.1,330.5L253.7,330.7M250.0,332.6L253.2,333.1M250.0,332.6L250.4,334.4M250.4,334.4L249.1,336.5M249.1,336.5L251.2,337.1M249.2,340.0L248.2,342.4M248.2,342.4L250.8,342.7M248.2,342.4L246.6,344.4M246.6,344.4L246.3,346.9M246.3,346.9L249.3,348.2M246.3,346.9L245.4,348.9M245.4,348.9L247.7,350.4M245.4,348.9L244.6,351.2M244.6,351.2L246.9,352.5M244.6,351.2L244.4,354.5M244.4,354.5L246.7,355.1M243.8,356.5L245.8,357.0M243.8,356.5L242.9,358.2M242.9,358.2L245.3,359.5M242.9,358.2L241.8,361.5M241.8,361.5L244.8,361.1M241.8,361.5L242.3,363.7M242.3,363.7L244.3,364.1M242.3,363.7L240.9,366.1M240.9,366.1L244.2,366.6M240.9,366.1L239.8,368.8M239.8,368.8L242.5,369.5M239.1,370.9L241.8,371.1M239.1,370.9L238.8,373.7M238.8,373.7L241.3,373.3M238.8,373.7L238.2,375.9M238.2,375.9L240.7,375.8M238.2,375.9L236.9,378.5M236.9,378.5L239.7,379.2M237.3,380.0L239.4,380.4M237.3,380.0L236.6,383.5M236.6,383.5L235.9,385.8M235.9,385.8L238.3,386.2M235.9,385.8L235.1,387.7M235.1,387.7L238.0,388.2M234.3,390.1L236.2,391.2M234.3,390.1L234.1,392.7M234.1,392.7L236.0,392.5M234.1,392.7L232.2,394.3M232.2,394.3L234.6,394.9M232.2,394.3L231.7,396.7M231.7,396.7L235.0,398.4M231.7,399.4L234.1,400.4M231.7,399.4L230.6,401.6M230.6,401.6L232.8,402.1M230.6,401.6L230.6,403.9M230.6,403.9L231.8,404.8M230.6,403.9L228.6,407.0M228.6,407.0L228.6,409.9M228.6,409.9L231.2,410.0M228.6,409.9L227.9,410.9M227.9,410.9L230.2,412.8M227.9,410.9L227.2,413.4M227.2,413.4L230.3,414.3M227.2,416.5L228.3,417.6M227.2,416.5L225.5,418.9M225.5,418.9L228.6,418.9M225.5,418.9L224.8,420.9M224.8,420.9L224.2,423.1M224.2,423.1L227.2,424.3M224.2,423.1L223.6,426.6M223.6,426.6L225.8,427.0M223.1,428.1L226.0,429.6M223.1,428.1L222.2,430.3M222.2,430.3L224.7,431.7M222.2,430.3L222.3,433.1M222.3,433.1L224.5,434.0M222.3,433.1L221.4,435.7M221.4,435.7L223.4,436.8M221.4,435.7L219.5,438.4M219.5,438.4L219.5,440.3M219.5,440.3L222.0,440.9M206.5,488.4L205.6,491.0M205.6,491.0L207.8,492.1M205.6,491.0L205.0,493.3M205.0,493.3L206.4,494.0M204.3,495.8L205.7,495.7M204.3,495.8L203.6,498.3M203.6,498.3L206.1,498.4M201.3,502.3L201.3,504.9M200.2,507.8L202.8,509.0M280.4,236.3L283.3,237.6M278.2,244.3L281.3,245.4M277.8,248.8L279.6,249.3M277.8,248.8L276.6,251.0M276.6,251.0L279.3,251.4M276.1,253.8L278.0,254.1M276.1,253.8L275.7,256.2M275.7,256.2L277.2,256.8M274.3,258.0L274.1,261.3M273.0,263.9L272.3,266.0M272.3,266.0L275.0,266.7M272.3,266.0L271.9,267.5M271.9,267.5L274.6,269.2M271.9,267.5L271.7,270.1M271.7,270.1L273.8,271.6M271.7,270.1L270.4,273.6M270.4,273.6L270.1,275.6M270.1,275.6L272.2,276.8M270.1,275.6L269.4,278.3M269.4,278.3L267.9,279.3M267.9,279.3L271.2,280.9M267.9,279.3L268.2,282.0M268.2,282.0L269.8,283.8M268.2,282.0L266.9,285.0M266.9,285.0L269.2,285.7M266.9,285.0L266.3,287.8M266.3,287.8L268.8,288.4M265.0,289.3L268.1,290.1M264.5,291.3L267.2,292.6M264.5,291.3L264.1,294.7M264.1,294.7L263.6,297.3M263.6,297.3L266.4,298.3M263.6,297.3L262.7,300.0M262.7,300.0L262.3,302.1M262.0,304.3L263.8,304.7M262.0,304.3L260.6,305.8M260.6,305.8L263.5,307.1M260.6,305.8L259.9,308.7M259.8,312.0L261.1,312.4M259.8,312.0L258.8,314.3M258.8,314.3L261.5,314.8M256.3,320.2L258.9,321.0M256.3,320.2L255.7,323.9M255.7,323.9L258.3,324.6M255.7,323.9L255.4,325.7M255.4,325.7L258.0,326.3M254.4,327.7L257.0,328.7M253.7,330.7L255.6,331.1M253.7,330.7L253.2,333.1M253.2,333.1L255.0,334.2M253.2,333.1L252.4,334.8M252.4,334.8L255.0,336.1M251.2,337.1L254.2,339.0M251.2,337.1L251.2,340.1M251.2,340.1L253.6,340.6M251.2,340.1L250.8,342.7M250.8,342.7L253.5,343.3M250.8,342.7L249.7,345.4M249.7,345.4L252.7,345.4M249.7,345.4L249.3,348.2M249.3,348.2L251.1,348.7M249.3,348.2L247.7,350.4M247.7,350.4L250.2,350.6M247.7,350.4L246.9,352.5M246.9,352.5L250.4,352.5M246.9,352.5L246.7,355.1M246.7,355.1L249.9,354.9M246.7,355.1L245.8,357.0M245.8,357.0L247.9,358.1M245.8,357.0L245.3,359.5M245.3,359.5L248.1,359.7M245.3,359.5L244.8,361.1M244.8,361.1L247.2,362.0M244.8,361.1L244.3,364.1M244.3,364.1L247.0,365.8M244.3,364.1L244.2,366.6M244.2,366.6L246.3,367.8M244.2,366.6L242.5,369.5M242.5,369.5L244.9,369.6M242.5,369.5L241.8,371.1M241.8,371.1L244.7,372.3M241.8,371.1L241.3,373.3M241.3,373.3L244.6,374.1M241.3,373.3L240.7,375.8M240.7,375.8L243.5,377.5M240.7,375.8L239.7,379.2M239.7,379.2L241.9,379.9M239.7,379.2L239.4,380.4M239.4,380.4L241.3,381.3M239.4,380.4L238.6,383.9M238.6,383.9L241.3,384.9M238.6,383.9L238.3,386.2M238.3,386.2L239.6,386.8M238.3,386.2L238.0,388.2M238.0,388.2L239.3,388.2M238.0,388.2L236.2,391.2M236.2,391.2L238.7,391.9M236.2,391.2L236.0,392.5M236.0,392.5L237.7,394.2M236.0,392.5L234.6,394.9M234.6,394.9L238.0,396.9M234.6,394.9L235.0,398.4M235.0,398.4L236.3,398.1M235.0,398.4L234.1,400.4M234.1,400.4L235.7,400.9M234.1,400.4L232.8,402.1M232.8,402.1L235.3,402.8M231.8,404.8L234.7,406.3M231.8,404.8L231.6,407.4M231.6,407.4L231.2,410.0M231.2,410.0L232.7,410.8M231.2,410.0L230.2,412.8M230.2,412.8L232.6,413.0M230.2,412.8L230.3,414.3M230.3,414.3L231.7,415.7M230.3,414.3L228.3,417.6M228.3,417.6L231.0,418.3M228.3,417.6L228.6,418.9M228.6,418.9L231.1,419.8M228.6,418.9L228.3,421.8M228.3,421.8L227.2,424.3M227.2,424.3L229.8,424.7M227.2,424.3L225.8,427.0M225.8,427.0L228.4,427.1M226.0,429.6L227.4,429.7M226.0,429.6L224.7,431.7M224.7,431.7L224.5,434.0M224.5,434.0L226.1,433.9M223.4,436.8L225.1,437.3M223.4,436.8L222.5,438.7M222.0,440.9L223.8,441.4M207.8,492.1L209.9,492.4M206.4,494.0L209.5,494.8M206.4,494.0L205.7,495.7M205.7,495.7L209.2,496.6M281.3,245.4L280.4,247.2M280.4,247.2L282.2,248.2M279.6,249.3L279.3,251.4M279.3,251.4L278.0,254.1M277.3,259.6L275.8,260.9M275.8,260.9L276.0,264.7M276.0,264.7L278.4,264.3M276.0,264.7L275.0,266.7M275.0,266.7L274.6,269.2M274.6,269.2L276.5,268.9M273.8,271.6L275.2,271.9M272.4,273.9L272.2,276.8M272.2,276.8L274.9,276.7M272.2,276.8L271.3,277.8M271.2,280.9L273.6,281.4M269.8,283.8L269.2,285.7M268.8,288.4L271.5,289.1M268.1,290.1L267.2,292.6M267.2,292.6L269.7,294.2M266.4,298.3L264.5,300.5M264.2,301.8L263.8,304.7M263.8,304.7L265.8,305.0M263.8,304.7L263.5,307.1M262.5,309.3L265.5,310.1M262.5,309.3L261.1,312.4M261.1,312.4L264.6,312.5M261.5,314.8L260.8,317.3M260.8,317.3L259.4,319.4M259.4,319.4L261.6,319.3M258.9,321.0L261.7,322.0M258.9,321.0L258.3,324.6M258.3,324.6L260.2,324.2M258.0,326.3L259.7,327.8M258.0,326.3L257.0,328.7M257.0,328.7L258.8,329.2M257.0,328.7L255.6,331.1M255.6,331.1L257.9,331.8M255.6,331.1L255.0,334.2M255.0,334.2L258.0,334.2M255.0,334.2L255.0,336.1M255.0,336.1L256.4,337.0M255.0,336.1L254.2,339.0M254.2,339.0L257.3,338.8M254.2,339.0L253.6,340.6M253.6,340.6L255.3,341.3M253.6,340.6L253.5,343.3M253.5,343.3L255.3,344.8M253.5,343.3L252.7,345.4M252.7,345.4L253.9,347.0M252.7,345.4L251.1,348.7M251.1,348.7L253.8,349.2M251.1,348.7L250.2,350.6M250.2,350.6L253.2,351.4M250.2,350.6L250.4,352.5M250.4,352.5L252.9,353.6M250.4,352.5L249.9,354.9M249.9,354.9L252.3,356.2M249.9,354.9L247.9,358.1M247.9,358.1L251.7,358.1M247.9,358.1L248.1,359.7M248.1,359.7L250.4,360.4M248.1,359.7L247.2,362.0M247.2,362.0L250.2,362.7M247.2,362.0L247.0,365.8M247.0,365.8L248.7,366.2M247.0,365.8L246.3,367.8M246.3,367.8L248.1,368.0M246.3,367.8L244.9,369.6M244.9,369.6L244.7,372.3M244.7,372.3L247.5,372.6M244.7,372.3L244.6,374.1M244.6,374.1L246.2,375.9M244.6,374.1L243.5,377.5M243.5,377.5L245.1,377.9M243.5,377.5L241.9,379.9M241.9,379.9L245.0,380.1M241.9,379.9L241.3,381.3M241.3,381.3L241.3,384.9M241.3,384.9L243.4,384.9M241.3,384.9L239.6,386.8M239.6,386.8L243.1,387.6M239.3,388.2L241.6,390.2M239.3,388.2L238.7,391.9M238.7,391.9L237.7,394.2M237.7,394.2L240.3,394.6M237.7,394.2L238.0,396.9M238.0,396.9L236.3,398.1M236.3,398.1L239.8,399.1M236.3,398.1L235.7,400.9M235.7,400.9L238.2,401.6M235.7,400.9L235.3,402.8M235.3,402.8L237.5,404.4M235.3,402.8L234.7,406.3M234.7,406.3L237.0,405.8M234.7,406.3L234.5,408.1M234.5,408.1L236.3,409.2M234.5,408.1L232.7,410.8M232.7,410.8L236.4,411.1M232.7,410.8L232.6,413.0M232.6,413.0L235.2,413.3M232.6,413.0L231.7,415.7M231.7,415.7L234.3,415.7M231.7,415.7L231.0,418.3M231.0,418.3L234.1,418.9M231.0,418.3L231.1,419.8M231.1,419.8L233.2,420.8M231.1,419.8L229.9,421.9M229.9,421.9L232.3,423.3M229.9,421.9L229.8,424.7M229.8,424.7L231.9,425.2M229.8,424.7L228.4,427.1M228.4,427.1L230.5,427.4M228.4,427.1L227.4,429.7M227.4,429.7L230.9,430.4M227.4,429.7L226.9,432.5M226.9,432.5L229.8,432.6M226.9,432.5L226.1,433.9M226.1,433.9L228.5,434.8M226.1,433.9L225.1,437.3M225.1,437.3L227.9,438.2M225.1,437.3L225.0,438.7M225.0,438.7L223.8,441.4M223.8,441.4L223.4,444.3M211.9,485.1L211.9,487.0M211.9,487.0L213.3,488.5M211.9,487.0L211.0,490.6M211.0,490.6L209.9,492.4M209.9,492.4L212.6,493.4M209.9,492.4L209.5,494.8M209.2,496.6L210.6,498.4M209.2,496.6L207.1,499.7M207.1,499.7L210.3,500.4M282.2,248.2L282.3,250.4M282.3,250.4L281.5,253.3M279.6,260.3L279.2,261.9M278.4,264.3L277.1,267.0M277.1,267.0L279.9,267.7M277.1,267.0L276.5,268.9M276.5,268.9L279.0,270.9M275.2,271.9L279.0,272.2M274.9,276.7L274.0,278.5M274.0,278.5L276.9,279.9M274.0,278.5L273.6,281.4M273.6,281.4L275.4,282.9M273.6,281.4L272.9,283.4M272.1,285.9L274.6,287.8M271.5,289.1L269.7,291.1M269.7,291.1L269.7,294.2M269.7,294.2L272.7,293.8M269.7,294.2L268.8,295.8M268.8,295.8L270.9,296.8M268.8,295.8L268.8,298.2M268.8,298.2L271.1,299.3M268.8,298.2L268.0,300.7M268.0,300.7L270.2,301.5M266.6,303.4L265.8,305.0M265.8,305.0L269.2,306.0M265.8,305.0L266.1,308.5M266.1,308.5L267.6,307.9M266.1,308.5L265.5,310.1M265.5,310.1L264.6,312.5M263.9,315.5L265.8,315.8M263.5,317.1L265.5,319.1M261.6,319.3L261.7,322.0M261.7,322.0L263.5,323.2M261.7,322.0L260.2,324.2M260.2,324.2L263.0,325.2M259.7,327.8L262.7,327.8M259.7,327.8L258.8,329.2M258.8,329.2L261.1,330.8M258.8,329.2L257.9,331.8M257.9,331.8L261.7,332.2M257.9,331.8L258.0,334.2M258.0,334.2L260.9,334.9M258.0,334.2L256.4,337.0M256.4,337.0L259.1,336.6M256.4,337.0L257.3,338.8M257.3,338.8L258.4,340.4M255.3,341.3L257.9,342.0M255.3,341.3L255.3,344.8M255.3,344.8L257.4,344.7M255.3,344.8L253.9,347.0M253.9,347.0L257.2,347.7M253.9,347.0L253.8,349.2M253.8,349.2L253.2,351.4M252.9,353.6L254.4,354.1M252.9,353.6L252.3,356.2M252.3,356.2L254.5,357.3M252.3,356.2L251.7,358.1M251.7,358.1L253.0,358.3M250.4,360.4L250.2,362.7M250.2,362.7L248.7,366.2M248.7,366.2L251.8,366.2M248.7,366.2L248.1,368.0M248.1,368.0L250.4,368.4M248.1,368.0L247.8,369.9M247.8,369.9L250.6,370.8M247.8,369.9L247.5,372.6M247.5,372.6L248.9,373.5M247.5,372.6L246.2,375.9M245.1,377.9L247.1,378.7M245.1,377.9L245.0,380.1M245.0,380.1L246.6,380.4M245.0,380.1L244.5,382.6M244.5,382.6L246.7,382.5M244.5,382.6L243.4,384.9M243.4,384.9L246.0,386.0M243.4,384.9L243.1,387.6M243.1,387.6L245.0,387.5M243.1,387.6L241.6,390.2M241.6,390.2L245.1,390.5M241.6,390.2L241.3,391.3M241.3,391.3L243.5,393.3M241.3,391.3L240.3,394.6M240.3,394.6L243.3,395.0M240.3,394.6L239.4,397.0M239.4,397.0L242.3,398.0M239.8,399.1L241.2,400.1M239.8,399.1L238.2,401.6M238.2,401.6L240.4,402.3M238.2,401.6L237.5,404.4M237.5,404.4L239.9,405.0M237.5,404.4L237.0,405.8M237.0,405.8L239.5,407.7M237.0,405.8L236.3,409.2M236.3,409.2L239.3,410.0M236.3,409.2L236.4,411.1M236.4,411.1L237.4,412.2M236.4,411.1L235.2,413.3M235.2,413.3L237.8,415.1M234.3,415.7L237.5,417.0M234.3,415.7L234.1,418.9M234.1,418.9L235.9,419.3M234.1,418.9L233.2,420.8M233.2,420.8L232.3,423.3M232.3,423.3L234.3,423.9M232.3,423.3L231.9,425.2M231.9,425.2L234.3,426.6M231.9,425.2L230.5,427.4M230.5,427.4L230.9,430.4M230.9,430.4L233.1,430.6M230.9,430.4L229.8,432.6M229.8,432.6L231.3,433.8M229.8,432.6L228.5,434.8M228.5,434.8L232.1,435.7M228.5,434.8L227.9,438.2M227.9,438.2L227.5,439.7M227.5,439.7L230.0,441.1M226.0,445.2L229.1,445.2M214.3,486.0L216.9,485.8M211.7,496.0L210.6,498.4M210.6,498.4L213.6,498.3M210.3,500.4L212.9,501.0M208.7,507.6L211.1,508.4M284.7,248.1L284.9,251.0M280.5,262.5L280.4,265.5M279.0,270.9L279.0,272.2M279.0,272.2L277.5,274.3M276.5,277.8L278.7,277.9M276.5,277.8L276.9,279.9M275.4,282.9L278.0,283.5M274.2,284.5L274.6,287.8M274.6,287.8L275.8,288.1M274.6,287.8L273.2,289.5M273.2,289.5L273.2,292.2M273.2,292.2L272.7,293.8M272.7,293.8L275.2,294.5M272.7,293.8L270.9,296.8M270.9,296.8L271.1,299.3M271.1,299.3L273.0,299.1M271.1,299.3L270.2,301.5M270.2,301.5L272.6,302.3M270.2,301.5L269.6,304.5M269.2,306.0L270.6,307.1M269.2,306.0L267.6,307.9M267.6,307.9L269.6,309.7M267.6,307.9L267.4,310.8M267.4,310.8L266.5,314.2M266.5,314.2L268.3,314.5M265.8,315.8L267.9,316.3M265.8,315.8L265.5,319.1M265.5,319.1L264.3,320.4M264.3,320.4L266.5,321.2M264.3,320.4L263.5,323.2M263.5,323.2L266.1,324.1M263.5,323.2L263.0,325.2M263.0,325.2L264.8,326.0M263.0,325.2L262.7,327.8M262.7,327.8L265.3,328.1M262.7,327.8L261.1,330.8M261.1,330.8L261.7,332.2M261.7,332.2L263.7,333.8M261.7,332.2L260.9,334.9M260.9,334.9L262.9,336.3M260.9,334.9L259.1,336.6M259.1,336.6L262.2,338.7M259.1,336.6L258.4,340.4M258.4,340.4L261.5,340.8M258.4,340.4L257.9,342.0M257.9,342.0L260.6,343.1M257.9,342.0L257.4,344.7M257.4,344.7L259.8,345.4M257.4,344.7L257.2,347.7M257.2,347.7L258.6,347.7M257.2,347.7L256.8,349.2M256.8,349.2L258.5,350.9M256.8,349.2L255.8,351.8M255.8,351.8L257.5,351.9M254.4,354.1L257.0,355.6M254.4,354.1L254.5,357.3M254.5,357.3L256.0,357.8M254.5,357.3L253.0,358.3M253.0,358.3L255.5,360.4M253.0,358.3L252.8,361.0M252.8,361.0L254.7,362.8M252.8,361.0L251.9,363.2M251.9,363.2L254.7,364.1M251.8,366.2L253.5,367.3M250.4,368.4L253.3,370.2M250.4,368.4L250.6,370.8M250.6,370.8L251.9,372.0M250.6,370.8L248.9,373.5M248.9,373.5L251.5,373.5M248.9,373.5L248.3,375.6M248.3,375.6L251.0,376.5M248.3,375.6L247.1,378.7M247.1,378.7L250.3,378.5M247.1,378.7L246.6,380.4M246.6,380.4L246.7,382.5M246.7,382.5L249.1,384.4M246.0,386.0L247.6,385.9M246.0,386.0L245.0,387.5M245.0,387.5L247.0,388.8M245.0,387.5L245.1,390.5M245.1,390.5L247.5,390.7M245.1,390.5L243.5,393.3M243.5,393.3L245.5,393.9M243.5,393.3L243.3,395.0M243.3,395.0L246.0,395.4M243.3,395.0L242.3,398.0M242.3,398.0L245.3,398.6M242.3,398.0L241.2,400.1M241.2,400.1L244.3,401.0M241.2,400.1L240.4,402.3M240.4,402.3L239.9,405.0M239.9,405.0L242.7,404.8M239.9,405.0L239.5,407.7M239.5,407.7L242.5,408.0M239.5,407.7L239.3,410.0M239.3,410.0L241.9,410.6M239.3,410.0L237.4,412.2M237.4,412.2L240.9,413.1M237.4,412.2L237.8,415.1M237.8,415.1L237.5,417.0M237.5,417.0L239.7,417.4M237.5,417.0L235.9,419.3M235.9,419.3L238.8,420.5M235.9,419.3L234.8,421.8M234.8,421.8L238.3,422.2M234.8,421.8L234.3,423.9M234.3,423.9L237.0,425.0M234.3,426.6L236.8,427.4M234.3,426.6L233.0,429.0M233.0,429.0L236.3,429.8M233.0,429.0L233.1,430.6M233.1,430.6L234.9,432.0M233.1,430.6L231.3,433.8M231.3,433.8L234.9,435.0M231.3,433.8L232.1,435.7M232.1,435.7L233.7,436.1M232.1,435.7L230.2,438.5M230.0,441.1L232.9,441.8M212.9,501.0L212.2,502.6M284.4,261.4L286.2,261.6M283.6,263.5L282.4,265.4M281.5,268.8L284.2,269.7M281.3,271.5L283.9,272.2M278.7,277.9L281.4,278.2M278.6,280.6L278.0,283.5M278.0,283.5L277.7,284.9M277.7,284.9L279.3,286.4M275.8,288.1L279.0,288.7M275.7,290.4L278.5,290.7M275.7,290.4L275.1,292.0M275.1,292.0L277.6,293.1M275.1,292.0L275.2,294.5M274.0,297.6L276.5,297.5M274.0,297.6L273.0,299.1M272.6,302.3L275.2,303.4M272.6,302.3L271.1,304.9M271.1,304.9L273.7,305.1M270.6,307.1L273.4,307.4M270.6,307.1L269.6,309.7M269.6,309.7L273.4,310.1M269.6,309.7L270.2,311.3M270.2,311.3L272.4,312.5M270.2,311.3L268.3,314.5M268.3,314.5L271.4,314.7M267.9,316.3L271.1,317.9M267.9,316.3L267.8,319.4M267.8,319.4L270.2,319.4M266.5,321.2L269.7,322.7M266.5,321.2L266.1,324.1M266.1,324.1L268.8,324.5M266.1,324.1L264.8,326.0M264.8,326.0L268.7,326.4M264.8,326.0L265.3,328.1M265.3,328.1L266.5,329.2M265.3,328.1L264.2,330.7M264.2,330.7L267.0,331.3M264.2,330.7L263.7,333.8M263.7,333.8L266.6,333.9M263.7,333.8L262.9,336.3M262.9,336.3L265.1,335.9M262.9,336.3L262.2,338.7M262.2,338.7L264.7,338.7M262.2,338.7L261.5,340.8M261.5,340.8L264.1,341.1M260.6,343.1L263.5,343.6M260.6,343.1L259.8,345.4M259.8,345.4L262.8,345.7M259.8,345.4L258.6,347.7M258.6,347.7L261.8,348.3M258.6,347.7L258.5,350.9M258.5,350.9L261.0,350.4M258.5,350.9L257.5,351.9M257.5,351.9L260.4,352.8M257.5,351.9L257.0,355.6M257.0,355.6L259.2,356.1M257.0,355.6L256.0,357.8M256.0,357.8L258.5,357.7M256.0,357.8L255.5,360.4M255.5,360.4L258.6,360.4M255.5,360.4L254.7,362.8M254.7,362.8L257.4,362.9M254.7,362.8L254.7,364.1M254.7,364.1L256.4,364.9M254.7,364.1L253.5,367.3M253.5,367.3L255.8,368.0M253.5,367.3L253.3,370.2M253.3,370.2L254.9,370.6M251.9,372.0L255.1,372.2M251.9,372.0L251.5,373.5M251.5,373.5L253.7,375.3M251.0,376.5L252.9,377.2M250.3,378.5L252.6,379.3M250.3,378.5L249.2,381.5M249.2,381.5L252.4,382.1M249.2,381.5L249.1,384.4M249.1,384.4L247.6,385.9M247.6,385.9L250.7,387.6M247.6,385.9L247.0,388.8M247.0,388.8L250.4,389.7M247.0,388.8L247.5,390.7M247.5,390.7L245.5,393.9M245.5,393.9L248.5,393.6M245.5,393.9L246.0,395.4M246.0,395.4L247.6,396.6M245.3,398.6L246.7,399.0M245.3,398.6L244.3,401.0M244.3,401.0L246.6,402.0M243.6,403.7L246.2,403.6M243.6,403.7L242.7,404.8M242.7,404.8L245.2,406.8M242.7,404.8L242.5,408.0M242.5,408.0L244.3,408.3M242.5,408.0L241.9,410.6M241.9,410.6L244.4,411.0M241.9,410.6L240.9,413.1M240.9,413.1L243.4,413.0M240.9,413.1L239.4,414.4M239.4,414.4L242.0,416.2M239.7,417.4L241.1,417.7M239.7,417.4L238.8,420.5M238.8,420.5L241.4,420.1M238.8,420.5L238.3,422.2M238.3,422.2L239.7,422.9M238.3,422.2L237.0,425.0M237.0,425.0L239.3,425.8M237.0,425.0L236.8,427.4M236.8,427.4L239.4,427.9M236.8,427.4L236.3,429.8M236.3,429.8L237.4,430.3M236.3,429.8L234.9,432.0M234.9,432.0L238.0,432.5M234.9,435.0L236.3,434.6M234.9,435.0L233.7,436.1M233.7,436.1L235.9,436.7M233.7,436.1L233.8,438.8M233.8,438.8L235.9,440.3M233.8,438.8L232.9,441.8M232.9,441.8L231.1,443.7M231.1,443.7L233.8,445.2M216.6,494.6L219.0,495.6M214.6,501.5L217.9,502.7M288.4,256.7L290.1,257.2M287.0,259.3L290.3,259.8M287.0,259.3L286.2,261.6M283.9,272.2L286.6,271.9M283.9,272.2L282.8,274.6M282.8,274.6L285.8,274.9M282.2,276.5L281.4,278.2M281.5,281.1L279.8,283.7M279.8,283.7L282.5,284.0M279.8,283.7L279.3,286.4M279.3,286.4L279.0,288.7M279.0,288.7L278.5,290.7M278.5,290.7L281.2,291.9M278.5,290.7L277.6,293.1M277.1,296.1L279.8,296.8M276.5,297.5L278.8,298.1M276.5,297.5L275.9,300.6M275.9,300.6L277.5,301.6M275.2,303.4L277.3,303.8M273.7,305.1L276.2,305.2M273.7,305.1L273.4,307.4M273.4,307.4L273.4,310.1M273.4,310.1L275.5,310.3M273.4,310.1L272.4,312.5M272.4,312.5L274.5,313.6M272.4,312.5L271.4,314.7M271.4,314.7L273.4,315.4M271.4,314.7L271.1,317.9M271.1,317.9L272.4,317.7M271.1,317.9L270.2,319.4M270.2,319.4L272.9,321.0M270.2,319.4L269.7,322.7M269.7,322.7L272.4,322.2M268.8,324.5L271.2,325.0M268.8,324.5L268.7,326.4M268.7,326.4L270.5,327.4M268.7,326.4L266.5,329.2M266.5,329.2L267.0,331.3M267.0,331.3L268.9,332.8M266.6,333.9L268.2,334.8M266.6,333.9L265.1,335.9M265.1,335.9L267.2,336.7M265.1,335.9L264.7,338.7M264.7,338.7L266.8,338.8M264.7,338.7L264.1,341.1M264.1,341.1L266.6,341.7M263.5,343.6L265.4,344.6M263.5,343.6L262.8,345.7M262.8,345.7L264.3,346.8M262.8,345.7L261.8,348.3M261.8,348.3L263.3,349.3M261.8,348.3L261.0,350.4M261.0,350.4L263.6,351.1M260.4,352.8L262.5,353.7M259.2,356.1L258.5,357.7M258.5,357.7L261.0,358.3M258.6,360.4L260.4,361.7M258.6,360.4L257.4,362.9M257.4,362.9L259.2,363.9M257.4,362.9L256.4,364.9M256.4,364.9L259.7,365.8M256.4,364.9L255.8,368.0M255.8,368.0L258.3,368.7M255.8,368.0L254.9,370.6M254.9,370.6L257.8,371.2M254.9,370.6L255.1,372.2M255.1,372.2L256.5,373.2M255.1,372.2L253.7,375.3M253.7,375.3L252.9,377.2M252.9,377.2L256.0,377.7M252.9,377.2L252.6,379.3M252.6,379.3L255.5,380.3M252.6,379.3L252.4,382.1M252.4,382.1L253.9,382.8M252.4,382.1L250.7,384.3M250.7,384.3L253.5,385.4M250.7,384.3L250.7,387.6M250.7,387.6L253.3,387.6M250.7,387.6L250.4,389.7M250.4,389.7L252.0,389.6M249.5,392.4L251.7,392.4M249.5,392.4L248.5,393.6M248.5,393.6L250.8,394.1M248.5,393.6L247.6,396.6M247.6,396.6L250.5,397.0M247.6,396.6L246.7,399.0M246.7,399.0L250.2,399.1M246.7,399.0L246.6,402.0M246.6,402.0L249.6,401.6M246.6,402.0L246.2,403.6M246.2,403.6L248.9,404.2M246.2,403.6L245.2,406.8M245.2,406.8L247.5,407.3M245.2,406.8L244.3,408.3M244.3,408.3L247.2,409.2M244.3,408.3L244.4,411.0M244.4,411.0L246.2,411.3M244.4,411.0L243.4,413.0M243.4,413.0L242.0,416.2M242.0,416.2L244.9,417.0M242.0,416.2L241.1,417.7M241.1,417.7L244.2,418.9M241.1,417.7L241.4,420.1M241.4,420.1L243.4,421.3M241.4,420.1L239.7,422.9M239.7,422.9L242.6,424.3M239.7,422.9L239.3,425.8M239.3,425.8L241.9,425.5M239.3,425.8L239.4,427.9M239.4,427.9L241.9,428.2M239.4,427.9L237.4,430.3M237.4,430.3L241.0,431.0M237.4,430.3L238.0,432.5M238.0,432.5L236.3,434.6M236.3,434.6L238.4,436.1M236.3,434.6L235.9,436.7M235.9,436.7L235.9,440.3M224.2,478.4L223.3,480.1M287.0,267.7L287.3,270.0M287.3,270.0L289.8,270.6M286.6,271.9L285.8,274.9M285.8,274.9L288.0,275.7M284.8,277.3L287.5,278.6M283.0,281.8L285.4,282.6M283.0,281.8L282.5,284.0M282.5,284.0L285.3,285.3M282.5,284.0L282.6,286.6M282.6,286.6L284.6,287.3M282.6,286.6L280.9,288.6M280.9,288.6L284.5,289.4M280.9,288.6L281.2,291.9M281.2,291.9L283.3,292.9M279.6,293.5L282.3,294.0M279.6,293.5L279.8,296.8M279.8,296.8L281.8,296.4M278.8,298.1L280.6,299.5M278.8,298.1L277.5,301.6M277.5,301.6L279.6,301.9M277.5,301.6L277.3,303.8M277.3,303.8L279.6,304.3M277.3,303.8L276.2,305.2M276.2,305.2L278.7,306.8M276.2,305.2L276.0,308.2M276.0,308.2L279.0,308.7M275.5,310.3L276.9,311.4M274.5,313.6L277.3,314.0M274.5,313.6L273.4,315.4M273.4,315.4L276.1,315.7M273.4,315.4L272.4,317.7M272.4,317.7L274.9,318.8M272.4,317.7L272.9,321.0M272.9,321.0L274.6,321.5M272.9,321.0L272.4,322.2M272.4,322.2L271.2,325.0M271.2,325.0L273.0,325.2M271.2,325.0L270.5,327.4M270.5,327.4L272.8,328.8M270.5,327.4L270.2,330.4M270.2,330.4L271.5,331.1M270.2,330.4L268.9,332.8M268.9,332.8L271.5,333.1M268.9,332.8L268.2,334.8M268.2,334.8L271.2,335.9M268.2,334.8L267.2,336.7M267.2,336.7L270.2,338.6M267.2,336.7L266.8,338.8M266.8,338.8L266.6,341.7M266.6,341.7L268.5,342.4M266.6,341.7L265.4,344.6M265.4,344.6L268.2,344.9M265.4,344.6L264.3,346.8M264.3,346.8L267.1,346.7M264.3,346.8L263.3,349.3M263.3,349.3L266.7,350.5M263.3,349.3L263.6,351.1M263.6,351.1L266.2,352.9M263.6,351.1L262.5,353.7M262.5,353.7L265.2,354.9M262.5,353.7L262.6,356.3M262.6,356.3L263.9,357.1M262.6,356.3L261.0,358.3M261.0,358.3L263.6,359.4M261.0,358.3L260.4,361.7M260.4,361.7L262.7,362.3M260.4,361.7L259.2,363.9M259.2,363.9L262.2,363.9M259.7,365.8L261.0,367.2M259.7,365.8L258.3,368.7M258.3,368.7L261.4,369.1M258.3,368.7L257.8,371.2M257.8,371.2L260.6,371.9M257.8,371.2L256.5,373.2M256.5,373.2L258.9,373.9M256.5,373.2L256.8,375.4M256.8,375.4L258.9,376.7M256.8,375.4L256.0,377.7M256.0,377.7L257.8,379.0M255.5,380.3L257.8,381.2M255.5,380.3L253.9,382.8M253.9,382.8L257.0,384.1M253.5,385.4L255.4,386.2M253.5,385.4L253.3,387.6M253.3,387.6L252.0,389.6M252.0,389.6L254.8,391.0M252.0,389.6L251.7,392.4M251.7,392.4L254.5,392.7M251.7,392.4L250.8,394.1M250.8,394.1L253.2,395.3M250.5,397.0L252.3,397.4M250.5,397.0L250.2,399.1M250.2,399.1L251.5,399.9M250.2,399.1L249.6,401.6M249.6,401.6L251.1,403.4M248.9,404.2L250.8,405.8M248.9,404.2L247.5,407.3M247.5,407.3L250.2,407.7M247.5,407.3L247.2,409.2M247.2,409.2L249.0,410.4M247.2,409.2L246.2,411.3M246.2,411.3L245.5,413.4M245.5,413.4L248.1,415.4M245.5,413.4L244.9,417.0M244.9,417.0L246.6,416.8M244.9,417.0L244.2,418.9M244.2,418.9L246.8,420.1M244.2,418.9L243.4,421.3M243.4,421.3L246.5,421.5M242.6,424.3L241.9,425.5M241.9,425.5L243.9,426.3M241.9,425.5L241.9,428.2M241.9,428.2L242.9,429.6M241.9,428.2L241.0,431.0M241.0,431.0L242.3,431.8M241.0,431.0L240.6,433.1M240.6,433.1L241.7,434.4M240.6,433.1L238.4,436.1M236.9,442.9L239.0,443.6M228.6,472.3L231.0,472.4M225.5,481.5L225.1,484.0M224.8,486.6L224.1,489.1M291.0,265.6L290.5,268.4M287.5,278.6L287.1,280.3M285.4,282.6L288.3,283.7M285.4,282.6L285.3,285.3M284.6,287.3L284.5,289.4M284.5,289.4L286.1,290.5M284.5,289.4L283.3,292.9M283.3,292.9L282.3,294.0M281.8,296.4L283.8,297.2M280.6,299.5L279.6,301.9M279.6,304.3L282.5,304.4M278.7,306.8L280.9,307.1M278.7,306.8L279.0,308.7M279.0,308.7L280.0,309.6M279.0,308.7L276.9,311.4M276.9,311.4L280.6,312.1M276.9,311.4L277.3,314.0M277.3,314.0L279.6,314.7M277.3,314.0L276.1,315.7M276.1,315.7L278.6,317.3M276.1,315.7L274.9,318.8M274.9,318.8L277.3,319.2M274.9,318.8L274.6,321.5M274.6,321.5L276.5,321.7M274.6,321.5L273.8,323.9M273.8,323.9L273.0,325.2M273.0,325.2L276.0,326.5M273.0,325.2L272.8,328.8M272.8,328.8L274.5,328.8M272.8,328.8L271.5,331.1M271.5,331.1L273.8,331.1M271.5,331.1L271.5,333.1M271.5,333.1L274.1,333.2M271.5,333.1L271.2,335.9M271.2,335.9L272.7,336.6M271.2,335.9L270.2,338.6M270.2,338.6L272.7,338.4M270.2,338.6L269.5,340.6M269.5,340.6L272.2,341.1M269.5,340.6L268.5,342.4M268.5,342.4L270.6,343.7M268.5,342.4L268.2,344.9M268.2,344.9L270.1,345.0M268.2,344.9L267.1,346.7M267.1,346.7L269.2,347.5M267.1,346.7L266.7,350.5M266.7,350.5L268.5,350.4M266.7,350.5L266.2,352.9M266.2,352.9L267.8,352.7M266.2,352.9L265.2,354.9M265.2,354.9L267.2,354.6M265.2,354.9L263.9,357.1M263.9,357.1L267.0,357.2M263.9,357.1L263.6,359.4M263.6,359.4L266.2,359.5M263.6,359.4L262.7,362.3M262.7,362.3L266.1,362.2M262.7,362.3L262.2,363.9M262.2,363.9L264.1,364.9M262.2,363.9L261.0,367.2M261.0,367.2L261.4,369.1M261.4,369.1L263.7,370.2M261.4,369.1L260.6,371.9M260.6,371.9L262.2,371.6M260.6,371.9L258.9,373.9M258.9,373.9L262.5,374.5M258.9,376.7L261.1,377.0M258.9,376.7L257.8,379.0M257.8,379.0L260.8,379.1M257.8,379.0L257.8,381.2M257.8,381.2L259.5,381.1M257.8,381.2L257.0,384.1M257.0,384.1L259.5,384.2M257.0,384.1L255.4,386.2M255.4,386.2L258.2,386.7M255.4,386.2L255.3,388.6M255.3,388.6L257.5,389.4M255.3,388.6L254.8,391.0M254.8,391.0L256.5,391.0M254.5,392.7L253.2,395.3M253.2,395.3L255.6,395.8M253.2,395.3L252.3,397.4M252.3,397.4L254.4,398.7M252.3,397.4L251.5,399.9M251.5,399.9L254.2,400.4M251.5,399.9L251.1,403.4M251.1,403.4L253.5,402.8M251.1,403.4L250.8,405.8M250.8,405.8L252.7,406.5M250.8,405.8L250.2,407.7M250.2,407.7L251.9,408.6M250.2,407.7L249.0,410.4M249.0,410.4L251.9,410.6M249.0,410.4L249.0,412.0M249.0,412.0L248.1,415.4M248.1,415.4L250.8,415.3M248.1,415.4L246.6,416.8M246.6,416.8L246.8,420.1M246.8,420.1L248.9,420.3M246.8,420.1L246.5,421.5M246.5,421.5L248.1,422.9M246.5,421.5L245.8,424.3M245.8,424.3L248.2,424.8M245.8,424.3L243.9,426.3M243.9,426.3L247.1,427.3M243.9,426.3L242.9,429.6M242.9,429.6L242.3,431.8M242.3,431.8L245.4,431.7M242.3,431.8L241.7,434.4M241.7,434.4L244.4,434.6M241.7,434.4L241.4,436.7M241.4,436.7L243.9,437.4M240.3,439.0L243.3,440.0M240.3,439.0L239.9,441.8M227.2,484.8L230.1,484.7M227.1,488.9L226.1,492.3M293.1,266.3L292.5,268.7M291.2,270.7L294.8,271.9M291.2,270.7L291.1,273.0M289.0,278.7L292.5,278.6M289.1,281.5L291.9,281.6M289.1,281.5L288.3,283.7M288.3,283.7L291.1,283.5M286.9,287.4L290.1,288.4M286.1,290.5L289.0,292.0M285.3,292.8L284.5,295.4M284.5,295.4L283.8,297.2M283.8,297.2L285.9,298.9M283.8,297.2L283.1,299.5M283.1,299.5L286.5,300.5M283.1,299.5L282.6,302.1M282.6,302.1L284.7,303.6M282.5,304.4L285.0,305.1M282.5,304.4L280.9,307.1M280.9,307.1L283.2,308.6M280.0,309.6L283.8,310.1M280.0,309.6L280.6,312.1M280.6,312.1L282.7,313.6M280.6,312.1L279.6,314.7M279.6,314.7L281.8,315.3M279.6,314.7L278.6,317.3M278.6,317.3L280.7,317.1M277.3,319.2L280.8,320.3M277.3,319.2L276.5,321.7M276.5,321.7L280.0,322.6M276.5,321.7L276.0,323.5M276.0,323.5L279.3,325.6M276.0,323.5L276.0,326.5M276.0,326.5L278.2,327.0M276.0,326.5L274.5,328.8M274.5,328.8L277.9,329.9M274.5,328.8L273.8,331.1M273.8,331.1L277.3,332.0M273.8,331.1L274.1,333.2M274.1,333.2L276.9,334.1M274.1,333.2L272.7,336.6M272.7,336.6L275.7,336.6M272.7,336.6L272.7,338.4M272.7,338.4L275.5,339.0M272.2,341.1L273.7,341.7M272.2,341.1L270.6,343.7M270.6,343.7L273.1,344.1M270.6,343.7L270.1,345.0M270.1,345.0L272.4,346.8M270.1,345.0L269.2,347.5M269.2,347.5L272.4,348.7M269.2,347.5L268.5,350.4M268.5,350.4L270.7,351.1M268.5,350.4L267.8,352.7M267.8,352.7L270.1,353.1M267.8,352.7L267.2,354.6M267.2,354.6L270.3,355.6M267.2,354.6L267.0,357.2M267.0,357.2L268.6,358.3M267.0,357.2L266.2,359.5M266.2,359.5L268.6,360.7M266.2,359.5L266.1,362.2M266.1,362.2L267.3,363.6M266.1,362.2L264.1,364.9M264.1,364.9L266.9,365.1M264.1,364.9L264.5,368.2M264.5,368.2L266.0,368.6M264.5,368.2L263.7,370.2M263.7,370.2L266.1,370.6M263.7,370.2L262.2,371.6M262.2,371.6L265.5,373.6M262.2,371.6L262.5,374.5M262.5,374.5L264.5,375.1M262.5,374.5L261.1,377.0M261.1,377.0L263.1,377.6M261.1,377.0L260.8,379.1M260.8,379.1L262.2,380.3M260.8,379.1L259.5,381.1M259.5,381.1L262.1,382.5M259.5,381.1L259.5,384.2M259.5,384.2L262.4,384.4M259.5,384.2L258.2,386.7M258.2,386.7L260.7,387.4M258.2,386.7L257.5,389.4M257.5,389.4L259.5,389.6M257.5,389.4L256.5,391.0M256.5,391.0L260.2,391.9M256.5,391.0L255.8,394.1M255.8,394.1L258.7,394.9M255.8,394.1L255.6,395.8M255.6,395.8L258.6,397.5M255.6,395.8L254.4,398.7M254.4,398.7L257.9,399.6M254.4,398.7L254.2,400.4M254.2,400.4L256.8,401.7M254.2,400.4L253.5,402.8M253.5,402.8L256.3,403.7M253.5,402.8L252.7,406.5M252.7,406.5L254.8,406.8M252.7,406.5L251.9,408.6M251.9,408.6L254.5,409.5M251.9,408.6L251.9,410.6M251.9,410.6L254.2,411.5M250.8,412.6L252.7,414.1M250.8,412.6L250.8,415.3M250.8,415.3L253.0,416.1M250.8,415.3L250.1,417.9M250.1,417.9L251.8,417.8M250.1,417.9L248.9,420.3M248.9,420.3L251.4,420.5M248.9,420.3L248.1,422.9M248.1,422.9L250.5,423.7M248.2,424.8L249.5,426.2M248.2,424.8L247.1,427.3M247.1,427.3L249.7,427.9M247.1,427.3L246.1,430.6M246.1,430.6L248.1,430.2M246.1,430.6L245.4,431.7M245.4,431.7L247.5,433.0M245.4,431.7L244.4,434.6M244.4,434.6L243.9,437.4M243.9,437.4L245.8,437.5M243.9,437.4L243.3,440.0M241.5,444.3L244.2,445.3M232.6,474.8L232.6,478.7M232.6,478.7L232.0,479.8M232.0,479.8L230.7,483.2M230.1,484.7L229.5,488.2M229.5,488.2L228.5,489.6M294.9,269.5L294.8,271.9M293.3,276.8L292.5,278.6M292.5,278.6L294.4,279.9M292.5,278.6L291.9,281.6M291.1,283.5L289.9,286.7M289.9,286.7L293.0,287.0M289.9,286.7L290.1,288.4M290.1,288.4L289.0,292.0M289.0,292.0L290.3,291.8M289.0,292.0L288.4,293.7M287.4,295.8L289.3,296.3M287.4,295.8L285.9,298.9M285.9,298.9L288.4,298.4M285.9,298.9L286.5,300.5M286.5,300.5L287.6,301.7M286.5,300.5L284.7,303.6M284.7,303.6L287.3,303.4M284.7,303.6L285.0,305.1M285.0,305.1L286.4,305.5M285.0,305.1L283.2,308.6M283.2,308.6L283.8,310.1M283.8,310.1L285.4,311.3M283.8,310.1L282.7,313.6M282.7,313.6L285.0,314.3M282.7,313.6L281.8,315.3M281.8,315.3L283.7,315.1M281.8,315.3L280.7,317.1M280.7,317.1L283.0,317.5M280.7,317.1L280.8,320.3M280.8,320.3L283.4,320.4M280.8,320.3L280.0,322.6M280.0,322.6L282.3,323.7M279.3,325.6L281.7,326.2M279.3,325.6L278.2,327.0M278.2,327.0L280.3,327.2M278.2,327.0L277.9,329.9M277.9,329.9L280.2,330.5M277.9,329.9L277.3,332.0M277.3,332.0L279.2,332.5M277.3,332.0L276.9,334.1M276.9,334.1L278.3,334.4M275.7,336.6L278.0,338.2M275.7,336.6L275.5,339.0M275.5,339.0L277.4,340.5M275.5,339.0L273.7,341.7M273.7,341.7L276.1,342.5M273.7,341.7L273.1,344.1M273.1,344.1L276.3,344.9M273.1,344.1L272.4,346.8M272.4,346.8L272.4,348.7M272.4,348.7L274.7,349.1M272.4,348.7L270.7,351.1M270.7,351.1L273.6,351.5M270.7,351.1L270.1,353.1M270.3,355.6L272.6,357.0M270.3,355.6L268.6,358.3M268.6,358.3L271.2,358.4M268.6,358.3L268.6,360.7M268.6,360.7L271.5,361.5M268.6,360.7L267.3,363.6M267.3,363.6L270.7,364.2M267.3,363.6L266.9,365.1M266.9,365.1L268.9,366.5M266.9,365.1L266.0,368.6M266.0,368.6L268.8,369.2M266.0,368.6L266.1,370.6M266.1,370.6L268.0,371.4M266.1,370.6L265.5,373.6M265.5,373.6L267.9,373.1M265.5,373.6L264.5,375.1M264.5,375.1L266.9,375.7M264.5,375.1L263.1,377.6M263.1,377.6L266.4,378.7M263.1,377.6L262.2,380.3M262.2,380.3L265.0,381.1M262.2,380.3L262.1,382.5M262.1,382.5L264.1,383.5M262.1,382.5L262.4,384.4M262.4,384.4L260.7,387.4M260.7,387.4L262.7,388.2M260.7,387.4L259.5,389.6M259.5,389.6L263.1,390.5M259.5,389.6L260.2,391.9M260.2,391.9L262.3,392.3M258.7,394.9L261.2,394.8M258.7,394.9L258.6,397.5M258.6,397.5L261.2,397.5M258.6,397.5L257.9,399.6M257.9,399.6L260.0,400.6M257.9,399.6L256.8,401.7M256.8,401.7L258.5,402.7M256.8,401.7L256.3,403.7M256.3,403.7L258.6,404.1M256.3,403.7L254.8,406.8M254.8,406.8L258.5,407.1M254.8,406.8L254.5,409.5M254.5,409.5L256.9,409.9M254.5,409.5L254.2,411.5M254.2,411.5L257.1,411.7M254.2,411.5L252.7,414.1M252.7,414.1L255.7,413.7M252.7,414.1L253.0,416.1M253.0,416.1L255.1,416.2M253.0,416.1L251.8,417.8M251.8,417.8L254.5,419.9M251.8,417.8L251.4,420.5M251.4,420.5L253.4,421.6M251.4,420.5L250.5,423.7M250.5,423.7L253.5,424.3M250.5,423.7L249.5,426.2M249.5,426.2L252.7,426.1M249.5,426.2L249.7,427.9M249.7,427.9L251.7,428.6M249.7,427.9L248.1,430.2M248.1,430.2L250.8,431.5M248.1,430.2L247.5,433.0M247.5,433.0L250.7,434.2M247.5,433.0L246.5,435.4M246.5,435.4L249.2,435.6M246.5,435.4L245.8,437.5M245.7,439.9L248.0,441.3M245.7,439.9L245.3,442.6M236.8,470.7L235.9,474.0M235.9,474.0L235.2,476.4M234.3,477.8L236.6,478.5M230.9,492.5L229.8,495.1M294.2,283.0L295.7,283.0M293.2,284.4L295.5,285.3M291.9,289.9L290.3,291.8M290.8,294.7L293.4,294.7M289.3,296.3L292.0,296.9M289.3,296.3L288.4,298.4M288.4,298.4L287.6,301.7M287.6,301.7L290.3,302.8M287.6,301.7L287.3,303.4M287.3,303.4L289.7,303.8M287.3,303.4L286.4,305.5M286.4,305.5L286.0,308.6M286.0,308.6L289.0,309.6M286.0,308.6L285.4,311.3M285.4,311.3L287.3,312.4M285.4,311.3L285.0,314.3M285.0,314.3L287.5,314.6M285.0,314.3L283.7,315.1M283.7,315.1L286.2,316.9M283.7,315.1L283.0,317.5M283.0,317.5L285.8,318.8M283.0,317.5L283.4,320.4M283.4,320.4L285.3,322.1M283.4,320.4L282.3,323.7M282.3,323.7L284.4,324.5M282.3,323.7L281.7,326.2M281.7,326.2L283.2,326.2M281.7,326.2L280.3,327.2M280.3,327.2L282.2,329.0M280.3,327.2L280.2,330.5M280.2,330.5L281.8,330.4M280.2,330.5L279.2,332.5M279.2,332.5L281.9,333.7M279.2,332.5L278.3,334.4M278.3,334.4L280.9,336.0M278.3,334.4L278.0,338.2M278.0,338.2L277.4,340.5M277.4,340.5L279.8,340.9M277.4,340.5L276.1,342.5M276.1,342.5L278.3,342.6M276.1,342.5L276.3,344.9M276.3,344.9L278.3,346.0M276.3,344.9L274.6,346.5M274.6,346.5L276.8,347.6M274.6,346.5L274.7,349.1M274.7,349.1L277.5,350.0M274.7,349.1L273.6,351.5M273.6,351.5L276.6,352.6M273.6,351.5L273.3,354.6M273.3,354.6L275.0,354.9M273.3,354.6L272.6,357.0M272.6,357.0L274.6,356.8M272.6,357.0L271.2,358.4M271.2,358.4L273.7,359.8M271.5,361.5L273.2,362.6M271.5,361.5L270.7,364.2M270.7,364.2L272.6,365.0M270.7,364.2L268.9,366.5M268.9,366.5L271.3,367.5M268.9,366.5L268.8,369.2M268.8,369.2L271.2,370.0M268.8,369.2L268.0,371.4M268.0,371.4L270.2,371.8M268.0,371.4L267.9,373.1M267.9,373.1L270.4,374.7M267.9,373.1L266.9,375.7M266.9,375.7L268.5,376.5M266.9,375.7L266.4,378.7M266.4,378.7L267.9,378.8M266.4,378.7L265.0,381.1M265.0,381.1L267.7,381.7M265.0,381.1L264.1,383.5M264.1,383.5L267.7,383.7M264.1,383.5L263.7,385.7M263.7,385.7L266.2,385.7M263.7,385.7L262.7,388.2M262.7,388.2L265.2,388.2M262.7,388.2L263.1,390.5M263.1,390.5L262.3,392.3M262.3,392.3L264.8,393.3M262.3,392.3L261.2,394.8M261.2,394.8L264.0,395.8M261.2,394.8L261.2,397.5M261.2,397.5L263.1,397.8M261.2,397.5L260.0,400.6M260.0,400.6L262.2,400.7M260.0,400.6L258.5,402.7M258.5,402.7L261.2,402.3M258.5,402.7L258.6,404.1M258.6,404.1L260.8,405.7M258.6,404.1L258.5,407.1M258.5,407.1L260.7,407.7M258.5,407.1L256.9,409.9M256.9,409.9L259.9,410.8M257.1,411.7L258.5,413.0M257.1,411.7L255.7,413.7M255.7,413.7L258.7,414.9M255.7,413.7L255.1,416.2M255.1,416.2L257.7,417.8M255.1,416.2L254.5,419.9M254.5,419.9L256.6,419.2M254.5,419.9L253.4,421.6M253.4,421.6L253.5,424.3M253.5,424.3L255.6,425.2M253.5,424.3L252.7,426.1M252.7,426.1L254.2,427.0M252.7,426.1L251.7,428.6M251.7,428.6L254.4,429.4M251.7,428.6L250.8,431.5M250.8,431.5L252.9,432.4M250.8,431.5L250.7,434.2M250.7,434.2L253.0,434.0M250.7,434.2L249.2,435.6M249.2,435.6L252.3,437.1M249.2,435.6L248.3,438.2M248.3,438.2L251.8,438.8M247.5,443.7L247.2,445.1M246.0,448.2L248.9,448.2M240.8,468.0L239.7,470.2M239.2,474.1L240.8,474.4M236.6,478.5L235.9,481.0M234.6,485.7L237.0,486.6M234.6,485.7L234.6,489.6M234.6,489.6L233.1,491.2M233.1,491.2L233.1,493.4M299.4,272.9L301.8,274.3M298.6,276.3L300.7,275.7M296.2,280.9L298.6,281.4M296.2,280.9L295.7,283.0M295.7,283.0L299.0,284.3M295.7,283.0L295.5,285.3M295.5,285.3L298.3,286.7M295.5,285.3L295.2,287.7M295.2,287.7L297.0,288.4M293.4,290.3L296.9,291.6M293.1,292.7L293.4,294.7M293.4,294.7L294.7,295.4M293.4,294.7L292.0,296.9M292.0,296.9L293.9,297.5M291.4,300.0L294.0,300.0M291.4,300.0L290.3,302.8M290.3,302.8L292.5,302.3M290.3,302.8L289.7,303.8M289.7,303.8L293.0,305.3M289.7,303.8L289.1,307.6M289.1,307.6L289.0,309.6M289.0,309.6L291.0,309.9M289.0,309.6L287.3,312.4M287.3,312.4L287.5,314.6M287.5,314.6L286.2,316.9M286.2,316.9L288.4,317.2M286.2,316.9L285.8,318.8M285.8,318.8L288.7,320.3M285.8,318.8L285.3,322.1M285.3,322.1L287.8,322.5M285.3,322.1L284.4,324.5M284.4,324.5L286.6,324.1M284.4,324.5L283.2,326.2M283.2,326.2L286.4,326.4M283.2,326.2L282.2,329.0M282.2,329.0L285.2,328.5M282.2,329.0L281.8,330.4M281.8,330.4L285.3,331.5M281.8,330.4L281.9,333.7M281.9,333.7L283.6,334.6M281.9,333.7L280.9,336.0M280.9,336.0L282.8,335.7M280.0,338.5L283.1,338.9M280.0,338.5L279.8,340.9M279.8,340.9L281.3,340.9M278.3,342.6L281.5,343.8M278.3,342.6L278.3,346.0M278.3,346.0L280.9,345.9M278.3,346.0L276.8,347.6M276.8,347.6L279.8,348.4M276.8,347.6L277.5,350.0M277.5,350.0L276.6,352.6M276.6,352.6L278.7,353.1M276.6,352.6L275.0,354.9M275.0,354.9L277.7,356.4M275.0,354.9L274.6,356.8M274.6,356.8L277.1,357.9M273.7,359.8L276.7,361.2M273.7,359.8L273.2,362.6M273.2,362.6L275.4,362.6M273.2,362.6L272.6,365.0M272.6,365.0L274.9,365.2M272.6,365.0L271.3,367.5M271.3,367.5L274.9,368.2M271.3,367.5L271.2,370.0M271.2,370.0L270.2,371.8M270.2,371.8L273.3,372.7M270.4,374.7L272.1,374.6M270.4,374.7L268.5,376.5M268.5,376.5L267.9,378.8M267.9,378.8L270.5,378.9M267.9,378.8L267.7,381.7M267.7,381.7L269.4,382.4M267.7,381.7L267.7,383.7M267.7,383.7L270.1,385.2M267.7,383.7L266.2,385.7M266.2,385.7L269.2,386.6M266.2,385.7L265.2,388.2M265.2,388.2L267.8,389.9M265.2,388.2L264.8,391.2M264.8,391.2L267.4,392.2M264.8,391.2L264.8,393.3M264.8,393.3L266.4,393.8M264.0,395.8L266.5,397.1M264.0,395.8L263.1,397.8M263.1,397.8L265.4,399.0M263.1,397.8L262.2,400.7M262.2,400.7L264.1,401.8M262.2,400.7L261.2,402.3M261.2,402.3L264.5,404.2M261.2,402.3L260.8,405.7M260.8,405.7L262.8,406.4M260.8,405.7L260.7,407.7M260.7,407.7L263.2,408.5M258.5,413.0L261.0,413.1M258.5,413.0L258.7,414.9M258.7,414.9L260.5,415.5M258.7,414.9L257.7,417.8M257.7,417.8L260.5,417.9M257.7,417.8L256.6,419.2M256.6,419.2L259.4,421.2M256.6,419.2L255.6,422.5M255.6,422.5L258.3,423.6M255.6,422.5L255.6,425.2M255.6,425.2L257.4,425.0M255.6,425.2L254.2,427.0M254.2,427.0L256.7,428.3M254.2,427.0L254.4,429.4M254.4,429.4L256.8,431.0M254.4,429.4L252.9,432.4M252.9,432.4L255.6,432.0M252.9,432.4L253.0,434.0M253.0,434.0L255.1,435.6M252.3,437.1L254.0,437.2M252.3,437.1L251.8,438.8M250.7,442.0L252.4,441.8M250.7,442.0L250.4,444.2M238.3,482.6L238.0,484.5M237.2,490.2L236.5,491.6M236.5,491.6L238.4,492.7M301.6,272.0L301.8,274.3M298.6,281.4L301.1,282.2M297.0,288.4L299.7,288.7M296.9,291.6L298.5,291.4M296.9,291.6L296.5,292.8M296.5,292.8L298.6,293.4M296.5,292.8L294.7,295.4M294.7,295.4L297.4,295.8M294.7,295.4L293.9,297.5M293.9,297.5L296.3,298.4M294.0,300.0L295.9,301.8M294.0,300.0L292.5,302.3M292.5,302.3L295.1,304.0M292.5,302.3L293.0,305.3M293.0,305.3L294.9,305.7M293.0,305.3L290.9,308.0M290.9,308.0L291.0,309.9M291.0,309.9L290.1,311.9M290.1,311.9L292.3,312.7M290.1,311.9L290.1,314.4M290.1,314.4L291.8,315.3M290.1,314.4L288.4,317.2M288.4,317.2L291.6,318.2M288.4,317.2L288.7,320.3M288.7,320.3L290.6,320.1M288.7,320.3L287.8,322.5M287.8,322.5L289.9,323.4M287.8,322.5L286.6,324.1M286.6,324.1L289.5,326.0M286.6,324.1L286.4,326.4M286.4,326.4L288.5,328.1M286.4,326.4L285.2,328.5M285.2,328.5L287.7,330.1M285.2,328.5L285.3,331.5M285.3,331.5L287.5,332.6M285.3,331.5L283.6,334.6M283.6,334.6L286.4,335.1M283.6,334.6L282.8,335.7M282.8,335.7L285.3,336.8M282.8,335.7L283.1,338.9M283.1,338.9L284.7,339.1M283.1,338.9L281.3,340.9M281.3,340.9L284.4,342.3M281.3,340.9L281.5,343.8M281.5,343.8L283.8,343.8M281.5,343.8L280.9,345.9M280.9,345.9L282.7,346.3M280.9,345.9L279.8,348.4M279.8,348.4L281.8,348.8M279.8,348.4L279.3,350.8M279.3,350.8L282.3,351.1M279.3,350.8L278.7,353.1M278.7,353.1L280.4,354.2M278.7,353.1L277.7,356.4M277.7,356.4L279.6,356.2M277.7,356.4L277.1,357.9M277.1,357.9L279.3,359.3M277.1,357.9L276.7,361.2M276.7,361.2L278.9,361.7M276.7,361.2L275.4,362.6M275.4,362.6L277.8,363.6M275.4,362.6L274.9,365.2M274.9,365.2L277.6,366.7M274.9,365.2L274.9,368.2M274.9,368.2L276.6,368.0M274.9,368.2L273.1,370.6M273.1,370.6L276.5,370.9M273.1,370.6L273.3,372.7M273.3,372.7L275.8,373.4M273.3,372.7L272.1,374.6M272.1,374.6L274.2,376.0M272.1,374.6L271.1,377.6M271.1,377.6L273.9,378.6M271.1,377.6L270.5,378.9M270.5,378.9L273.0,380.1M270.5,378.9L269.4,382.4M269.4,382.4L272.5,382.1M269.4,382.4L270.1,385.2M270.1,385.2L269.2,386.6M269.2,386.6L270.5,387.6M269.2,386.6L267.8,389.9M267.8,389.9L270.4,390.1M267.8,389.9L267.4,392.2M267.4,392.2L269.6,392.9M267.4,392.2L266.4,393.8M266.4,393.8L266.5,397.1M266.5,397.1L268.5,396.8M265.4,399.0L267.6,399.7M265.4,399.0L264.1,401.8M264.1,401.8L266.8,401.6M264.5,404.2L266.0,404.6M264.5,404.2L262.8,406.4M262.8,406.4L265.7,407.3M262.8,406.4L263.2,408.5M263.2,408.5L264.3,409.3M263.2,408.5L262.4,410.9M262.4,410.9L264.4,411.3M262.4,410.9L261.0,413.1M261.0,413.1L263.8,414.6M261.0,413.1L260.5,415.5M260.5,415.5L263.5,416.2M260.5,415.5L260.5,417.9M260.5,417.9L262.1,419.1M260.5,417.9L259.4,421.2M259.4,421.2L261.1,421.6M259.4,421.2L258.3,423.6M258.3,423.6L261.2,423.4M257.4,425.0L260.5,425.6M257.4,425.0L256.7,428.3M256.7,428.3L259.7,429.0M256.7,428.3L256.8,431.0M256.8,431.0L258.3,431.3M256.8,431.0L255.6,432.0M255.6,432.0L258.1,433.5M255.6,432.0L255.1,435.6M255.1,435.6L257.7,436.3M254.0,437.2L257.2,438.6M254.0,437.2L253.9,440.0M253.9,440.0L255.8,440.8M243.2,475.8L245.6,476.4M242.2,477.5L242.5,480.2M242.5,480.2L244.0,481.5M242.5,480.2L240.8,482.3M240.8,482.3L243.3,484.2M240.8,482.3L240.7,485.3M240.7,485.3L243.5,486.2M240.4,488.1L239.1,489.9M239.1,489.9L241.3,490.4M301.1,282.2L304.0,282.0M301.3,284.6L299.9,286.2M299.9,286.2L299.7,288.7M299.7,288.7L298.5,291.4M298.5,291.4L301.3,291.9M298.5,291.4L298.6,293.4M298.6,293.4L300.0,294.3M298.6,293.4L297.4,295.8M297.4,295.8L296.3,298.4M296.3,298.4L295.9,301.8M295.9,301.8L298.6,301.2M295.9,301.8L295.1,304.0M295.1,304.0L298.2,303.9M295.1,304.0L294.9,305.7M294.9,305.7L297.2,306.6M294.9,305.7L294.5,308.3M294.5,308.3L295.9,308.7M294.5,308.3L292.6,310.7M292.6,310.7L295.5,311.2M292.6,310.7L292.3,312.7M292.3,312.7L294.7,313.3M292.3,312.7L291.8,315.3M291.8,315.3L294.8,316.3M291.8,315.3L291.6,318.2M291.6,318.2L290.6,320.1M290.6,320.1L289.9,323.4M289.9,323.4L292.2,322.8M289.9,323.4L289.5,326.0M289.5,326.0L291.4,326.3M288.5,328.1L290.5,328.3M288.5,328.1L287.7,330.1M287.7,330.1L290.4,330.0M287.5,332.6L289.6,333.8M287.5,332.6L286.4,335.1M286.4,335.1L289.0,334.8M286.4,335.1L285.3,336.8M285.3,336.8L288.0,338.6M285.3,336.8L284.7,339.1M284.7,339.1L286.8,340.7M284.7,339.1L284.4,342.3M284.4,342.3L286.1,343.0M284.4,342.3L283.8,343.8M283.8,343.8L286.8,344.6M283.8,343.8L282.7,346.3M282.7,346.3L285.3,348.1M282.7,346.3L281.8,348.8M281.8,348.8L284.2,349.1M281.8,348.8L282.3,351.1M282.3,351.1L284.4,352.2M282.3,351.1L280.4,354.2M280.4,354.2L283.0,354.5M280.4,354.2L279.6,356.2M279.6,356.2L281.8,357.3M279.6,356.2L279.3,359.3M279.3,359.3L282.7,359.3M279.3,359.3L278.9,361.7M278.9,361.7L277.8,363.6M277.8,363.6L280.7,364.8M277.8,363.6L277.6,366.7M277.6,366.7L279.5,367.1M277.6,366.7L276.6,368.0M276.6,368.0L278.8,369.3M276.5,370.9L278.0,371.3M276.5,370.9L275.8,373.4M275.8,373.4L278.2,374.1M275.8,373.4L274.2,376.0M274.2,376.0L277.2,377.0M273.9,378.6L276.6,378.8M273.9,378.6L273.0,380.1M273.0,380.1L276.4,380.7M273.0,380.1L272.5,382.1M272.5,382.1L274.3,384.0M272.5,382.1L271.3,385.0M271.3,385.0L274.2,386.6M271.3,385.0L270.5,387.6M270.5,387.6L273.1,388.7M270.5,387.6L270.4,390.1M270.4,390.1L273.0,391.3M270.4,390.1L269.6,392.9M269.6,392.9L272.4,393.7M269.6,392.9L269.4,395.3M269.4,395.3L270.9,395.2M269.4,395.3L268.5,396.8M268.5,396.8L271.1,397.5M268.5,396.8L267.6,399.7M267.6,399.7L269.4,400.6M267.6,399.7L266.8,401.6M266.8,401.6L269.3,402.2M266.8,401.6L266.0,404.6M266.0,404.6L269.3,405.2M266.0,404.6L265.7,407.3M265.7,407.3L267.4,408.0M265.7,407.3L264.3,409.3M264.3,409.3L266.8,409.7M264.4,411.3L267.4,411.9M264.4,411.3L263.8,414.6M263.8,414.6L266.1,414.4M263.8,414.6L263.5,416.2M263.5,416.2L265.7,416.9M263.5,416.2L262.1,419.1M262.1,419.1L264.3,419.4M262.1,419.1L261.1,421.6M261.1,421.6L263.7,421.2M261.1,421.6L261.2,423.4M261.2,423.4L262.9,424.0M261.2,423.4L260.5,425.6M260.5,425.6L262.7,426.7M260.5,425.6L259.7,429.0M259.7,429.0L261.4,428.3M258.3,431.3L258.1,433.5M258.1,433.5L260.1,434.4M258.1,433.5L257.7,436.3M257.2,438.6L255.8,440.8M243.3,484.2L245.4,484.0M243.3,484.2L243.5,486.2M243.5,486.2L245.6,487.1M241.3,490.4L243.5,492.2M240.8,493.6L240.5,495.2M306.4,273.6L305.9,275.1M305.4,280.2L304.0,282.0M304.0,282.0L306.1,283.5M304.0,282.0L303.3,284.9M303.3,284.9L302.6,286.8M302.3,290.2L305.0,290.3M301.3,291.9L303.4,293.5M301.3,291.9L300.0,294.3M300.0,294.3L302.4,294.9M300.5,296.6L301.7,297.9M300.5,296.6L299.4,298.9M299.4,298.9L301.1,300.0M299.4,298.9L298.6,301.2M298.6,301.2L300.7,302.2M298.6,301.2L298.2,303.9M298.2,303.9L300.6,305.6M298.2,303.9L297.2,306.6M297.2,306.6L299.8,307.4M295.9,308.7L298.7,309.2M295.9,308.7L295.5,311.2M295.5,311.2L298.3,312.0M295.5,311.2L294.7,313.3M294.7,313.3L297.8,314.5M294.7,313.3L294.8,316.3M294.8,316.3L296.7,317.6M294.8,316.3L294.3,318.6M294.3,318.6L293.1,321.6M293.1,321.6L295.4,322.2M293.1,321.6L292.2,322.8M292.2,322.8L294.1,323.8M292.2,322.8L291.4,326.3M291.4,326.3L293.3,326.5M291.4,326.3L290.5,328.3M290.4,330.0L292.1,331.2M290.4,330.0L289.6,333.8M289.6,333.8L291.7,333.6M289.0,334.8L290.6,336.6M289.0,334.8L288.0,338.6M288.0,338.6L290.8,338.5M288.0,338.6L286.8,340.7M286.8,340.7L289.7,341.1M286.8,340.7L286.1,343.0M286.1,343.0L289.1,343.4M286.1,343.0L286.8,344.6M286.8,344.6L285.3,348.1M285.3,348.1L287.3,347.8M285.3,348.1L284.2,349.1M284.2,349.1L287.6,350.6M284.4,352.2L286.0,352.6M284.4,352.2L283.0,354.5M283.0,354.5L281.8,357.3M281.8,357.3L282.7,359.3M282.7,359.3L284.9,359.8M282.7,359.3L280.9,362.4M280.9,362.4L283.0,362.7M280.9,362.4L280.7,364.8M280.7,364.8L283.3,365.5M280.7,364.8L279.5,367.1M279.5,367.1L281.9,367.1M279.5,367.1L278.8,369.3M278.8,369.3L282.3,369.3M278.8,369.3L278.0,371.3M278.0,371.3L281.2,372.1M278.0,371.3L278.2,374.1M278.2,374.1L280.7,375.1M278.2,374.1L277.2,377.0M277.2,377.0L279.6,376.9M277.2,377.0L276.6,378.8M276.6,378.8L278.3,379.1M276.6,378.8L276.4,380.7M276.4,380.7L277.7,381.5M276.4,380.7L274.3,384.0M274.3,384.0L277.7,384.8M274.2,386.6L276.7,386.1M274.2,386.6L273.1,388.7M273.1,388.7L275.9,389.0M273.0,391.3L275.3,390.8M273.0,391.3L272.4,393.7M272.4,393.7L274.2,393.6M272.4,393.7L270.9,395.2M270.9,395.2L271.1,397.5M269.4,400.6L271.8,401.5M269.4,400.6L269.3,402.2M269.3,402.2L271.5,403.3M269.3,402.2L269.3,405.2M269.3,405.2L270.7,406.0M269.3,405.2L267.4,408.0M267.4,408.0L270.6,407.8M266.8,409.7L269.9,410.2M266.8,409.7L267.4,411.9M267.4,411.9L268.9,412.5M267.4,411.9L266.1,414.4M266.1,414.4L268.2,415.5M266.1,414.4L265.7,416.9M265.7,416.9L267.2,417.6M265.7,416.9L264.3,419.4M264.3,419.4L267.5,421.1M264.3,419.4L263.7,421.2M263.7,421.2L266.3,422.8M263.7,421.2L262.9,424.0M262.9,424.0L265.7,425.3M262.9,424.0L262.7,426.7M262.7,426.7L265.7,427.5M261.4,428.3L264.2,430.0M261.4,428.3L261.3,431.7M261.3,431.7L263.4,432.2M261.3,431.7L260.1,434.4M260.1,434.4L262.9,434.2M260.1,434.4L259.9,436.4M258.4,439.2L262.2,439.0M258.4,439.2L258.0,441.2M258.0,441.2L260.3,441.8M247.7,480.4L246.5,481.7M245.4,484.0L248.1,485.1M245.6,487.1L247.3,487.9M243.5,492.2L242.9,493.6M309.1,274.2L311.2,274.1M306.5,280.7L309.2,281.7M306.5,280.7L306.1,283.5M306.1,283.5L308.8,284.7M305.3,285.6L305.1,287.8M305.1,287.8L305.0,290.3M305.0,290.3L306.5,290.9M305.0,290.3L303.4,293.5M303.4,293.5L305.6,292.9M303.4,293.5L302.4,294.9M302.4,294.9L305.9,296.5M301.7,297.9L305.0,298.5M301.7,297.9L301.1,300.0M301.1,300.0L303.7,300.8M301.1,300.0L300.7,302.2M300.7,302.2L303.1,303.3M300.7,302.2L300.6,305.6M300.6,305.6L302.1,305.4M300.6,305.6L299.8,307.4M299.8,307.4L301.4,307.8M298.7,309.2L301.1,310.7M298.3,312.0L300.0,313.1M298.3,312.0L297.8,314.5M297.8,314.5L296.7,317.6M296.7,317.6L299.7,317.6M296.7,317.6L296.0,319.5M296.0,319.5L298.6,319.7M296.0,319.5L295.4,322.2M295.4,322.2L297.8,321.9M295.4,322.2L294.1,323.8M294.1,323.8L293.3,326.5M293.3,326.5L296.4,327.0M293.3,326.5L294.1,328.6M294.1,328.6L295.8,330.2M294.1,328.6L292.1,331.2M292.1,331.2L294.7,331.6M292.1,331.2L291.7,333.6M291.7,333.6L293.6,334.7M291.7,333.6L290.6,336.6M290.6,336.6L293.4,336.6M290.8,338.5L292.9,338.7M290.8,338.5L289.7,341.1M289.7,341.1L291.9,341.9M289.7,341.1L289.1,343.4M289.1,343.4L292.1,343.5M289.1,343.4L288.8,346.5M288.8,346.5L287.3,347.8M287.3,347.8L287.6,350.6M287.6,350.6L286.0,352.6M286.0,352.6L285.5,354.8M285.5,354.8L287.5,356.0M285.0,358.0L288.1,358.3M285.0,358.0L284.9,359.8M284.9,359.8L286.2,361.4M283.0,362.7L286.6,363.3M283.0,362.7L283.3,365.5M283.3,365.5L285.4,365.2M283.3,365.5L281.9,367.1M281.9,367.1L284.9,368.2M282.3,369.3L284.2,370.9M282.3,369.3L281.2,372.1M281.2,372.1L283.2,372.8M281.2,372.1L280.7,375.1M280.7,375.1L282.2,375.8M279.6,376.9L282.2,377.2M278.3,379.1L281.7,379.9M278.3,379.1L277.7,381.5M277.7,384.8L280.2,384.5M276.7,386.1L279.8,387.6M276.7,386.1L275.9,389.0M275.9,389.0L278.3,390.4M275.9,389.0L275.3,390.8M275.3,390.8L277.2,392.6M275.3,390.8L274.2,393.6M274.2,393.6L276.7,394.2M274.2,393.6L273.8,395.5M273.8,395.5L275.7,397.0M273.8,395.5L272.8,399.1M272.8,399.1L275.1,399.1M272.8,399.1L271.8,401.5M271.8,401.5L275.5,401.5M271.8,401.5L271.5,403.3M271.5,403.3L274.7,404.9M271.5,403.3L270.7,406.0M270.7,406.0L273.7,406.2M270.7,406.0L270.6,407.8M270.6,407.8L273.3,409.1M270.6,407.8L269.9,410.2M269.9,410.2L271.8,411.4M269.9,410.2L268.9,412.5M268.9,412.5L271.7,414.0M268.9,412.5L268.2,415.5M268.2,415.5L271.2,416.1M268.2,415.5L267.2,417.6M267.2,417.6L270.4,418.1M267.2,417.6L267.5,421.1M267.5,421.1L269.9,421.1M267.5,421.1L266.3,422.8M266.3,422.8L268.8,422.7M266.3,422.8L265.7,425.3M265.7,425.3L265.7,427.5M265.7,427.5L267.4,428.9M265.7,427.5L264.2,430.0M264.2,430.0L266.4,430.6M264.2,430.0L263.4,432.2M263.4,432.2L265.6,432.6M263.4,432.2L262.9,434.2M262.9,434.2L265.3,435.4M262.9,434.2L261.8,436.7M261.8,436.7L262.2,439.0M260.0,447.0L262.4,447.8M247.3,487.9L247.1,490.1M244.5,497.2L247.0,497.6M310.9,276.4L313.1,277.4M310.8,278.9L311.9,280.2M308.8,284.7L311.7,284.5M308.8,284.7L308.1,285.7M308.1,285.7L309.9,286.8M308.1,285.7L307.5,288.3M307.5,288.3L310.1,289.8M307.5,288.3L306.5,290.9M305.6,292.9L308.6,294.6M305.6,292.9L305.9,296.5M305.9,296.5L307.2,297.0M305.9,296.5L305.0,298.5M305.0,298.5L307.5,299.8M303.7,300.8L306.7,301.0M303.1,303.3L302.1,305.4M302.1,305.4L305.3,306.8M302.1,305.4L301.4,307.8M301.4,307.8L304.7,308.9M301.4,307.8L301.1,310.7M301.1,310.7L300.0,313.1M300.0,313.1L302.2,313.6M300.0,313.1L300.4,314.7M300.4,314.7L302.0,316.4M300.4,314.7L299.7,317.6M299.7,317.6L301.4,317.7M299.7,317.6L298.6,319.7M298.6,319.7L300.7,320.9M298.6,319.7L297.8,321.9M297.8,321.9L300.6,323.8M297.8,321.9L297.6,325.4M297.6,325.4L299.6,325.4M297.6,325.4L296.4,327.0M296.4,327.0L299.0,327.4M295.8,330.2L298.4,330.2M295.8,330.2L294.7,331.6M294.7,331.6L297.1,332.1M294.7,331.6L293.6,334.7M293.6,334.7L297.3,334.7M293.6,334.7L293.4,336.6M293.4,336.6L295.6,337.9M293.4,336.6L292.9,338.7M292.9,338.7L295.5,339.6M292.9,338.7L291.9,341.9M291.9,341.9L295.0,343.0M291.9,341.9L292.1,343.5M292.1,343.5L294.0,344.2M292.1,343.5L290.5,345.9M290.5,345.9L293.6,347.6M290.5,345.9L290.3,349.2M290.3,349.2L293.1,349.2M290.3,349.2L289.7,350.7M289.7,350.7L291.6,351.6M289.7,350.7L288.2,354.0M288.2,354.0L290.5,354.5M288.2,354.0L287.5,356.0M287.5,356.0L289.9,356.9M287.5,356.0L288.1,358.3M288.1,358.3L286.2,361.4M286.2,361.4L289.5,361.5M286.2,361.4L286.6,363.3M286.6,363.3L288.0,363.5M286.6,363.3L285.4,365.2M285.4,365.2L287.5,366.7M285.4,365.2L284.9,368.2M284.9,368.2L287.6,369.3M284.9,368.2L284.2,370.9M284.2,370.9L286.0,370.4M284.2,370.9L283.2,372.8M283.2,372.8L285.3,374.1M283.2,372.8L282.2,375.8M282.2,377.2L283.6,378.8M282.2,377.2L281.7,379.9M281.7,379.9L283.3,380.7M280.8,383.3L282.8,383.1M280.8,383.3L280.2,384.5M280.2,384.5L282.5,385.3M280.2,384.5L279.8,387.6M279.8,387.6L281.0,388.1M279.8,387.6L278.3,390.4M278.3,390.4L280.9,391.0M278.3,390.4L277.2,392.6M277.2,392.6L279.9,393.0M277.2,392.6L276.7,394.2M276.7,394.2L280.0,394.8M276.7,394.2L275.7,397.0M275.7,397.0L279.2,397.1M275.7,397.0L275.1,399.1M275.1,399.1L278.8,399.9M275.1,399.1L275.5,401.5M275.5,401.5L278.0,402.6M275.5,401.5L274.7,404.9M274.7,404.9L276.7,404.5M274.7,404.9L273.7,406.2M273.7,406.2L275.4,407.7M273.7,406.2L273.3,409.1M273.3,409.1L275.7,410.1M273.3,409.1L271.8,411.4M271.8,411.4L274.4,412.2M271.8,411.4L271.7,414.0M271.7,414.0L274.3,414.1M271.2,416.1L273.3,417.5M271.2,416.1L270.4,418.1M270.4,418.1L272.4,419.8M270.4,418.1L269.9,421.1M269.9,421.1L272.0,421.6M269.9,421.1L268.8,422.7M268.8,422.7L271.5,424.2M267.8,426.3L271.1,426.4M267.8,426.3L267.4,428.9M267.4,428.9L269.9,429.1M267.4,428.9L266.4,430.6M266.4,430.6L265.6,432.6M265.6,432.6L268.8,434.2M265.6,432.6L265.3,435.4M265.3,435.4L267.5,435.3M265.0,437.5L266.9,438.4M265.0,437.5L263.4,440.1M263.4,440.1L263.0,442.0M262.6,444.9L264.4,445.8M262.6,444.9L262.4,447.8M251.3,485.4L250.0,488.7M315.0,272.1L313.6,275.5M313.6,275.5L313.1,277.4M311.9,282.6L311.7,284.5M311.7,284.5L309.9,286.8M309.9,286.8L313.0,287.9M309.9,286.8L310.1,289.8M310.1,289.8L311.9,289.5M310.1,289.8L308.8,292.0M308.8,292.0L311.4,292.2M308.8,292.0L308.6,294.6M308.6,294.6L311.2,295.6M308.6,294.6L307.2,297.0M307.2,297.0L310.5,297.7M307.2,297.0L307.5,299.8M307.5,299.8L309.5,299.5M307.5,299.8L306.7,301.0M306.7,301.0L308.5,302.5M306.7,301.0L305.5,303.1M305.5,303.1L308.4,304.3M305.5,303.1L305.3,306.8M305.3,306.8L307.5,307.7M305.3,306.8L304.7,308.9M304.7,308.9L307.3,309.5M304.7,308.9L303.6,311.8M303.6,311.8L306.3,311.7M303.6,311.8L302.2,313.6M302.2,313.6L306.0,314.4M302.2,313.6L302.0,316.4M302.0,316.4L305.1,316.2M302.0,316.4L301.4,317.7M301.4,317.7L304.3,319.6M300.7,320.9L303.0,322.0M300.7,320.9L300.6,323.8M300.6,323.8L303.0,323.3M300.6,323.8L299.6,325.4M299.6,325.4L302.5,325.9M299.6,325.4L299.0,327.4M299.0,327.4L298.4,330.2M298.4,330.2L300.2,330.5M298.4,330.2L297.1,332.1M297.1,332.1L299.8,333.9M297.1,332.1L297.3,334.7M297.3,334.7L299.4,336.0M295.6,337.9L298.0,337.9M295.6,337.9L295.5,339.6M295.5,339.6L297.8,340.0M295.5,339.6L295.0,343.0M295.0,343.0L296.8,343.3M295.0,343.0L294.0,344.2M294.0,344.2L296.3,345.6M293.6,347.6L295.4,348.2M293.6,347.6L293.1,349.2M293.1,349.2L294.4,350.5M293.1,349.2L291.6,351.6M291.6,351.6L294.7,352.7M291.6,351.6L290.5,354.5M290.5,354.5L292.9,355.5M290.5,354.5L289.9,356.9M289.9,356.9L293.0,357.1M289.4,359.1L291.7,360.0M289.4,359.1L289.5,361.5M289.5,361.5L292.0,362.5M289.5,361.5L288.0,363.5M288.0,363.5L291.1,364.8M288.0,363.5L287.5,366.7M287.5,366.7L287.6,369.3M287.6,369.3L288.9,369.4M287.6,369.3L286.0,370.4M286.0,370.4L288.1,371.9M286.0,370.4L285.3,374.1M285.3,374.1L287.6,373.5M285.3,374.1L285.5,376.3M285.5,376.3L287.2,376.8M285.5,376.3L283.6,378.8M283.3,380.7L285.6,381.4M283.3,380.7L282.8,383.1M282.8,383.1L285.3,383.5M282.8,383.1L282.5,385.3M282.5,385.3L284.2,386.5M282.5,385.3L281.0,388.1M281.0,388.1L284.5,388.6M281.0,388.1L280.9,391.0M280.9,391.0L283.4,390.7M280.9,391.0L279.9,393.0M279.9,393.0L282.8,394.0M280.0,394.8L282.0,395.7M280.0,394.8L279.2,397.1M279.2,397.1L280.7,398.0M279.2,397.1L278.8,399.9M278.8,399.9L281.1,400.5M278.8,399.9L278.0,402.6M278.0,402.6L280.1,402.6M278.0,402.6L276.7,404.5M276.7,404.5L279.4,406.2M276.7,404.5L275.4,407.7M275.4,407.7L278.3,407.5M275.4,407.7L275.7,410.1M275.7,410.1L277.9,410.8M275.7,410.1L274.4,412.2M274.4,412.2L276.9,412.8M274.4,412.2L274.3,414.1M274.3,414.1L275.9,415.2M274.3,414.1L273.3,417.5M273.3,417.5L276.0,417.8M273.3,417.5L272.4,419.8M272.4,419.8L274.4,419.6M272.4,419.8L272.0,421.6M272.0,421.6L274.1,422.8M272.0,421.6L271.5,424.2M271.5,424.2L273.1,424.0M271.5,424.2L271.1,426.4M271.1,426.4L269.9,429.1M269.9,429.1L272.7,429.8M269.9,429.1L269.5,431.9M269.5,431.9L271.1,431.5M269.5,431.9L268.8,434.2M268.8,434.2L267.5,435.3M267.5,435.3L269.7,437.3M254.5,481.4L253.3,484.6M253.3,484.6L253.7,487.2M316.1,275.5L315.2,277.8M315.2,277.8L315.2,281.1M315.2,281.1L317.1,281.9M315.2,281.1L314.6,282.5M313.2,285.2L313.0,287.9M313.0,287.9L315.3,288.2M313.0,287.9L311.9,289.5M311.4,292.2L311.2,295.6M311.2,295.6L313.1,295.3M311.2,295.6L310.5,297.7M310.5,297.7L311.9,298.1M309.5,299.5L308.5,302.5M308.5,302.5L311.8,302.8M308.5,302.5L308.4,304.3M308.4,304.3L310.1,305.8M307.5,307.7L307.3,309.5M307.3,309.5L309.7,310.6M307.3,309.5L306.3,311.7M306.3,311.7L307.9,312.6M306.3,311.7L306.0,314.4M306.0,314.4L308.2,314.8M306.0,314.4L305.1,316.2M305.1,316.2L307.0,317.4M304.3,319.6L306.4,319.4M304.3,319.6L303.0,322.0M303.0,322.0L306.0,322.0M303.0,322.0L303.0,323.3M303.0,323.3L305.0,324.9M303.0,323.3L302.5,325.9M302.5,325.9L304.3,327.5M302.5,325.9L301.2,328.9M301.2,328.9L304.0,330.0M301.2,328.9L300.2,330.5M300.2,330.5L302.3,332.0M300.2,330.5L299.8,333.9M299.8,333.9L302.4,333.8M299.8,333.9L299.4,336.0M299.4,336.0L298.0,337.9M298.0,337.9L300.8,339.5M298.0,337.9L297.8,340.0M297.8,340.0L299.4,341.6M297.8,340.0L296.8,343.3M296.8,343.3L299.6,343.6M296.8,343.3L296.3,345.6M296.3,345.6L298.2,346.0M296.3,345.6L295.4,348.2M295.4,348.2L297.7,348.7M295.4,348.2L294.4,350.5M294.4,350.5L296.9,351.4M294.4,350.5L294.7,352.7M294.7,352.7L296.6,354.0M294.7,352.7L292.9,355.5M292.9,355.5L295.7,355.2M292.9,355.5L293.0,357.1M293.0,357.1L295.5,357.8M293.0,357.1L291.7,360.0M291.7,360.0L294.6,360.3M291.7,360.0L292.0,362.5M292.0,362.5L293.7,362.8M292.0,362.5L291.1,364.8M291.1,364.8L293.1,364.7M291.1,364.8L290.8,366.5M290.8,366.5L292.1,367.3M290.8,366.5L288.9,369.4M288.9,369.4L291.3,370.1M288.9,369.4L288.1,371.9M288.1,371.9L290.6,372.7M288.1,371.9L287.6,373.5M287.6,373.5L290.7,375.0M287.6,373.5L287.2,376.8M287.2,376.8L290.5,377.2M287.2,376.8L286.4,378.6M286.4,378.6L288.8,379.6M286.4,378.6L285.6,381.4M285.6,381.4L288.5,382.5M285.6,381.4L285.3,383.5M285.3,383.5L287.3,384.8M284.2,386.5L287.2,387.1M284.2,386.5L284.5,388.6M284.5,388.6L286.7,389.3M284.5,388.6L283.4,390.7M283.4,390.7L286.0,391.2M283.4,390.7L282.8,394.0M282.8,394.0L282.0,395.7M282.0,395.7L284.2,396.4M282.0,395.7L280.7,398.0M280.7,398.0L284.1,399.1M280.7,398.0L281.1,400.5M281.1,400.5L283.0,401.2M281.1,400.5L280.1,402.6M280.1,402.6L282.6,403.5M280.1,402.6L279.4,406.2M279.4,406.2L281.1,406.2M278.3,407.5L280.9,408.1M277.9,410.8L280.0,410.9M277.9,410.8L276.9,412.8M276.9,412.8L279.8,414.2M276.9,412.8L275.9,415.2M275.9,415.2L278.8,416.4M275.9,415.2L276.0,417.8M276.0,417.8L277.9,418.0M276.0,417.8L274.4,419.6M274.4,419.6L277.6,421.3M274.4,419.6L274.1,422.8M274.1,422.8L277.3,423.2M273.1,424.0L275.9,425.3M273.1,424.0L272.8,427.7M272.8,427.7L275.9,427.4M272.7,429.8L274.6,430.6M272.7,429.8L271.1,431.5M271.1,431.5L273.9,433.3M269.7,437.3L272.1,437.0M321.0,269.4L319.9,272.3M319.9,272.3L319.3,273.9M318.8,277.1L318.0,279.3M317.1,281.9L319.1,282.4M317.1,284.3L319.4,284.1M315.3,288.2L317.6,289.6M313.9,291.3L316.5,291.4M314.2,293.8L316.7,294.7M314.2,293.8L313.1,295.3M313.1,295.3L315.2,296.1M313.1,295.3L311.9,298.1M311.9,298.1L311.6,299.7M311.6,299.7L311.8,302.8M311.8,302.8L314.1,304.1M311.8,302.8L310.1,305.8M310.1,305.8L313.0,305.5M310.1,305.8L309.8,308.2M309.8,308.2L311.7,307.9M309.7,310.6L311.3,310.6M309.7,310.6L307.9,312.6M307.9,312.6L310.5,313.6M307.9,312.6L308.2,314.8M308.2,314.8L309.9,314.9M308.2,314.8L307.0,317.4M307.0,317.4L308.8,318.4M307.0,317.4L306.4,319.4M306.4,319.4L308.8,320.4M306.4,319.4L306.0,322.0M306.0,322.0L308.3,323.0M306.0,322.0L305.0,324.9M305.0,324.9L306.8,324.8M305.0,324.9L304.3,327.5M304.3,327.5L306.9,327.1M304.3,327.5L304.0,330.0M304.0,330.0L306.5,330.7M304.0,330.0L302.3,332.0M302.3,332.0L305.1,332.6M302.3,332.0L302.4,333.8M302.4,333.8L305.1,335.2M302.4,333.8L301.2,337.2M301.2,337.2L304.0,337.1M301.2,337.2L300.8,339.5M300.8,339.5L302.6,339.8M300.8,339.5L299.4,341.6M299.4,341.6L303.3,341.7M299.4,341.6L299.6,343.6M299.6,343.6L302.5,344.2M299.6,343.6L298.2,346.0M298.2,346.0L301.0,346.2M298.2,346.0L297.7,348.7M297.7,348.7L300.8,349.0M297.7,348.7L296.9,351.4M296.9,351.4L299.3,351.3M296.9,351.4L296.6,354.0M296.6,354.0L298.7,353.9M296.6,354.0L295.7,355.2M295.7,355.2L298.1,356.5M295.5,357.8L297.3,358.9M295.5,357.8L294.6,360.3M294.6,360.3L296.3,361.5M294.6,360.3L293.7,362.8M293.7,362.8L295.5,364.1M293.7,362.8L293.1,364.7M293.1,364.7L292.1,367.3M292.1,367.3L294.8,368.7M292.1,367.3L291.3,370.1M291.3,370.1L294.9,371.1M291.3,370.1L290.6,372.7M290.6,372.7L294.2,373.1M290.6,372.7L290.7,375.0M290.7,375.0L292.6,376.2M290.7,375.0L290.5,377.2M290.5,377.2L292.2,378.5M290.5,377.2L288.8,379.6M288.8,379.6L291.5,380.1M288.8,379.6L288.5,382.5M288.5,382.5L291.0,383.0M288.5,382.5L287.3,384.8M287.3,384.8L289.7,384.6M287.3,384.8L287.2,387.1M287.2,387.1L288.8,387.9M287.2,387.1L286.7,389.3M286.7,389.3L289.2,389.5M286.7,389.3L286.0,391.2M286.0,391.2L288.2,393.0M286.0,391.2L285.0,394.6M285.0,394.6L287.0,395.2M284.2,396.4L286.3,397.5M284.2,396.4L284.1,399.1M284.1,399.1L283.0,401.2M283.0,401.2L282.6,403.5M282.6,403.5L285.0,405.0M282.6,403.5L281.1,406.2M281.1,406.2L280.9,408.1M280.9,408.1L283.5,409.3M280.9,408.1L280.0,410.9M280.0,410.9L282.4,412.0M280.0,410.9L279.8,414.2M279.8,414.2L281.7,414.8M279.8,414.2L278.8,416.4M278.8,416.4L281.6,416.3M278.8,416.4L277.9,418.0M277.9,418.0L280.2,419.1M277.6,421.3L279.9,421.8M277.6,421.3L277.3,423.2M277.3,423.2L279.2,423.7M277.3,423.2L275.9,425.3M275.9,425.3L277.9,426.1M275.9,425.3L275.9,427.4M275.9,427.4L277.7,427.9M275.9,427.4L274.6,430.6M274.6,430.6L276.2,431.3M274.6,430.6L273.9,433.3M273.9,433.3L277.0,433.0M273.9,433.3L273.5,435.3M273.5,435.3L272.1,437.0M272.1,437.0L274.4,438.2M271.3,440.2L273.8,441.0M323.4,271.9L324.4,273.6M323.4,271.9L322.1,274.1M320.8,276.5L319.8,280.0M319.8,280.0L319.1,282.4M319.1,282.4L322.3,282.6M319.4,284.1L319.0,286.3M319.0,286.3L320.6,287.0M319.0,286.3L317.6,289.6M317.6,289.6L316.5,291.4M316.7,294.7L318.7,294.5M316.7,294.7L315.2,296.1M315.2,296.1L317.8,297.4M315.2,296.1L314.2,299.0M314.2,299.0L314.2,301.5M314.2,301.5L314.1,304.1M314.1,304.1L316.5,304.2M313.0,305.5L315.2,306.7M313.0,305.5L311.7,307.9M311.7,307.9L311.3,310.6M311.3,310.6L314.2,311.3M311.3,310.6L310.5,313.6M310.5,313.6L313.8,314.0M310.5,313.6L309.9,314.9M309.9,314.9L312.4,316.7M309.9,314.9L308.8,318.4M308.8,318.4L312.5,318.4M308.8,318.4L308.8,320.4M308.8,320.4L310.6,320.9M308.3,323.0L310.5,324.1M308.3,323.0L306.8,324.8M306.8,324.8L310.1,325.6M306.8,324.8L306.9,327.1M306.9,327.1L308.5,328.2M306.9,327.1L306.5,330.7M306.5,330.7L309.0,330.6M306.5,330.7L305.1,332.6M305.1,332.6L308.3,333.6M305.1,332.6L305.1,335.2M305.1,335.2L306.7,335.7M305.1,335.2L304.0,337.1M304.0,337.1L306.3,337.4M304.0,337.1L302.6,339.8M302.6,339.8L306.3,339.8M302.6,339.8L303.3,341.7M303.3,341.7L302.5,344.2M302.5,344.2L304.7,345.8M302.5,344.2L301.0,346.2M301.0,346.2L303.2,346.9M301.0,346.2L300.8,349.0M300.8,349.0L303.2,350.7M300.8,349.0L299.3,351.3M299.3,351.3L302.8,352.5M299.3,351.3L298.7,353.9M298.7,353.9L298.1,356.5M297.3,358.9L300.2,358.9M297.3,358.9L296.3,361.5M296.3,361.5L299.5,362.0M296.3,361.5L295.5,364.1M295.5,364.1L298.7,363.9M295.5,364.1L295.6,365.9M295.6,365.9L298.0,367.3M295.6,365.9L294.8,368.7M294.8,368.7L296.6,369.6M294.9,371.1L296.9,372.0M294.9,371.1L294.2,373.1M294.2,373.1L295.6,373.4M294.2,373.1L292.6,376.2M292.2,378.5L294.5,378.6M292.2,378.5L291.5,380.1M291.5,380.1L291.0,383.0M291.0,383.0L292.8,383.3M291.0,383.0L289.7,384.6M289.7,384.6L292.3,386.0M289.7,384.6L288.8,387.9M288.8,387.9L291.1,388.7M288.8,387.9L289.2,389.5M289.2,389.5L291.2,390.3M289.2,389.5L288.2,393.0M288.2,393.0L290.7,392.8M288.2,393.0L287.0,395.2M287.0,395.2L290.3,395.0M287.0,395.2L286.3,397.5M286.3,397.5L289.6,397.7M286.3,397.5L286.1,400.2M286.1,400.2L288.4,400.3M284.7,401.8L287.5,402.2M285.0,405.0L284.1,407.6M284.1,407.6L286.3,407.1M284.1,407.6L283.5,409.3M283.5,409.3L285.3,410.3M282.4,412.0L285.1,412.6M282.4,412.0L281.7,414.8M281.7,414.8L281.6,416.3M281.6,416.3L283.9,417.9M281.6,416.3L280.2,419.1M280.2,419.1L283.0,419.9M280.2,419.1L279.9,421.8M279.9,421.8L282.0,421.3M279.9,421.8L279.2,423.7M279.2,423.7L280.7,424.7M277.9,426.1L277.7,427.9M277.7,427.9L276.2,431.3M276.2,431.3L279.1,431.2M276.2,431.3L277.0,433.0M277.0,433.0L276.0,435.3M276.0,435.3L277.6,436.7M274.4,438.2L273.8,441.0M273.0,442.6L276.0,444.1M273.0,442.6L272.3,444.8M321.5,285.5L323.3,286.0M321.5,285.5L320.6,287.0M319.7,293.0L321.9,293.2M319.7,293.0L318.7,294.5M318.7,294.5L320.9,294.8M318.7,294.5L317.8,297.4M317.8,297.4L320.7,297.3M317.8,297.4L317.9,300.3M317.9,300.3L320.1,300.9M316.0,302.1L319.0,302.6M316.0,302.1L316.5,304.2M316.5,304.2L318.8,305.1M315.2,306.7L318.4,307.1M315.2,306.7L315.2,309.3M315.2,309.3L317.7,309.3M315.2,309.3L314.2,311.3M314.2,311.3L315.9,311.4M314.2,311.3L313.8,314.0M313.8,314.0L315.2,314.5M313.8,314.0L312.4,316.7M312.4,316.7L314.9,316.6M312.5,318.4L313.6,319.8M312.5,318.4L310.6,320.9M310.6,320.9L314.0,322.0M310.6,320.9L310.5,324.1M310.5,324.1L313.3,324.8M308.5,328.2L311.3,328.6M308.5,328.2L309.0,330.6M309.0,330.6L311.2,331.5M309.0,330.6L308.3,333.6M308.3,333.6L310.2,333.1M308.3,333.6L306.7,335.7M306.7,335.7L309.6,335.6M306.7,335.7L306.3,337.4M306.3,337.4L308.1,338.8M306.3,337.4L306.3,339.8M306.3,339.8L308.7,340.5M306.3,339.8L305.4,343.5M305.4,343.5L307.5,344.0M305.4,343.5L304.7,345.8M304.7,345.8L306.0,345.6M303.2,350.7L305.9,350.4M302.8,352.5L305.3,352.8M302.8,352.5L302.0,354.5M302.0,354.5L301.1,357.7M301.1,357.7L300.2,358.9M300.2,358.9L302.6,360.7M300.2,358.9L299.5,362.0M299.5,362.0L302.6,362.4M298.7,363.9L298.0,367.3M298.0,367.3L300.5,366.8M298.0,367.3L296.6,369.6M296.6,369.6L299.5,370.3M296.9,372.0L298.8,371.6M296.9,372.0L295.6,373.4M295.6,373.4L298.0,374.1M295.6,373.4L294.8,376.8M294.8,376.8L298.0,377.2M294.8,376.8L294.5,378.6M294.5,378.6L296.7,378.9M294.5,378.6L294.7,380.7M294.7,380.7L296.6,381.9M292.8,383.3L296.2,384.1M292.8,383.3L292.3,386.0M292.3,386.0L294.6,385.9M292.3,386.0L291.1,388.7M291.1,388.7L293.8,389.6M291.1,388.7L291.2,390.3M291.2,390.3L293.6,391.6M291.2,390.3L290.7,392.8M290.7,392.8L292.5,394.4M290.7,392.8L290.3,395.0M290.3,395.0L291.5,396.5M290.3,395.0L289.6,397.7M289.6,397.7L291.9,398.6M287.5,402.2L290.3,403.7M287.5,402.2L286.7,405.4M286.7,405.4L288.7,406.1M286.7,405.4L286.3,407.1M286.3,407.1L288.7,408.5M286.3,407.1L285.3,410.3M285.3,410.3L287.6,410.4M285.3,410.3L285.1,412.6M285.1,412.6L286.6,413.6M285.1,412.6L284.1,415.5M284.1,415.5L286.7,415.1M284.1,415.5L283.9,417.9M283.9,417.9L286.1,418.1M283.9,417.9L283.0,419.9M283.0,419.9L285.2,420.8M282.0,421.3L284.9,422.5M282.0,421.3L280.7,424.7M280.7,424.7L283.3,425.2M280.7,424.7L280.9,426.1M280.9,426.1L282.6,427.5M280.9,426.1L280.7,428.7M280.7,428.7L282.4,430.4M280.7,428.7L279.1,431.2M279.1,431.2L282.3,431.8M279.1,431.2L279.4,433.7M279.4,433.7L281.4,434.7M279.4,433.7L277.6,436.7M276.6,441.1L278.6,441.6M276.0,444.1L278.0,444.7M324.5,282.9L326.6,283.6M324.5,282.9L323.3,286.0M323.3,286.0L326.5,285.8M323.3,286.0L323.0,287.5M323.0,287.5L325.8,289.4M323.0,287.5L322.2,290.3M322.2,290.3L324.5,291.3M322.2,290.3L321.9,293.2M321.9,293.2L320.9,294.8M320.9,294.8L320.7,297.3M320.7,297.3L323.5,298.3M320.7,297.3L320.1,300.9M320.1,300.9L322.8,301.0M320.1,300.9L319.0,302.6M319.0,302.6L318.8,305.1M318.8,305.1L321.1,306.1M318.8,305.1L318.4,307.1M318.4,307.1L317.7,309.3M317.7,309.3L319.6,310.1M317.7,309.3L315.9,311.4M315.9,311.4L318.8,313.1M315.9,311.4L315.2,314.5M315.2,314.5L318.6,315.1M315.2,314.5L314.9,316.6M314.9,316.6L313.6,319.8M313.6,319.8L317.1,320.5M313.6,319.8L314.0,322.0M314.0,322.0L316.4,322.7M314.0,322.0L313.3,324.8M313.3,324.8L315.7,325.4M313.3,324.8L312.8,326.4M311.3,328.6L313.5,329.8M311.3,328.6L311.2,331.5M311.2,331.5L313.3,332.8M311.2,331.5L310.2,333.1M310.2,333.1L313.0,334.3M310.2,333.1L309.6,335.6M309.6,335.6L311.5,337.3M309.6,335.6L308.1,338.8M308.1,338.8L311.8,338.8M308.1,338.8L308.7,340.5M308.7,340.5L310.6,341.8M308.7,340.5L307.5,344.0M307.5,344.0L309.3,343.5M307.5,344.0L306.0,345.6M306.0,345.6L308.6,346.8M306.0,348.2L305.9,350.4M305.9,350.4L307.9,351.7M305.3,352.8L303.2,355.9M303.2,355.9L305.9,356.2M303.2,355.9L303.4,357.2M303.4,357.2L302.6,360.7M302.6,362.4L304.5,362.8M302.6,362.4L301.2,364.4M301.2,364.4L303.1,366.1M301.2,364.4L300.5,366.8M300.5,366.8L299.5,370.3M299.5,370.3L302.9,370.1M299.5,370.3L298.8,371.6M298.8,371.6L301.6,372.9M298.8,371.6L298.0,374.1M298.0,377.2L299.7,377.4M298.0,377.2L296.7,378.9M296.7,378.9L299.4,380.0M296.7,378.9L296.6,381.9M296.6,381.9L298.8,383.1M296.6,381.9L296.2,384.1M296.2,384.1L298.2,384.6M296.2,384.1L294.6,385.9M294.6,385.9L296.8,387.7M294.6,385.9L293.8,389.6M293.8,389.6L296.6,390.2M293.8,389.6L293.6,391.6M293.6,391.6L296.3,393.0M293.6,391.6L292.5,394.4M292.5,394.4L294.7,394.9M292.5,394.4L291.5,396.5M291.5,396.5L295.0,396.8M291.5,396.5L291.9,398.6M291.9,398.6L293.1,399.7M291.9,398.6L290.1,400.9M290.1,400.9L292.6,402.0M290.1,400.9L290.3,403.7M290.3,403.7L292.5,403.4M290.3,403.7L288.7,406.1M288.7,406.1L292.1,406.1M288.7,408.5L290.3,409.4M288.7,408.5L287.6,410.4M287.6,410.4L290.2,411.1M287.6,410.4L286.6,413.6M286.6,413.6L289.8,413.3M286.6,413.6L286.7,415.1M286.7,415.1L286.1,418.1M286.1,418.1L288.6,419.1M286.1,418.1L285.2,420.8M285.2,420.8L287.1,421.3M285.2,420.8L284.9,422.5M284.9,422.5L287.2,423.4M284.9,422.5L283.3,425.2M283.3,425.2L285.9,425.6M283.3,425.2L282.6,427.5M282.6,427.5L285.0,427.8M282.6,427.5L282.4,430.4M282.4,430.4L285.1,431.2M282.4,430.4L282.3,431.8M282.3,431.8L281.4,434.7M281.4,434.7L283.4,435.6M281.4,434.7L280.1,437.3M278.0,444.7L280.6,445.3M330.9,269.8L330.4,271.9M327.9,279.4L330.8,279.5M327.9,279.4L327.0,281.7M327.0,281.7L330.1,282.4M327.0,281.7L326.6,283.6M326.6,283.6L329.9,284.7M326.6,283.6L326.5,285.8M325.8,289.4L328.1,290.0M324.5,291.3L327.5,291.7M324.5,291.3L324.8,293.6M324.8,293.6L326.9,294.3M324.8,293.6L323.8,296.3M323.8,296.3L325.8,297.1M323.8,296.3L323.5,298.3M322.8,301.0L320.8,303.3M320.8,303.3L324.0,304.1M320.8,303.3L321.1,306.1M321.1,306.1L320.8,308.1M320.8,308.1L321.8,308.9M320.8,308.1L319.6,310.1M319.6,310.1L322.0,311.0M319.6,310.1L318.8,313.1M318.8,313.1L321.5,313.8M318.8,313.1L318.6,315.1M318.6,315.1L317.2,316.9M317.2,316.9L317.1,320.5M317.1,320.5L318.8,321.3M317.1,320.5L316.4,322.7M316.4,322.7L315.7,325.4M315.7,325.4L317.2,325.0M315.7,325.4L314.7,327.4M314.7,327.4L316.4,328.5M314.7,327.4L313.5,329.8M313.5,329.8L316.9,330.5M313.3,332.8L315.7,333.4M313.3,332.8L313.0,334.3M313.0,334.3L311.5,337.3M311.5,337.3L311.8,338.8M311.8,338.8L314.0,339.9M310.6,341.8L309.3,343.5M309.3,343.5L308.6,346.8M308.6,346.8L308.6,348.7M308.6,348.7L307.9,351.7M307.9,351.7L307.2,353.1M307.2,353.1L308.8,354.1M307.2,353.1L305.9,356.2M305.9,356.2L308.5,356.6M305.9,356.2L305.2,358.4M305.2,358.4L305.1,360.7M305.1,360.7L306.8,361.9M303.1,366.1L305.8,365.9M303.1,366.1L302.9,368.1M302.9,368.1L302.9,370.1M302.9,370.1L305.1,371.4M302.9,370.1L301.6,372.9M301.6,372.9L301.5,375.0M301.5,375.0L303.1,375.8M301.5,375.0L299.7,377.4M299.7,377.4L299.4,380.0M299.4,380.0L301.5,380.0M299.4,380.0L298.8,383.1M298.8,383.1L298.2,384.6M298.2,384.6L300.6,385.4M298.2,384.6L296.8,387.7M296.8,387.7L300.2,388.1M296.8,387.7L296.6,390.2M296.6,390.2L299.4,390.9M296.6,390.2L296.3,393.0M296.3,393.0L298.0,393.3M296.3,393.0L294.7,394.9M294.7,394.9L298.0,395.0M294.7,394.9L295.0,396.8M295.0,396.8L296.6,397.5M295.0,396.8L293.1,399.7M293.1,399.7L295.5,400.3M293.1,399.7L292.6,402.0M292.6,402.0L295.2,401.8M292.5,403.4L294.2,404.9M292.5,403.4L292.1,406.1M290.3,409.4L293.1,410.0M290.3,409.4L290.2,411.1M290.2,411.1L292.2,412.1M290.2,411.1L289.8,413.3M289.8,413.3L292.1,413.8M289.8,413.3L289.3,416.8M289.3,416.8L291.6,416.3M289.3,416.8L288.6,419.1M288.6,419.1L291.3,419.7M288.6,419.1L287.1,421.3M287.1,421.3L289.3,421.9M287.1,421.3L287.2,423.4M287.2,423.4L285.9,425.6M285.9,425.6L289.3,426.2M285.9,425.6L285.0,427.8M285.0,427.8L287.3,429.1M285.0,427.8L285.1,431.2M285.1,431.2L287.1,430.6M285.1,431.2L284.2,432.3M284.2,432.3L286.8,433.3M284.2,432.3L283.4,435.6M283.4,435.6L285.7,436.4M282.9,437.3L285.5,439.0M281.0,443.1L283.1,443.3M333.8,270.8L336.0,270.6M328.0,287.5L328.1,290.0M328.1,290.0L331.2,289.7M327.5,291.7L326.9,294.3M326.9,294.3L329.5,295.5M326.9,294.3L325.8,297.1M325.8,297.1L329.0,297.1M325.8,297.1L325.6,299.5M324.3,301.9L324.0,304.1M324.0,304.1L326.4,304.5M324.0,304.1L323.5,306.2M323.5,306.2L321.8,308.9M321.8,308.9L325.4,310.0M321.8,308.9L322.0,311.0M322.0,311.0L321.5,313.8M321.5,313.8L320.3,315.8M320.3,315.8L322.5,317.1M320.3,315.8L320.3,318.0M320.3,318.0L321.8,319.3M320.3,318.0L318.8,321.3M318.8,321.3L318.0,322.8M318.0,322.8L320.9,323.8M317.2,325.0L320.6,326.2M316.4,328.5L319.9,328.1M316.4,328.5L316.9,330.5M316.9,330.5L319.2,330.9M316.9,330.5L315.7,333.4M315.7,333.4L314.8,335.4M314.8,335.4L314.5,338.3M314.0,339.9L316.0,340.2M314.0,339.9L312.2,342.8M312.2,342.8L315.0,342.8M312.3,345.2L312.1,347.2M312.1,347.2L313.4,347.9M311.0,349.1L310.1,351.7M310.1,351.7L308.8,354.1M308.3,359.8L310.3,360.4M306.8,361.9L306.2,363.3M306.2,363.3L305.8,365.9M305.5,369.5L305.1,371.4M305.1,371.4L303.9,373.6M303.9,373.6L306.6,375.1M303.9,373.6L303.1,375.8M303.1,375.8L305.3,377.2M303.1,375.8L301.8,378.3M301.8,378.3L301.5,380.0M301.5,380.0L300.4,383.4M300.4,383.4L303.0,384.0M300.4,383.4L300.6,385.4M300.6,385.4L302.5,386.3M300.6,385.4L300.2,388.1M300.2,388.1L302.7,389.0M300.2,388.1L299.4,390.9M299.4,390.9L302.1,390.8M299.4,390.9L298.0,393.3M298.0,393.3L300.5,393.2M298.0,393.3L298.0,395.0M298.0,395.0L300.5,396.7M298.0,395.0L296.6,397.5M296.6,397.5L299.5,398.4M296.6,397.5L295.5,400.3M295.5,400.3L299.2,401.0M295.5,400.3L295.2,401.8M295.2,401.8L298.0,403.8M295.2,401.8L294.2,404.9M294.2,404.9L297.3,406.0M294.2,404.9L293.9,407.5M293.9,407.5L296.1,408.4M293.9,407.5L293.1,410.0M293.1,410.0L295.9,410.2M293.1,410.0L292.2,412.1M292.2,412.1L295.7,413.4M292.2,412.1L292.1,413.8M292.1,413.8L294.5,414.9M291.6,416.3L293.5,418.0M291.6,416.3L291.3,419.7M291.3,419.7L292.9,419.6M291.3,419.7L289.3,421.9M289.3,421.9L292.3,422.0M289.3,421.9L289.4,423.9M289.4,423.9L292.1,425.1M289.4,423.9L289.3,426.2M289.3,426.2L290.9,427.8M289.3,426.2L287.3,429.1M287.3,429.1L287.1,430.6M287.1,430.6L289.7,431.8M287.1,430.6L286.8,433.3M286.8,433.3L285.7,436.4M285.7,436.4L288.5,437.3M285.7,436.4L285.5,439.0M285.5,439.0L285.2,440.8M285.2,440.8L283.1,443.3M283.1,443.3L285.6,443.9M334.5,275.3L337.0,276.1M333.6,277.4L332.8,280.6M333.2,282.8L332.0,285.1M332.0,285.1L334.9,286.2M332.0,285.1L331.3,288.4M331.3,288.4L331.2,289.7M329.5,295.5L330.8,295.6M329.5,295.5L329.0,297.1M329.0,297.1L327.7,299.9M327.7,299.9L326.9,302.6M326.9,302.6L329.4,303.6M326.9,302.6L326.4,304.5M326.4,304.5L328.4,305.4M326.4,304.5L325.6,306.9M325.6,306.9L328.4,307.6M325.6,306.9L325.4,310.0M325.4,310.0L323.9,311.5M323.9,311.5L322.9,314.4M322.9,314.4L326.0,315.6M322.9,314.4L322.5,317.1M322.5,317.1L325.7,317.1M322.5,317.1L321.8,319.3M321.8,319.3L325.1,320.1M321.8,319.3L321.8,322.2M321.8,322.2L324.2,321.5M321.8,322.2L320.9,323.8M320.9,323.8L323.0,324.7M320.6,326.2L323.0,326.4M320.6,326.2L319.9,328.1M319.9,328.1L321.6,329.7M319.2,330.9L321.9,331.6M319.2,330.9L318.4,332.8M318.4,332.8L316.6,335.9M316.6,335.9L317.2,337.9M317.2,337.9L319.8,338.6M316.0,340.2L318.3,341.9M316.0,340.2L315.0,342.8M315.0,342.8L314.8,345.7M314.8,345.7L317.6,346.5M314.8,345.7L313.4,347.9M313.4,347.9L316.1,349.2M313.4,347.9L313.4,350.4M313.4,350.4L316.0,350.5M313.1,352.8L314.6,353.1M313.1,352.8L312.1,355.0M312.1,355.0L313.7,356.0M311.8,357.3L310.3,360.4M309.7,362.8L308.6,364.6M308.6,364.6L311.7,365.9M307.9,367.1L311.2,368.1M307.9,367.1L306.9,369.9M306.9,369.9L309.8,370.1M307.7,371.7L306.6,375.1M306.6,375.1L308.8,375.3M306.6,375.1L305.3,377.2M305.3,377.2L305.6,379.0M305.6,379.0L306.8,379.7M305.6,379.0L304.9,381.6M304.9,381.6L306.9,382.8M303.0,384.0L305.7,384.9M303.0,384.0L302.5,386.3M302.5,386.3L305.4,387.1M302.5,386.3L302.7,389.0M302.7,389.0L305.2,389.4M302.7,389.0L302.1,390.8M302.1,390.8L303.5,392.2M302.1,390.8L300.5,393.2M300.5,393.2L302.4,394.6M300.5,393.2L300.5,396.7M300.5,396.7L303.1,396.1M300.5,396.7L299.5,398.4M299.5,398.4L301.7,399.5M299.5,398.4L299.2,401.0M299.2,401.0L300.6,401.3M299.2,401.0L298.0,403.8M298.0,403.8L300.5,403.2M298.0,403.8L297.3,406.0M297.3,406.0L300.3,406.3M297.3,406.0L296.1,408.4M296.1,408.4L298.8,409.0M296.1,408.4L295.9,410.2M295.9,410.2L297.8,411.4M295.9,410.2L295.7,413.4M295.7,413.4L294.5,414.9M294.5,414.9L296.3,416.1M294.5,414.9L293.5,418.0M293.5,418.0L296.1,418.6M293.5,418.0L292.9,419.6M292.9,419.6L295.9,420.7M292.9,419.6L292.3,422.0M292.3,422.0L295.3,422.8M292.3,422.0L292.1,425.1M292.1,425.1L294.5,425.5M292.1,425.1L290.9,427.8M290.9,427.8L290.1,430.1M290.1,430.1L292.9,430.1M290.1,430.1L289.7,431.8M289.7,431.8L291.4,432.7M289.7,431.8L289.1,435.1M289.1,435.1L290.7,435.5M289.1,435.1L288.5,437.3M288.5,437.3L288.1,439.8M288.1,439.8L289.7,440.2M337.0,276.1L337.0,279.0M334.9,286.2L337.1,286.5M333.5,288.2L335.5,288.8M333.5,291.1L335.8,291.7M333.5,291.1L331.5,293.7M331.5,293.7L330.8,295.6M330.8,295.6L334.0,297.0M330.7,298.4L333.2,299.0M330.7,298.4L330.8,300.1M330.8,300.1L329.4,303.6M329.4,303.6L331.9,303.8M328.4,307.6L329.9,308.8M328.4,307.6L327.2,309.8M327.2,309.8L325.8,313.0M325.8,313.0L326.0,315.6M326.0,315.6L325.7,317.1M325.7,317.1L328.4,318.0M325.7,317.1L325.1,320.1M325.1,320.1L324.2,321.5M324.2,321.5L326.7,322.6M324.2,321.5L323.0,324.7M323.0,324.7L323.0,326.4M321.6,329.7L321.9,331.6M321.9,331.6L323.6,333.1M321.9,331.6L319.8,334.3M319.8,334.3L322.4,334.3M319.8,334.3L319.6,336.6M318.4,343.4L317.6,346.5M317.6,346.5L316.1,349.2M316.1,349.2L318.3,349.1M316.0,350.5L317.7,351.9M316.0,350.5L314.6,353.1M314.6,353.1L317.3,353.4M314.6,353.1L313.7,356.0M313.5,358.6L315.7,358.1M312.6,363.1L314.1,364.3M311.7,365.9L313.8,365.9M311.7,365.9L311.2,368.1M311.2,368.1L309.8,370.1M309.8,370.1L312.7,370.9M308.8,375.3L311.4,376.4M308.1,377.8L306.8,379.7M306.8,379.7L310.0,380.9M306.9,382.8L305.7,384.9M305.7,384.9L307.7,385.2M305.7,384.9L305.4,387.1M305.4,387.1L305.2,389.4M305.2,389.4L303.5,392.2M303.5,392.2L306.0,392.4M303.5,392.2L302.4,394.6M302.4,394.6L305.7,395.6M303.1,396.1L304.8,397.3M303.1,396.1L301.7,399.5M301.7,399.5L304.4,399.9M301.7,399.5L300.6,401.3M300.6,401.3L303.7,402.4M300.6,401.3L300.5,403.2M300.5,403.2L303.0,404.9M300.5,403.2L300.3,406.3M300.3,406.3L298.8,409.0M298.8,409.0L301.2,409.4M297.8,411.4L300.4,411.4M297.8,411.4L297.2,413.1M297.2,413.1L299.5,414.1M297.2,413.1L296.3,416.1M296.3,416.1L299.8,416.7M296.3,416.1L296.1,418.6M296.1,418.6L295.9,420.7M295.9,420.7L297.7,421.9M295.9,420.7L295.3,422.8M295.3,422.8L297.7,423.3M295.3,422.8L294.5,425.5M294.5,425.5L297.1,425.7M294.5,425.5L293.5,427.6M293.5,427.6L296.4,429.2M293.5,427.6L292.9,430.1M292.9,430.1L294.8,430.3M292.9,430.1L291.4,432.7M291.4,432.7L294.7,434.0M291.4,432.7L290.7,435.5M290.7,435.5L293.6,436.3M290.7,435.5L290.1,437.7M290.1,437.7L293.6,437.8M289.6,442.5L289.2,444.6M289.2,444.6L290.6,445.9M338.8,279.2L341.7,280.6M335.5,288.8L338.8,290.5M335.8,291.7L337.9,293.1M335.8,291.7L334.4,294.0M333.2,299.0L332.8,301.9M332.8,301.9L331.9,303.8M329.9,308.8L333.0,308.9M329.9,308.8L329.9,311.3M329.9,311.3L331.7,311.4M329.6,313.6L328.0,315.6M328.0,315.6L331.1,316.6M328.0,315.6L328.4,318.0M328.4,318.0L330.5,318.6M328.4,318.0L326.3,320.7M326.3,320.7L326.7,322.6M324.8,325.6L328.5,326.3M325.6,327.2L326.9,328.2M325.6,327.2L324.3,329.5M324.3,329.5L326.1,331.2M324.3,329.5L323.6,333.1M323.6,333.1L325.2,333.1M323.6,333.1L322.4,334.3M322.2,339.3L324.2,340.1M322.2,339.3L320.4,342.6M320.5,344.8L321.9,345.1M318.3,349.1L317.7,351.9M315.0,361.2L314.1,364.3M313.8,365.9L316.5,366.5M312.6,369.0L312.7,370.9M311.4,376.4L310.4,378.6M310.4,378.6L313.0,379.2M310.4,378.6L310.0,380.9M310.0,380.9L312.5,381.4M309.2,382.5L312.0,383.2M309.2,382.5L307.7,385.2M307.7,385.2L310.6,385.8M307.5,387.4L309.4,388.1M307.5,387.4L307.5,390.4M307.5,390.4L309.3,391.0M307.5,390.4L306.0,392.4M306.0,392.4L305.7,395.6M305.7,395.6L307.3,395.4M305.7,395.6L304.8,397.3M304.8,397.3L307.2,397.7M304.8,397.3L304.4,399.9M304.4,399.9L306.6,400.4M303.7,402.4L305.6,402.7M303.7,402.4L303.0,404.9M303.0,404.9L304.7,405.5M303.0,404.9L301.9,406.5M301.9,406.5L304.5,407.4M301.2,409.4L303.3,410.0M301.2,409.4L300.4,411.4M300.4,411.4L302.8,412.8M300.4,411.4L299.5,414.1M299.5,414.1L302.1,414.5M299.5,414.1L299.8,416.7M299.8,416.7L302.0,417.2M299.8,416.7L298.7,419.4M298.7,419.4L300.8,419.8M298.7,419.4L297.7,421.9M297.7,421.9L300.6,422.8M297.7,421.9L297.7,423.3M297.7,423.3L299.1,423.8M297.7,423.3L297.1,425.7M297.1,425.7L298.7,426.3M297.1,425.7L296.4,429.2M296.4,429.2L298.6,429.9M296.4,429.2L294.8,430.3M294.8,430.3L297.0,431.7M294.8,430.3L294.7,434.0M294.7,434.0L296.3,433.7M294.7,434.0L293.6,436.3M293.6,436.3L296.4,437.0M293.6,436.3L293.6,437.8M293.6,437.8L292.5,440.5M292.5,440.5L291.9,443.4M291.9,443.4L294.0,443.2M290.6,445.9L290.4,448.2M290.4,448.2L292.4,447.7M340.0,285.7L342.2,285.9M337.9,293.1L337.2,294.2M336.6,296.5L335.4,299.6M335.4,299.6L335.5,301.9M335.5,301.9L337.1,302.6M334.1,304.1L336.9,305.7M333.1,306.8L335.6,307.2M333.1,306.8L333.0,308.9M333.0,308.9L334.6,309.5M333.0,308.9L331.7,311.4M331.7,311.4L335.2,311.7M331.7,311.4L331.4,313.3M331.1,316.6L330.5,318.6M330.5,318.6L332.1,319.9M329.6,320.8L328.1,323.9M328.5,326.3L331.1,326.6M326.9,328.2L330.0,329.6M326.9,328.2L326.1,331.2M326.1,331.2L325.2,333.1M324.7,337.7L324.2,340.1M322.5,342.8L325.8,343.1M321.5,348.0L321.5,350.4M321.5,350.4L323.0,350.7M313.9,376.7L316.6,376.7M313.9,376.7L313.0,379.2M313.0,379.2L314.7,379.8M313.0,379.2L312.5,381.4M312.5,381.4L312.0,383.2M312.0,383.2L310.6,385.8M310.6,385.8L312.8,387.0M310.6,385.8L309.4,388.1M309.4,388.1L313.1,389.0M309.4,388.1L309.3,391.0M309.3,391.0L311.4,391.2M309.3,391.0L308.6,392.7M308.6,392.7L311.6,393.9M308.6,392.7L307.3,395.4M307.3,395.4L310.3,395.7M307.3,395.4L307.2,397.7M307.2,397.7L309.8,399.2M306.6,400.4L308.9,400.6M306.6,400.4L305.6,402.7M305.6,402.7L304.7,405.5M304.7,405.5L307.9,405.3M304.7,405.5L304.5,407.4M304.5,407.4L306.7,407.8M304.5,407.4L303.3,410.0M303.3,410.0L306.4,410.6M302.8,412.8L306.1,412.8M302.8,412.8L302.1,414.5M302.1,414.5L302.0,417.2M302.0,417.2L304.3,418.2M300.8,419.8L303.3,420.2M300.8,419.8L300.6,422.8M300.6,422.8L302.3,423.1M299.1,423.8L302.7,424.7M299.1,423.8L298.7,426.3M298.7,426.3L301.2,427.7M298.7,426.3L298.6,429.9M298.6,429.9L300.1,429.6M298.6,429.9L297.0,431.7M297.0,431.7L300.2,432.6M297.0,431.7L296.3,433.7M296.3,433.7L299.7,434.4M296.3,433.7L296.4,437.0M296.4,437.0L298.8,437.1M296.4,437.0L294.9,438.4M294.9,438.4L298.2,439.7M294.9,438.4L295.2,441.0M295.2,441.0L297.2,441.4M294.0,443.2L295.8,444.5M339.6,295.1L341.6,295.7M339.3,297.7L337.4,299.8M337.4,299.8L337.1,302.6M336.9,305.7L338.9,306.3M336.9,305.7L335.6,307.2M335.6,307.2L334.6,309.5M332.1,319.9L334.9,320.6M331.5,321.2L334.2,322.4M325.8,343.1L327.6,344.0M319.2,365.0L321.6,366.2M319.2,365.0L318.7,367.0M318.7,367.0L321.0,368.6M318.7,367.0L317.7,369.8M316.4,374.2L319.2,375.9M314.7,381.4L317.2,382.2M314.7,381.4L313.4,384.2M312.8,387.0L315.7,387.8M312.8,387.0L313.1,389.0M313.1,389.0L314.2,389.8M313.1,389.0L311.4,391.2M311.4,391.2L314.9,391.8M311.4,391.2L311.6,393.9M311.6,393.9L313.9,395.0M311.6,393.9L310.3,395.7M310.3,395.7L312.3,396.7M310.3,395.7L309.8,399.2M309.8,399.2L312.7,399.2M309.8,399.2L308.9,400.6M308.9,400.6L312.2,401.4M308.9,400.6L307.9,403.9M307.9,403.9L307.9,405.3M307.9,405.3L309.3,407.1M307.9,405.3L306.7,407.8M306.7,407.8L306.4,410.6M306.4,410.6L308.6,411.3M306.4,410.6L306.1,412.8M306.1,412.8L308.4,414.4M304.8,415.5L306.9,415.9M304.8,415.5L304.3,418.2M304.3,418.2L306.7,418.3M304.3,418.2L303.3,420.2M303.3,420.2L305.8,421.2M303.3,420.2L302.3,423.1M302.3,423.1L305.6,423.5M302.3,423.1L302.7,424.7M302.7,424.7L304.4,425.6M302.7,424.7L301.2,427.7M301.2,427.7L303.4,428.1M301.2,427.7L300.1,429.6M300.1,429.6L302.6,430.2M300.1,429.6L300.2,432.6M300.2,432.6L299.7,434.4M299.7,434.4L301.0,435.5M299.7,434.4L298.8,437.1M298.8,437.1L300.4,438.1M298.8,437.1L298.2,439.7M298.2,439.7L297.2,441.4M295.8,444.5L299.4,445.7M295.8,444.5L295.6,446.8M341.6,295.7L341.3,298.0M338.9,306.3L337.9,308.3M338.0,310.4L340.5,311.9M336.6,312.9L338.7,313.7M336.6,312.9L336.5,314.8M336.5,314.8L338.0,315.8M336.5,314.8L335.9,318.3M335.9,318.3L338.4,318.3M335.9,318.3L334.9,320.6M334.2,322.4L336.3,322.5M332.6,326.7L331.7,330.0M330.2,334.5L329.3,337.4M326.0,353.4L323.8,356.3M323.8,356.3L324.0,358.8M319.5,372.6L319.2,375.9M318.1,377.8L320.6,378.0M317.2,382.2L319.6,383.7M317.2,382.2L316.1,384.9M316.1,384.9L318.7,386.0M316.1,384.9L315.7,387.8M315.7,387.8L314.2,389.8M314.2,389.8L316.7,390.4M314.2,389.8L314.9,391.8M314.9,391.8L316.3,392.6M314.9,391.8L313.9,395.0M313.9,395.0L315.5,394.8M313.9,395.0L312.3,396.7M312.3,396.7L314.9,397.0M312.3,396.7L312.7,399.2M312.7,399.2L315.1,399.5M312.7,399.2L312.2,401.4M312.2,401.4L313.5,401.8M312.2,401.4L311.4,403.8M311.4,403.8L313.1,404.6M311.4,403.8L309.3,407.1M309.3,407.1L312.9,407.2M309.3,409.7L311.5,410.1M309.3,409.7L308.6,411.3M308.6,411.3L311.4,412.4M308.6,411.3L308.4,414.4M308.4,414.4L310.3,415.0M308.4,414.4L306.9,415.9M306.9,415.9L310.2,417.0M306.9,415.9L306.7,418.3M306.7,418.3L308.4,419.7M306.7,418.3L305.8,421.2M305.8,421.2L308.4,421.5M305.8,421.2L305.6,423.5M305.6,423.5L307.6,424.7M305.6,423.5L304.4,425.6M304.4,425.6L306.7,426.1M304.4,425.6L303.4,428.1M303.4,428.1L305.9,429.1M303.4,428.1L302.6,430.2M302.6,430.2L305.0,430.7M302.6,430.2L302.5,433.0M302.5,433.0L304.4,433.1M302.5,433.0L301.0,435.5M301.0,435.5L300.4,438.1M300.4,438.1L303.4,439.1M300.4,438.1L300.7,440.0M300.7,440.0L302.3,440.5M300.7,440.0L299.4,442.0M299.4,442.0L301.5,442.8M299.4,442.0L299.4,445.7M299.4,445.7L301.3,445.4M297.7,451.8L298.8,452.1M347.3,287.3L346.5,289.9M346.5,289.9L347.9,290.7M341.5,306.3L344.4,306.5M341.5,306.3L340.4,308.7M340.5,311.9L338.7,313.7M338.7,313.7L341.7,313.7M336.3,322.5L335.4,325.9M329.7,344.8L332.6,345.2M328.7,349.9L331.4,350.1M319.6,383.7L321.9,384.6M319.6,383.7L318.7,386.0M318.7,386.0L320.9,385.8M317.7,387.7L319.9,388.6M317.7,387.7L316.7,390.4M316.7,390.4L319.9,391.0M316.3,392.6L319.5,393.9M316.3,392.6L315.5,394.8M315.5,394.8L318.7,396.4M315.5,394.8L314.9,397.0M314.9,397.0L318.3,398.1M314.9,397.0L315.1,399.5M315.1,399.5L317.5,400.2M315.1,399.5L313.5,401.8M313.5,401.8L316.7,403.7M313.5,401.8L313.1,404.6M313.1,404.6L315.7,406.0M313.1,404.6L312.9,407.2M312.9,407.2L315.0,407.5M312.9,407.2L311.5,410.1M311.5,410.1L314.2,410.0M311.5,410.1L311.4,412.4M311.4,412.4L310.3,415.0M310.3,415.0L312.6,415.0M310.3,415.0L310.2,417.0M310.2,417.0L312.0,417.5M310.2,417.0L308.4,419.7M308.4,419.7L308.4,421.5M308.4,421.5L311.0,423.1M308.4,421.5L307.6,424.7M307.6,424.7L310.3,424.9M307.6,424.7L306.7,426.1M306.7,426.1L309.5,426.6M306.7,426.1L305.9,429.1M305.9,429.1L305.0,430.7M305.0,430.7L308.5,432.3M305.0,430.7L304.4,433.1M304.4,433.1L307.7,433.9M304.4,433.1L304.0,436.4M304.0,436.4L306.4,436.6M304.0,436.4L303.4,439.1M303.4,439.1L306.3,439.9M303.4,439.1L302.3,440.5M302.3,440.5L305.3,441.8M301.5,442.8L304.6,444.0M301.3,445.4L303.1,446.7M300.2,448.0L302.6,449.0M300.2,448.0L300.7,450.3M298.8,452.1L301.7,454.1M349.8,285.7L349.1,288.5M345.9,301.8L344.9,304.4M343.2,309.4L346.0,310.2M343.2,309.4L342.1,311.6M341.7,313.7L343.7,314.3M341.7,313.7L341.3,316.8M341.3,316.8L343.0,317.4M341.3,316.8L340.4,319.8M335.8,334.1L338.9,334.1M326.1,366.5L328.7,367.8M322.6,381.7L321.9,384.6M319.9,388.6L323.5,389.3M319.9,388.6L319.9,391.0M319.9,391.0L322.4,391.7M319.9,391.0L319.5,393.9M319.5,393.9L320.9,394.8M319.5,393.9L318.7,396.4M318.7,396.4L321.1,397.2M318.7,396.4L318.3,398.1M318.3,398.1L317.5,400.2M317.5,400.2L319.8,401.5M317.5,400.2L316.7,403.7M316.7,403.7L318.2,403.3M316.7,403.7L315.7,406.0M315.7,406.0L318.3,406.1M315.7,406.0L315.0,407.5M315.0,407.5L317.3,408.1M315.0,407.5L314.2,410.0M314.2,410.0L316.2,411.0M314.2,410.0L312.8,412.9M312.8,412.9L315.9,413.5M312.8,412.9L312.6,415.0M312.6,415.0L314.4,415.8M312.6,415.0L312.0,417.5M312.0,417.5L314.1,418.9M312.0,417.5L311.2,419.8M311.2,419.8L313.9,420.4M311.2,419.8L311.0,423.1M311.0,423.1L312.6,423.4M311.0,423.1L310.3,424.9M310.3,424.9L312.3,426.1M310.3,424.9L309.5,426.6M309.5,426.6L311.2,427.6M309.5,426.6L308.9,429.6M308.9,429.6L311.2,430.9M308.5,432.3L310.4,432.9M308.5,432.3L307.7,433.9M307.7,433.9L309.2,435.2M307.7,433.9L306.4,436.6M306.4,436.6L309.1,437.9M306.4,436.6L306.3,439.9M306.3,439.9L308.7,440.1M306.3,439.9L305.3,441.8M305.3,441.8L307.7,442.2M305.3,441.8L304.6,444.0M304.6,444.0L307.2,444.8M304.6,444.0L303.1,446.7M303.1,446.7L306.7,447.6M302.6,449.0L301.6,451.4M301.6,451.4L304.4,451.6M348.9,296.1L352.3,296.0M347.1,303.3L346.1,305.8M343.0,317.4L342.4,319.4M342.4,319.4L344.7,320.4M342.1,322.3L341.8,324.1M341.8,324.1L341.2,326.5M325.2,381.7L326.8,382.8M322.8,386.7L326.3,387.5M322.8,386.7L323.5,389.3M323.5,389.3L324.7,390.0M323.5,389.3L322.4,391.7M322.4,391.7L320.9,394.8M320.9,394.8L324.5,394.9M321.1,397.2L323.6,397.2M321.1,397.2L320.3,399.4M320.3,399.4L323.1,399.5M320.3,399.4L319.8,401.5M319.8,401.5L321.1,402.6M319.8,401.5L318.2,403.3M318.2,403.3L320.4,404.1M318.2,403.3L318.3,406.1M318.3,406.1L317.3,408.1M317.3,408.1L320.0,409.3M316.2,411.0L319.5,411.6M316.2,411.0L315.9,413.5M315.9,413.5L317.8,414.0M315.9,413.5L314.4,415.8M314.4,415.8L317.4,417.2M314.4,415.8L314.1,418.9M314.1,418.9L316.6,419.6M314.1,418.9L313.9,420.4M313.9,420.4L316.2,420.8M313.9,420.4L312.6,423.4M312.6,423.4L315.3,423.5M312.6,423.4L312.3,426.1M312.3,426.1L314.7,426.1M312.3,426.1L311.2,427.6M311.2,427.6L314.0,428.7M311.2,427.6L311.2,430.9M311.2,430.9L310.4,432.9M310.4,432.9L312.4,433.8M310.4,432.9L309.2,435.2M309.1,437.9L310.8,437.6M309.1,437.9L308.7,440.1M308.7,440.1L311.1,441.0M308.7,440.1L307.7,442.2M307.2,444.8L309.4,446.1M307.2,444.8L306.7,447.6M306.7,447.6L309.0,447.8M330.1,373.8L329.5,375.7M327.3,380.5L326.8,382.8M326.0,384.6L328.6,385.9M326.0,384.6L326.3,387.5M326.3,387.5L324.7,390.0M324.7,390.0L327.4,391.4M324.7,390.0L324.3,392.0M324.3,392.0L327.2,393.0M324.3,392.0L324.5,394.9M324.5,394.9L326.6,395.4M324.5,394.9L323.6,397.2M323.6,397.2L325.5,397.4M323.6,397.2L323.1,399.5M323.1,399.5L325.2,400.6M323.1,399.5L321.1,402.6M321.1,402.6L324.1,402.4M321.1,402.6L320.4,404.1M320.4,404.1L324.0,405.2M320.4,404.1L320.6,407.2M320.6,407.2L323.1,407.3M320.6,407.2L320.0,409.3M320.0,409.3L322.1,409.3M320.0,409.3L319.5,411.6M319.5,411.6L321.5,412.4M319.5,411.6L317.8,414.0M317.8,414.0L320.9,415.0M317.8,414.0L317.4,417.2M316.6,419.6L320.1,419.2M316.6,419.6L316.2,420.8M316.2,420.8L318.6,421.5M316.2,420.8L315.3,423.5M315.3,423.5L318.3,424.0M315.3,423.5L314.7,426.1M314.7,426.1L314.0,428.7M314.0,428.7L316.9,429.6M314.0,428.7L312.9,430.9M312.9,430.9L315.7,431.3M312.9,430.9L312.4,433.8M312.4,433.8L315.5,434.8M312.4,433.8L311.7,435.4M311.7,435.4L310.8,437.6M310.8,437.6L314.0,438.5M310.8,437.6L311.1,441.0M311.1,441.0L313.3,441.6M311.1,441.0L310.3,443.0M310.3,443.0L311.7,444.1M310.3,443.0L309.4,446.1M309.4,446.1L311.6,446.7M344.4,330.7L343.8,333.7M331.0,376.5L330.5,378.1M330.2,381.0L333.3,381.4M330.2,381.0L329.1,383.2M329.1,383.2L332.6,384.7M327.7,388.6L327.4,391.4M327.4,391.4L330.5,391.6M327.2,393.0L329.4,393.4M327.2,393.0L326.6,395.4M326.6,395.4L325.5,397.4M325.5,397.4L325.2,400.6M325.2,400.6L327.8,401.1M324.1,402.4L326.0,403.7M324.1,402.4L324.0,405.2M324.0,405.2L326.4,406.2M324.0,405.2L323.1,407.3M323.1,407.3L322.1,409.3M322.1,409.3L323.8,410.6M322.1,409.3L321.5,412.4M321.5,412.4L324.0,413.2M321.5,412.4L320.9,415.0M320.9,415.0L322.7,415.4M320.9,415.0L320.1,417.4M320.1,417.4L322.0,418.5M320.1,417.4L320.1,419.2M320.1,419.2L322.1,420.6M320.1,419.2L318.6,421.5M318.6,421.5L320.9,422.6M318.6,421.5L318.3,424.0M318.3,424.0L320.6,425.1M318.3,424.0L317.4,426.2M317.4,426.2L319.5,428.1M316.9,429.6L318.1,430.0M316.9,429.6L315.7,431.3M315.7,431.3L317.7,432.9M315.7,431.3L315.5,434.8M315.5,434.8L317.3,435.1M315.5,434.8L313.8,436.2M313.8,436.2L316.9,437.6M313.8,436.2L314.0,438.5M314.0,438.5L316.4,439.6M314.0,438.5L313.3,441.6M313.3,441.6L311.7,444.1M311.7,444.1L314.2,444.2M311.7,444.1L311.6,446.7M311.6,446.7L314.7,446.3M311.6,446.7L310.6,448.6M310.6,448.6L313.3,448.6M310.1,450.9L312.6,451.1M310.1,450.9L309.9,453.7M333.3,381.4L335.1,383.2M331.3,386.6L333.6,388.0M330.5,391.6L332.4,392.4M328.3,396.0L328.0,399.0M328.0,399.0L330.0,398.8M328.0,399.0L327.8,401.1M327.8,401.1L329.2,401.6M327.8,401.1L326.0,403.7M326.0,403.7L328.5,403.8M326.0,403.7L326.4,406.2M326.4,406.2L328.0,407.2M326.4,406.2L324.6,408.0M324.6,408.0L327.2,408.4M324.6,408.0L323.8,410.6M323.8,410.6L326.8,410.9M323.8,410.6L324.0,413.2M324.0,413.2L325.9,413.7M324.0,413.2L322.7,415.4M322.7,415.4L325.7,416.9M322.7,415.4L322.0,418.5M322.0,418.5L324.4,418.8M322.1,420.6L324.8,420.8M322.1,420.6L320.9,422.6M320.9,422.6L323.8,424.0M320.9,422.6L320.6,425.1M320.6,425.1L323.1,425.5M320.6,425.1L319.5,428.1M319.5,428.1L321.9,427.7M319.5,428.1L318.1,430.0M318.1,430.0L321.3,431.0M318.1,430.0L317.7,432.9M317.7,432.9L321.1,433.3M317.7,432.9L317.3,435.1M317.3,435.1L316.9,437.6M316.9,437.6L318.5,438.3M316.9,437.6L316.4,439.6M316.4,439.6L318.1,439.8M315.8,442.2L317.6,442.8M314.2,444.2L314.7,446.3M314.7,446.3L316.9,447.1M314.7,446.3L313.3,448.6M313.3,448.6L316.4,449.8M333.9,384.9L333.6,388.0M333.4,390.4L335.4,390.3M333.4,390.4L332.4,392.4M331.4,397.2L330.0,398.8M330.0,398.8L329.2,401.6M329.2,401.6L331.7,402.0M329.2,401.6L328.5,403.8M328.5,403.8L331.9,405.1M328.5,403.8L328.0,407.2M328.0,407.2L330.7,407.5M328.0,407.2L327.2,408.4M327.2,408.4L330.5,410.0M327.2,408.4L326.8,410.9M326.8,410.9L329.3,412.6M326.8,410.9L325.9,413.7M325.9,413.7L325.7,416.9M325.7,416.9L328.1,416.6M325.7,416.9L324.4,418.8M324.4,418.8L326.8,419.6M324.4,418.8L324.8,420.8M324.8,420.8L326.1,422.2M324.8,420.8L323.8,424.0M323.8,424.0L325.3,423.6M323.8,424.0L323.1,425.5M323.1,425.5L325.1,426.5M323.1,425.5L321.9,427.7M321.9,427.7L325.1,428.8M321.3,431.0L323.6,431.0M321.3,431.0L321.1,433.3M321.1,433.3L322.6,434.0M321.1,433.3L320.4,436.0M320.4,436.0L323.2,435.7M320.4,436.0L318.5,438.3M318.5,438.3L322.1,438.7M318.5,438.3L318.1,439.8M318.1,439.8L320.5,440.1M317.6,442.8L320.4,443.4M317.6,442.8L317.4,445.6M317.4,445.6L320.2,445.5M316.9,447.1L318.2,448.4M316.4,449.8L318.7,450.3M316.4,449.8L315.7,452.3M335.6,387.7L337.9,389.2M334.9,394.9L333.8,398.5M333.8,398.5L335.9,397.9M333.8,398.5L333.2,399.6M333.2,399.6L331.7,402.0M331.7,402.0L333.7,403.4M331.7,402.0L331.9,405.1M331.9,405.1L333.5,406.1M331.9,405.1L330.7,407.5M330.7,407.5L332.8,407.6M330.7,407.5L330.5,410.0M330.5,410.0L332.8,410.1M330.5,410.0L329.3,412.6M329.3,412.6L328.2,415.0M328.2,415.0L330.4,414.9M328.2,415.0L328.1,416.6M328.1,416.6L329.6,417.9M328.1,416.6L326.8,419.6M326.8,419.6L329.8,420.4M326.1,422.2L325.3,423.6M325.3,423.6L327.7,424.5M325.3,423.6L325.1,426.5M325.1,426.5L326.9,427.2M325.1,426.5L325.1,428.8M325.1,428.8L326.5,429.0M325.1,428.8L323.6,431.0M323.6,431.0L325.7,431.6M322.6,434.0L325.4,434.3M323.2,435.7L324.7,436.3M322.1,438.7L324.4,439.6M322.1,438.7L320.5,440.1M320.5,440.1L323.5,441.6M320.5,440.1L320.4,443.4M320.2,445.5L318.2,448.4M338.3,391.9L337.1,393.1M335.9,397.9L335.2,400.8M333.7,403.4L336.9,403.2M333.7,403.4L333.5,406.1M333.5,406.1L335.6,405.8M333.5,406.1L332.8,407.6M332.8,407.6L335.7,408.1M332.8,407.6L332.8,410.1M332.8,410.1L335.0,410.8M332.8,410.1L330.9,413.1M330.9,413.1L334.4,413.4M330.9,413.1L330.4,414.9M330.4,414.9L333.6,415.4M330.4,414.9L329.6,417.9M329.6,417.9L332.5,418.6M329.6,417.9L329.8,420.4M329.8,420.4L331.9,421.3M329.8,420.4L328.7,421.9M328.7,421.9L331.1,422.7M328.7,421.9L327.7,424.5M327.7,424.5L330.9,425.4M326.9,427.2L330.0,427.4M326.9,427.2L326.5,429.0M326.5,429.0L329.2,430.8M326.5,429.0L325.7,431.6M325.7,431.6L328.6,432.8M325.4,434.3L328.4,434.9M325.4,434.3L324.7,436.3M324.7,436.3L324.4,439.6M324.4,439.6L325.9,439.4M324.4,439.6L323.5,441.6M323.5,441.6L326.2,442.1M322.8,444.8L324.8,444.6M321.6,448.6L320.6,451.2M320.6,451.2L322.3,452.4M337.6,400.9L336.9,403.2M336.9,403.2L338.8,404.3M336.9,403.2L335.6,405.8M335.6,405.8L338.3,407.0M335.6,405.8L335.7,408.1M335.7,408.1L337.8,409.6M335.7,408.1L335.0,410.8M334.4,413.4L336.5,414.9M334.4,413.4L333.6,415.4M333.6,415.4L336.5,416.1M333.6,415.4L332.5,418.6M332.5,418.6L334.7,418.6M332.5,418.6L331.9,421.3M331.9,421.3L334.7,420.8M331.9,421.3L331.1,422.7M331.1,422.7L334.1,423.7M331.1,422.7L330.9,425.4M330.9,425.4L332.6,426.6M330.9,425.4L330.0,427.4M330.0,427.4L332.7,428.9M330.0,427.4L329.2,430.8M329.2,430.8L332.3,430.9M328.6,432.8L330.3,433.9M328.6,432.8L328.4,434.9M328.4,434.9L330.7,436.5M328.4,434.9L327.5,438.4M325.9,439.4L328.3,440.0M325.9,439.4L326.2,442.1M326.2,442.1L328.2,442.6M326.2,442.1L324.8,444.6M324.8,444.6L328.0,445.0M324.8,444.6L323.9,447.2M323.9,447.2L324.4,449.3M340.1,402.5L341.8,402.6M338.8,404.3L341.3,405.2M338.3,407.0L337.8,409.6M337.8,409.6L337.1,412.0M337.1,412.0L338.7,412.9M336.5,414.9L338.4,414.1M336.5,414.9L336.5,416.1M336.5,416.1L338.4,417.3M336.5,416.1L334.7,418.6M334.7,418.6L337.5,420.3M334.7,418.6L334.7,420.8M334.7,420.8L334.1,423.7M334.1,423.7L336.4,424.8M332.6,426.6L335.0,426.2M332.6,426.6L332.7,428.9M332.7,428.9L335.2,428.8M332.7,428.9L332.3,430.9M332.3,430.9L330.3,433.9M330.3,433.9L333.3,434.3M330.3,433.9L330.7,436.5M330.7,436.5L333.0,436.9M330.2,438.1L332.2,438.8M330.2,438.1L328.3,440.0M328.2,442.6L328.0,445.0M327.3,447.6L329.6,448.3M326.2,450.0L325.8,452.2M343.1,400.6L341.8,402.6M341.8,402.6L344.7,404.3M340.4,408.0L342.7,408.8M339.6,410.4L338.7,412.9M338.7,412.9L338.4,414.1M338.4,414.1L338.4,417.3M338.4,417.3L337.5,420.3M337.5,420.3L339.9,419.8M337.5,420.3L337.0,422.9M337.0,422.9L339.4,422.7M336.4,424.8L335.0,426.2M335.0,426.2L337.4,427.6M335.0,426.2L335.2,428.8M335.2,428.8L337.0,430.4M335.2,428.8L333.9,432.1M333.9,432.1L336.1,432.5M333.9,432.1L333.3,434.3M332.2,438.8L334.1,439.3M331.8,441.6L333.3,442.4M331.8,441.6L330.2,443.5M330.2,443.5L330.4,446.6M330.4,446.6L331.8,447.2M328.2,452.9L326.9,455.5M342.0,410.5L342.3,413.1M341.2,414.9L340.3,417.3M340.3,417.3L342.5,418.9M340.3,417.3L339.9,419.8M339.9,419.8L341.8,420.6M339.9,419.8L339.4,422.7M339.4,422.7L341.5,422.8M339.4,422.7L339.0,425.1M339.0,425.1L337.4,427.6M337.4,427.6L337.0,430.4M337.0,430.4L336.1,432.5M336.1,432.5L338.9,432.8M336.1,432.5L335.7,435.3M335.5,437.6L336.8,437.8M333.3,442.4L332.6,444.5M332.6,444.5L331.8,447.2M331.8,447.2L335.0,447.3M343.9,417.0L345.3,416.9M343.9,417.0L342.5,418.9M341.5,422.8L344.1,424.4M341.5,422.8L341.3,425.7M341.3,425.7L343.3,425.9M341.3,425.7L340.0,428.5M340.0,428.5L342.1,428.4M339.9,430.5L341.5,431.5M339.9,430.5L338.9,432.8M338.9,432.8L341.1,433.4M337.6,435.3L336.8,437.8M344.1,424.4L346.7,425.0M342.1,428.4L345.2,430.0M339.8,440.5L341.8,442.3M350.0,413.6L348.6,415.7M345.2,430.0L347.7,430.3M345.2,430.0L344.8,432.1M343.7,433.9L343.0,436.6M343.0,436.6L345.0,437.7" stroke="#9a9997" stroke-width="0.9" fill="none"/>
<rect x="236" y="362" width="6" height="5" fill="#c2dfa6"/>
<rect x="200" y="412" width="5" height="4" fill="#c2dfa6"/>
<rect x="330" y="405" width="5" height="6" fill="#c2dfa6"/>
<rect x="255" y="390" width="4" height="4" fill="#c2dfa6"/>
<rect x="300" y="437" width="6" height="4" fill="#c2dfa6"/>
<rect x="170" y="430" width="5" height="3" fill="#c2dfa6"/>
<rect x="110" y="425" width="4" height="3" fill="#c2dfa6"/>
<rect x="60" y="420" width="4" height="3" fill="#c2dfa6"/>
<rect x="120" y="460" width="5" height="3" fill="#c2dfa6"/>
<rect x="160" y="470" width="4" height="3" fill="#c2dfa6"/>
<rect x="88" y="430" width="5" height="4" fill="#c2dfa6"/>
<rect x="172" y="440" width="6" height="4" fill="#c2dfa6"/>
<rect x="125" y="480" width="7" height="4" fill="#c2dfa6"/>
<rect x="140" y="495" width="5" height="3" fill="#c2dfa6"/>
<rect x="195" y="490" width="4" height="5" fill="#c2dfa6"/>
<rect x="210" y="465" width="5" height="4" fill="#c2dfa6"/>
<rect x="250" y="455" width="6" height="4" fill="#c2dfa6"/>
<polygon points="190.6,195.0 189.8,208.6 188.3,220.0 180.8,223.0 168.7,230.5 159.6,241.9 153.5,255.5 146.0,267.6 135.4,266.0 129.3,264.6 130.0,268.4 138.4,273.7 140.0,282.7 146.0,291.8 150.5,300.9 150.6,303.5 158.3,318.9 160.2,334.3 158.3,344.0 144.8,353.6 139.0,365.0 144.8,371.0 137.0,378.6 135.2,390.0 127.5,403.7 112.0,410.4 98.6,409.5 89.0,401.8 73.5,388.3 60.0,380.6 46.6,377.7 35.0,384.4 35.0,195.0" fill="#b5d0d0"/>
<path d="M190.6,195.0 L189.8,208.6 L188.3,220.0 L180.8,223.0 L168.7,230.5 L159.6,241.9 L153.5,255.5 L146.0,267.6 L135.4,266.0 L129.3,264.6 L130.0,268.4 L138.4,273.7 L140.0,282.7 L146.0,291.8 L150.5,300.9 L150.6,303.5 L158.3,318.9 L160.2,334.3 L158.3,344.0 L144.8,353.6 L139.0,365.0 L144.8,371.0 L137.0,378.6 L135.2,390.0 L127.5,403.7 L112.0,410.4 L98.6,409.5 L89.0,401.8 L73.5,388.3 L60.0,380.6 L46.6,377.7" fill="none" stroke="#9d5aae" stroke-width="2.6" stroke-dasharray="2.5 1.5" opacity="0.9"/>
<path d="M130.0,264.0 L148.0,275.0 L177.0,287.7 L190.0,296.7 L217.0,296.7 L231.8,307.6 L239.0,318.6" fill="none" stroke="#9d5aae" stroke-width="2.3" stroke-dasharray="2.5 1.5" opacity="0.85"/>
<path d="M237.7,313.0 L255.0,311.7 L278.2,321.3 L291.7,336.7 L293.6,342.5 L303.2,352.0 L311.0,369.5 L316.7,384.9 L326.7,400.4 L347.0,432.0 L365.0,461.7 L379.0,486.6 L392.5,489.0 L408.4,500.0 L415.0,514.0 L422.0,520.0" fill="none" stroke="#9d5aae" stroke-width="2.3" stroke-dasharray="2.5 1.5" opacity="0.85"/>
<path d="M140.0,420.0 L170.0,418.0 L200.0,425.0 L215.0,440.0 L240.0,445.0 L260.0,440.0 L300.0,440.0 L320.0,425.0" fill="none" stroke="#9d5aae" stroke-width="2.3" stroke-dasharray="2.5 1.5" opacity="0.85"/>
<path d="M175.0,365.0 L200.0,372.0 L215.0,390.0 L228.0,402.0 L245.0,425.0 L250.0,440.0" fill="none" stroke="#9d5aae" stroke-width="2.3" stroke-dasharray="2.5 1.5" opacity="0.85"/>
<path d="M210.0,365.0 L235.0,360.0 L260.0,370.0 L280.0,385.0 L300.0,390.0" fill="none" stroke="#9d5aae" stroke-width="2.3" stroke-dasharray="2.5 1.5" opacity="0.85"/>
<path d="M150.0,395.0 L180.0,400.0 L205.0,405.0 L220.0,395.0 L240.0,410.0 L265.0,400.0" fill="none" stroke="#9d5aae" stroke-width="2.3" stroke-dasharray="2.5 1.5" opacity="0.85"/>
<path d="M175.0,320.0 L200.0,325.0 L230.0,318.0 L238.0,305.0" fill="none" stroke="#9d5aae" stroke-width="2.3" stroke-dasharray="2.5 1.5" opacity="0.85"/>
<path d="M90.0,420.0 L120.0,428.0 L140.0,420.0" fill="none" stroke="#9d5aae" stroke-width="2.3" stroke-dasharray="2.5 1.5" opacity="0.85"/>
<path d="M165.0,365.0 L200.0,360.0 L240.0,350.0" fill="none" stroke="#9d5aae" stroke-width="2.3" stroke-dasharray="2.5 1.5" opacity="0.85"/>
<path d="M200.0,400.0 L215.0,380.0 L240.0,375.0 L260.0,385.0" fill="none" stroke="#9d5aae" stroke-width="2.3" stroke-dasharray="2.5 1.5" opacity="0.85"/>
<path d="M240.0,420.0 L270.0,420.0 L300.0,410.0" fill="none" stroke="#9d5aae" stroke-width="2.3" stroke-dasharray="2.5 1.5" opacity="0.85"/>
<path d="M270.0,445.0 L290.0,430.0 L310.0,425.0" fill="none" stroke="#9d5aae" stroke-width="2.3" stroke-dasharray="2.5 1.5" opacity="0.85"/>
<path d="M229.0,219.5 L210.0,260.0 L190.0,298.0 L170.0,365.0" fill="none" stroke="#f6b86c" stroke-width="2.4" stroke-linejoin="round"/>
<path d="M389.0,215.7 L405.0,220.0 L422.0,228.6" fill="none" stroke="#f6b86c" stroke-width="2.4" stroke-linejoin="round"/>
<path d="M35.0,397.0 L54.3,384.4 L64.0,385.0 L81.0,398.0 L96.7,411.4" fill="none" stroke="#f6b86c" stroke-width="2.4" stroke-linejoin="round"/>
<path d="M188.5,466.0 L196.0,488.5 L193.4,498.4 L205.8,508.0 L223.0,520.0" fill="none" stroke="#f6b86c" stroke-width="2.4" stroke-linejoin="round"/>
<path d="M188.5,466.0 L208.0,461.0 L230.0,460.0" fill="none" stroke="#f6b86c" stroke-width="2.4" stroke-linejoin="round"/>
<path d="M413.0,366.0 L413.0,423.0" fill="none" stroke="#f6b86c" stroke-width="2.4" stroke-linejoin="round"/>
<path d="M383.5,399.0 L422.0,399.0" fill="none" stroke="#f6b86c" stroke-width="2.4" stroke-linejoin="round"/>
<path d="M413.0,380.0 L422.0,380.0" fill="none" stroke="#f6b86c" stroke-width="2.4" stroke-linejoin="round"/>
<path d="M236.7,347.0 L264.7,348.3 L303.2,337.7" fill="none" stroke="#f6b86c" stroke-width="2.4" stroke-linejoin="round"/>
<path d="M160.0,384.0 L190.0,388.0 L215.0,392.0 L240.0,400.0" fill="none" stroke="#f6b86c" stroke-width="1.8" stroke-linejoin="round"/>
<path d="M160.0,384.0 L190.0,388.0 L215.0,392.0 L240.0,400.0" fill="none" stroke="#d98a9a" stroke-width="1.2" stroke-dasharray="2 2" opacity="0.8"/>
<path d="M155.0,395.0 L185.0,400.0 L210.0,405.0" fill="none" stroke="#f6b86c" stroke-width="1.8" stroke-linejoin="round"/>
<path d="M155.0,395.0 L185.0,400.0 L210.0,405.0" fill="none" stroke="#d98a9a" stroke-width="1.2" stroke-dasharray="2 2" opacity="0.8"/>
<path d="M175.0,365.0 L190.0,380.0 L205.0,400.0 L212.0,420.0" fill="none" stroke="#f6b86c" stroke-width="1.8" stroke-linejoin="round"/>
<path d="M175.0,365.0 L190.0,380.0 L205.0,400.0 L212.0,420.0" fill="none" stroke="#d98a9a" stroke-width="1.2" stroke-dasharray="2 2" opacity="0.8"/>
<path d="M190.8,373.5 L235.0,368.9 L242.0,361.8" fill="none" stroke="#f6b86c" stroke-width="1.8" stroke-linejoin="round"/>
<path d="M190.8,373.5 L235.0,368.9 L242.0,361.8" fill="none" stroke="#d98a9a" stroke-width="1.2" stroke-dasharray="2 2" opacity="0.8"/>
<path d="M160.0,392.0 L200.0,400.0 L230.0,405.0" fill="none" stroke="#f6b86c" stroke-width="1.8" stroke-linejoin="round"/>
<path d="M160.0,392.0 L200.0,400.0 L230.0,405.0" fill="none" stroke="#d98a9a" stroke-width="1.2" stroke-dasharray="2 2" opacity="0.8"/>
<path d="M162.0,405.0 L195.0,412.0 L222.0,418.0" fill="none" stroke="#f6b86c" stroke-width="1.8" stroke-linejoin="round"/>
<path d="M162.0,405.0 L195.0,412.0 L222.0,418.0" fill="none" stroke="#d98a9a" stroke-width="1.2" stroke-dasharray="2 2" opacity="0.8"/>
<path d="M165.0,418.0 L200.0,425.0" fill="none" stroke="#f6b86c" stroke-width="1.8" stroke-linejoin="round"/>
<path d="M165.0,418.0 L200.0,425.0" fill="none" stroke="#d98a9a" stroke-width="1.2" stroke-dasharray="2 2" opacity="0.8"/>
<path d="M203.0,195.0 L218.8,208.0 L247.0,231.0 L262.7,249.3 L265.3,262.2 L258.6,272.0 L241.6,304.0 L236.7,315.0 L198.0,342.0 L160.0,364.0 L151.0,380.6 L141.7,411.0 L121.7,415.0 L92.8,413.0 L73.5,405.6 L50.4,402.7 L35.0,401.8" fill="none" stroke="#e9949f" stroke-width="3" stroke-linejoin="round"/>
<path d="M393.0,195.0 L389.3,213.0 L361.0,246.7 L351.4,261.6 L345.6,275.0 L334.0,300.0 L324.4,327.0 L320.6,346.3" fill="none" stroke="#e9949f" stroke-width="3" stroke-linejoin="round"/>
<path d="M237.7,307.8 L258.9,304.0 L274.3,307.8 L293.6,323.2 L320.6,346.3 L355.2,357.9 L422.0,365.0" fill="none" stroke="#e9949f" stroke-width="3" stroke-linejoin="round"/>
<path d="M160.0,364.0 L165.0,380.0 L160.0,400.0 L155.0,412.0" fill="none" stroke="#e9949f" stroke-width="3" stroke-linejoin="round"/>
<path d="M200.0,365.0 L230.0,380.0 L250.0,400.0 L262.0,430.0 L265.0,445.0" fill="none" stroke="#d98a9a" stroke-width="2" stroke-dasharray="3 1.5" stroke-linejoin="round"/>
<path d="M215.0,392.0 L235.0,395.0 L260.0,400.0" fill="none" stroke="#d98a9a" stroke-width="2" stroke-dasharray="3 1.5" stroke-linejoin="round"/>
<path d="M240.0,400.0 L270.0,380.0 L300.0,380.0" fill="none" stroke="#d98a9a" stroke-width="2" stroke-dasharray="3 1.5" stroke-linejoin="round"/>
<path d="M209.5,383.0 L240.0,359.5" fill="none" stroke="#d98a9a" stroke-width="2" stroke-dasharray="3 1.5" stroke-linejoin="round"/>
<path d="M209.5,390.0 L228.2,411.0 L240.0,432.0 L244.6,443.7" fill="none" stroke="#d98a9a" stroke-width="2" stroke-dasharray="3 1.5" stroke-linejoin="round"/>
<path d="M197.8,350.0 L240.0,348.0" fill="none" stroke="#d98a9a" stroke-width="2" stroke-dasharray="3 1.5" stroke-linejoin="round"/>
<path d="M160.0,420.0 L185.0,395.0 L200.0,372.0" fill="none" stroke="#d98a9a" stroke-width="2" stroke-dasharray="3 1.5" stroke-linejoin="round"/>
<circle cx="258.5" cy="272.7" r="8" fill="#d48b95"/><circle cx="258.5" cy="272.7" r="6" fill="none" stroke="#fff" stroke-width="1.4"/><text x="258.5" y="276.4" font-size="10.5" font-weight="bold" fill="#fff" text-anchor="middle" font-family="Liberation Sans">1</text>
<circle cx="351.4" cy="261.6" r="8" fill="#d48b95"/><circle cx="351.4" cy="261.6" r="6" fill="none" stroke="#fff" stroke-width="1.4"/><text x="351.4" y="265.3" font-size="10.5" font-weight="bold" fill="#fff" text-anchor="middle" font-family="Liberation Sans">3</text>
<circle cx="320.6" cy="346.3" r="8" fill="#d48b95"/><circle cx="320.6" cy="346.3" r="6" fill="none" stroke="#fff" stroke-width="1.4"/><text x="320.6" y="350.0" font-size="10.5" font-weight="bold" fill="#fff" text-anchor="middle" font-family="Liberation Sans">3</text>
<circle cx="418" cy="194" r="8" fill="#d48b95"/><circle cx="418" cy="194" r="6" fill="none" stroke="#fff" stroke-width="1.4"/><text x="418" y="197.7" font-size="10.5" font-weight="bold" fill="#fff" text-anchor="middle" font-family="Liberation Sans">3</text>
<circle cx="302.2" cy="317.7" r="65.5" fill="#f7a928" fill-opacity="0.47" stroke="#f0a020" stroke-width="1.5"/>
<path d="M301.3,293.4 L311.3,301.6 L301.3,317.4 L291.7,301.6 Z" fill="#f00" stroke="#000" stroke-width="1.2" stroke-linejoin="miter"/><circle cx="301.3" cy="302.2" r="1.7" fill="#000"/>
<path d="M279,449.1 L283,456.1 L275,456.1 Z" fill="#d4894d"/>
<path d="M340.3,465.0 L344.3,472.0 L336.3,472.0 Z" fill="#d4894d"/>
<path d="M369.8,476.3 L373.8,483.3 L365.8,483.3 Z" fill="#d4894d"/>
<path d="M399.3,471.8 L403.3,478.8 L395.3,478.8 Z" fill="#d4894d"/>
<path d="M313,486.5 L317,493.5 L309,493.5 Z" fill="#d4894d"/>
<path d="M295,493.3 L299,500.3 L291,500.3 Z" fill="#d4894d"/>
<path d="M381,495.5 L385,502.5 L377,502.5 Z" fill="#d4894d"/>
<path d="M309.7,511.5 L313.7,518.5 L305.7,518.5 Z" fill="#d4894d"/>
<text x="133.9" y="351.4" font-size="14" font-family="Liberation Sans" fill="#1a1a1a" stroke="#fff" stroke-width="3" stroke-linejoin="round" paint-order="stroke">Cité Soleil</text>
<text x="114.2" y="394.5" font-size="14" font-family="Liberation Sans" fill="#1a1a1a" stroke="#fff" stroke-width="3" stroke-linejoin="round" paint-order="stroke">Port-au-Prince</text>
<text x="29" y="417.2" font-size="14" font-family="Liberation Sans" fill="#1a1a1a" stroke="#fff" stroke-width="3" stroke-linejoin="round" paint-order="stroke">Carrefour</text>
<text x="225" y="401.5" font-size="14" font-family="Liberation Sans" fill="#1a1a1a" stroke="#fff" stroke-width="3" stroke-linejoin="round" paint-order="stroke">Delmas</text>
<text x="205" y="450.3" font-size="14" font-family="Liberation Sans" fill="#1a1a1a" stroke="#fff" stroke-width="3" stroke-linejoin="round" paint-order="stroke">Pétionville</text>
</svg>
<div style="position:absolute;left:17px;top:15px;width:18px;height:40px;background:#2a3232;border-radius:4px"></div>
<div style="position:absolute;left:8px;top:26px;width:36px;height:18px;background:#2a3232;border-radius:4px"></div>
<svg style="position:absolute;left:0;top:0" width="90" height="330">
<path d="M26,20.3 L29.2,24 L22.8,24Z M26,49.3 L29.2,45.8 L22.8,45.8Z M10.8,35 L14.8,31.8 L14.8,38.2Z M41.2,35 L37.2,31.8 L37.2,38.2Z" fill="#fff"/>
</svg>
<div style="position:absolute;left:17px;top:67px;width:18px;height:18px;background:#2a3232;border-radius:4px 4px 0 0"></div>
<div style="position:absolute;left:22px;top:75px;width:8px;height:2px;background:#fff"></div>
<div style="position:absolute;left:25px;top:72px;width:2px;height:8px;background:#fff"></div>
<div style="position:absolute;left:17px;top:85px;width:18px;height:209px;background:rgba(0,0,0,0.28)"></div>
<div style="position:absolute;left:17px;top:102px;width:18px;height:1px;background:rgba(255,255,255,0.55)"></div><div style="position:absolute;left:17px;top:120px;width:18px;height:1px;background:rgba(255,255,255,0.55)"></div><div style="position:absolute;left:17px;top:137px;width:18px;height:1px;background:rgba(255,255,255,0.55)"></div><div style="position:absolute;left:17px;top:153px;width:18px;height:1px;background:rgba(255,255,255,0.55)"></div><div style="position:absolute;left:17px;top:171px;width:18px;height:1px;background:rgba(255,255,255,0.55)"></div><div style="position:absolute;left:17px;top:189px;width:18px;height:1px;background:rgba(255,255,255,0.55)"></div><div style="position:absolute;left:17px;top:207px;width:18px;height:1px;background:rgba(255,255,255,0.55)"></div><div style="position:absolute;left:17px;top:225px;width:18px;height:1px;background:rgba(255,255,255,0.55)"></div><div style="position:absolute;left:17px;top:243px;width:18px;height:1px;background:rgba(255,255,255,0.55)"></div><div style="position:absolute;left:17px;top:261px;width:18px;height:1px;background:rgba(255,255,255,0.55)"></div><div style="position:absolute;left:17px;top:278px;width:18px;height:1px;background:rgba(255,255,255,0.55)"></div>
<div style="position:absolute;left:16px;top:164px;width:20px;height:7px;background:#222a2a;border-radius:3px"></div>
<div style="position:absolute;left:20px;top:167px;width:12px;height:1px;background:#fff"></div>
<div style="position:absolute;left:17px;top:294px;width:18px;height:18px;background:#2a3232;border-radius:0 0 4px 4px"></div>
<div style="position:absolute;left:22px;top:302px;width:8px;height:2px;background:#fff"></div>
<svg style="position:absolute;left:0;top:0" width="85" height="24" viewBox="35 195 85 24">
<circle cx="45.5" cy="200.5" r="6" fill="#3b9fd6"/><path d="M40,199 Q43,195 47,196 Q45,199 48,201 Q44,203 40,202Z M49,197 Q51,198 51.5,201 Q49,201 48.5,199Z" fill="#5cb85c"/>
<path d="M36.5,201.5 L49.5,203.5 L47.5,215.5 L39,214Z" fill="#ece8f2" stroke="#a9a3b8" stroke-width="0.6"/>
<path d="M49.5,203.5 L55,200.5 L53,212 L47.5,215.5Z" fill="#cfc6dc" stroke="#a9a3b8" stroke-width="0.6"/>
<path d="M40.5,205.5 L46.5,206.3 L45.6,212.5 L41.2,212Z" fill="#d9323e"/>
<text x="60" y="210" font-family="Liberation Sans" font-size="15" fill="#fff" stroke="#505050" stroke-width="1.2" stroke-linejoin="round" paint-order="stroke">MapBox</text>
</svg>
<div class="a" style="left:91px;top:1px;font-size:12px;line-height:14px;color:#222">Data CC-By-SA by <span style="color:#3d63b8">OpenStreetMap</span>, <span style="font-size:11.5px">| Terms of Service</span></div>
</div>
<div id="coord"></div>
<div style="position:absolute;left:183px;top:521px;width:1px;height:19px;background:#8a8a8a"></div>
<div class="a" style="left:59px;top:524px;font-size:10.8px;line-height:13px;color:#333">-72.37072, 18.55676</div>

<div id="gray"></div>
<div class="inp" style="left:34px;top:570px;width:258px;height:31px"></div>
<div id="find">Find Location</div>
<div id="note">* If you can't find your location, please click on the map to pinpoint the correct<br>location.</div>
<div id="sbox"></div>
<div id="track"></div>
<div class="tick" style="left:201px"></div>
<div class="tick" style="left:276px"></div>
<div class="tick" style="left:351px"></div>
<div id="handle"></div>
<div class="lab" style="left:45px">1<br>KM</div>
<div class="lab" style="left:120px">5<br>KM</div>
<div class="lab" style="left:195px">10<br>KM</div>
<div class="lab" style="left:270px">20<br>KM</div>
<div class="lab" style="left:345px">50<br>KM</div>
<div class="lab" style="left:419px">100<br>KM</div>

<div class="cb" style="left:504px;top:150px"></div>
<div class="lb" style="top:147px"><b style="font-size:11.6px">Mobile phone:</b><br>enter mobile number with country code</div>
<div class="inp" style="left:526px;top:186px;width:365px;height:25px"></div>
<div class="cb" style="left:504px;top:242px"></div>
<div class="lb" style="top:240px"><b style="font-size:11.6px">email address:</b><br>enter email address</div>
<div class="inp" style="left:526px;top:279px;width:365px;height:25px"></div>

<div id="save">Save My Alert</div>
<div id="conf">Confirm A Previous Alert Request</div>
<div id="rss"></div>
<div class="h3" style="left:500px;top:472px;font-size:14.8px">RSS Feeds (copy the url below)</div>
<svg style="position:absolute;left:607px;top:511px" width="16" height="16" viewBox="0 0 16 16"><defs><linearGradient id="rg" x1="0" y1="0" x2="1" y2="1"><stop offset="0" stop-color="#fba94a"/><stop offset="1" stop-color="#ec6c12"/></linearGradient></defs><rect x="0.5" y="0.5" width="15" height="15" rx="3" fill="url(#rg)" stroke="#d0651a"/><circle cx="4.2" cy="11.8" r="1.6" fill="#fff"/><path d="M3,7.2 A5.8,5.8 0 0 1 8.8,13" fill="none" stroke="#fff" stroke-width="2"/><path d="M3,3.3 A9.7,9.7 0 0 1 12.7,13" fill="none" stroke="#fff" stroke-width="2"/></svg>
<div class="a" style="left:626px;top:511px;font-size:11.7px;font-weight:bold;line-height:14px;color:#2b5aa0">http://haiti.ushahidi.com/feed/</div>
</body></html>
